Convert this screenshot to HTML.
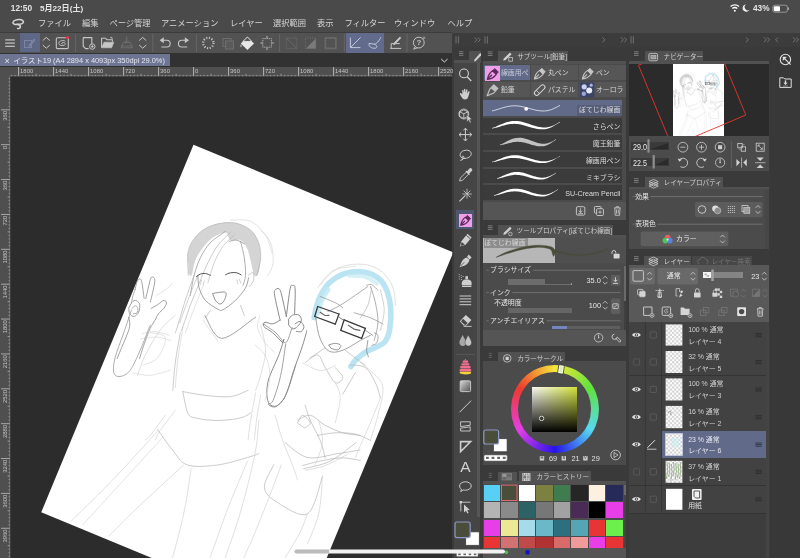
<!DOCTYPE html>
<html lang="ja"><head><meta charset="utf-8"><title>CLIP STUDIO PAINT</title>
<style>
html,body{margin:0;padding:0;background:#3d3d3d;}
#app{position:relative;width:800px;height:558px;overflow:hidden;background:#3d3d3d;font-family:"Liberation Sans","Noto Sans CJK JP",sans-serif;}
#app div,#app span{position:absolute;white-space:nowrap;}
#app svg.ov{position:absolute;left:0;top:0;will-change:transform;}
</style></head><body><div id="app">
<div style="left:0.00px;top:0.00px;width:800.00px;height:32.50px;background:#4a4a4a;"></div>
<div style="left:0.00px;top:32.50px;width:452.30px;height:20.70px;background:#525252;"></div>
<div style="left:0.00px;top:32.00px;width:452.30px;height:0.80px;background:#3c3c3c;"></div>
<div style="left:0.00px;top:53.00px;width:452.30px;height:1.20px;background:#333;"></div>
<div style="left:20.00px;top:33.00px;width:19.60px;height:19.00px;background:#5e6785;"></div>
<div style="left:345.80px;top:33.00px;width:38.60px;height:19.80px;background:#626b8c;"></div>
<div style="left:0.00px;top:54.20px;width:452.30px;height:12.50px;background:#323232;"></div>
<div style="left:0.00px;top:54.20px;width:170.00px;height:11.80px;background:#6e7592;"></div>
<div style="left:0.00px;top:66.60px;width:452.30px;height:491.40px;background:#2c2c2c;"></div>
<div style="left:0.00px;top:66.60px;width:452.30px;height:9.60px;background:#4f4f4f;"></div>
<div style="left:0.00px;top:66.60px;width:10.00px;height:491.40px;background:#4f4f4f;"></div>
<div style="left:0.00px;top:66.60px;width:10.00px;height:9.60px;background:#4f4f4f;"></div>
<div style="left:452.30px;top:32.50px;width:347.70px;height:525.50px;background:#3a3a3a;"></div>
<div style="left:452.30px;top:33.00px;width:347.70px;height:13.50px;background:#3c3c3c;"></div>
<div style="left:453.60px;top:49.60px;width:26.40px;height:508.40px;background:#454545;"></div>
<div style="left:453.60px;top:49.60px;width:27.40px;height:10.70px;background:#3a3a3a;"></div>
<div style="left:469.00px;top:50.60px;width:12.00px;height:9.70px;background:#515151;"></div>
<div style="left:453.60px;top:60.25px;width:27.40px;height:2.50px;background:#515151;"></div>
<div style="left:476.80px;top:62.75px;width:3.00px;height:454.70px;background:#565656;"></div>
<div style="left:456.00px;top:209.80px;width:18.20px;height:19.20px;background:#4f5871;"></div>
<div style="left:458.80px;top:213.60px;width:13.40px;height:13.20px;background:#f09ee8;"></div>
<div style="left:482.60px;top:49.60px;width:143.60px;height:170.00px;background:#4b4b4b;"></div>
<div style="left:482.60px;top:49.00px;width:143.60px;height:12.00px;background:#3a3a3a;"></div>
<div style="left:498.20px;top:51.00px;width:70.00px;height:10.00px;background:#515151;"></div>
<div style="left:482.60px;top:61.00px;width:143.60px;height:3.40px;background:#515151;"></div>
<div style="left:484.20px;top:65.20px;width:45.60px;height:15.00px;background:#616a89;"></div>
<div style="left:485.20px;top:66.40px;width:14.60px;height:14.30px;background:#f09ee8;"></div>
<div style="left:531.20px;top:65.20px;width:46.40px;height:15.00px;background:#565656;"></div>
<div style="left:579.20px;top:65.20px;width:46.60px;height:15.00px;background:#565656;"></div>
<div style="left:484.20px;top:81.80px;width:45.60px;height:15.40px;background:#565656;"></div>
<div style="left:531.20px;top:81.80px;width:46.40px;height:15.40px;background:#565656;"></div>
<div style="left:579.20px;top:81.80px;width:46.60px;height:15.40px;background:#565656;"></div>
<div style="left:483.20px;top:100.30px;width:139.00px;height:15.70px;background:#616a89;"></div>
<div style="left:576.60px;top:104.70px;width:45.60px;height:11.30px;background:#565d78;"></div>
<div style="left:483.20px;top:117.70px;width:139.00px;height:15.30px;background:#3b3b3b;"></div>
<div style="left:483.20px;top:134.90px;width:139.00px;height:15.10px;background:#3b3b3b;"></div>
<div style="left:483.20px;top:152.10px;width:139.00px;height:14.50px;background:#3b3b3b;"></div>
<div style="left:483.20px;top:168.50px;width:139.00px;height:14.70px;background:#3b3b3b;"></div>
<div style="left:483.20px;top:185.30px;width:139.00px;height:14.90px;background:#3b3b3b;"></div>
<div style="left:482.60px;top:201.80px;width:143.60px;height:17.80px;background:#555;"></div>
<div style="left:482.60px;top:221.60px;width:143.60px;height:124.60px;background:#4b4b4b;"></div>
<div style="left:482.60px;top:221.60px;width:143.60px;height:13.20px;background:#3a3a3a;"></div>
<div style="left:498.40px;top:225.00px;width:115.10px;height:9.80px;background:#515151;"></div>
<div style="left:482.60px;top:234.80px;width:143.60px;height:3.00px;background:#515151;"></div>
<div style="left:483.20px;top:237.80px;width:71.80px;height:25.20px;background:#b7b7b7;"></div>
<div style="left:555.00px;top:237.80px;width:71.20px;height:25.20px;background:#4f4f4f;"></div>
<div style="left:483.60px;top:238.20px;width:44.20px;height:10.00px;background:#8d8d8d;"></div>
<div style="left:508.40px;top:284.00px;width:63.40px;height:0.70px;background:#6e6e6e;"></div>
<div style="left:508.40px;top:279.40px;width:37.00px;height:5.20px;background:#6c6c6c;"></div>
<div style="left:571.20px;top:283.00px;width:0.80px;height:1.80px;background:#999;"></div>
<div style="left:508.40px;top:307.60px;width:63.40px;height:5.20px;background:#666;"></div>
<div style="left:552.00px;top:325.80px;width:68.00px;height:3.60px;background:#5e5e5e;"></div>
<div style="left:552.00px;top:325.80px;width:14.80px;height:3.60px;background:#7585bd;"></div>
<div style="left:623.80px;top:266.00px;width:2.40px;height:64.00px;background:#3f3f3f;"></div>
<div style="left:623.80px;top:266.00px;width:2.40px;height:35.40px;background:#6a6a6a;"></div>
<div style="left:482.60px;top:330.40px;width:143.60px;height:15.20px;background:#555;"></div>
<div style="left:482.60px;top:347.60px;width:143.60px;height:117.20px;background:#4b4b4b;"></div>
<div style="left:482.60px;top:347.60px;width:143.60px;height:13.40px;background:#3a3a3a;"></div>
<div style="left:498.40px;top:352.30px;width:66.40px;height:8.70px;background:#515151;"></div>
<div style="left:510.90px;top:365.10px;width:87.8px;height:87.8px;border-radius:50%;background:conic-gradient(from 300deg,#ee3a2e,#f4e83a,#5fe23f,#56daf0,#2614ea,#e63ee6,#ee3a2e);"></div>
<div style="left:518.20px;top:372.40px;width:73.2px;height:73.2px;border-radius:50%;background:#4b4b4b;"></div>
<div style="left:532.3px;top:386.9px;width:45.2px;height:45.2px;background:linear-gradient(to bottom,rgba(0,0,0,0),#000),linear-gradient(to right,#fafaf4,#d3e23a);"></div>
<div style="left:482.60px;top:466.60px;width:143.60px;height:91.40px;background:#4b4b4b;"></div>
<div style="left:482.60px;top:466.60px;width:143.60px;height:14.40px;background:#3a3a3a;"></div>
<div style="left:498.40px;top:471.60px;width:18.20px;height:9.40px;background:#515151;"></div>
<div style="left:519.00px;top:471.00px;width:72.00px;height:10.00px;background:#515151;"></div>
<div style="left:482.60px;top:481.00px;width:143.60px;height:3.00px;background:#515151;"></div>
<div style="left:483.50px;top:484.60px;width:16.50px;height:16.40px;background:#58d0f6;"></div>
<div style="left:501.00px;top:484.60px;width:16.50px;height:16.40px;background:#4a4d3a;"></div>
<div style="left:518.50px;top:484.60px;width:16.50px;height:16.40px;background:#ffffff;"></div>
<div style="left:536.00px;top:484.60px;width:16.50px;height:16.40px;background:#7c8040;"></div>
<div style="left:553.50px;top:484.60px;width:16.50px;height:16.40px;background:#3f7c50;"></div>
<div style="left:571.00px;top:484.60px;width:16.50px;height:16.40px;background:#262626;"></div>
<div style="left:588.50px;top:484.60px;width:16.50px;height:16.40px;background:#fdf0e0;"></div>
<div style="left:606.00px;top:484.60px;width:16.50px;height:16.40px;background:#262a58;"></div>
<div style="left:483.50px;top:502.10px;width:16.50px;height:16.40px;background:#b4b4b4;"></div>
<div style="left:501.00px;top:502.10px;width:16.50px;height:16.40px;background:#8a8a8a;"></div>
<div style="left:518.50px;top:502.10px;width:16.50px;height:16.40px;background:#2c6264;"></div>
<div style="left:536.00px;top:502.10px;width:16.50px;height:16.40px;background:#777777;"></div>
<div style="left:553.50px;top:502.10px;width:16.50px;height:16.40px;background:#a2a2a2;"></div>
<div style="left:571.00px;top:502.10px;width:16.50px;height:16.40px;background:#4a2a56;"></div>
<div style="left:588.50px;top:502.10px;width:16.50px;height:16.40px;background:#000000;"></div>
<div style="left:606.00px;top:502.10px;width:16.50px;height:16.40px;background:#e83ee8;"></div>
<div style="left:483.50px;top:519.60px;width:16.50px;height:16.40px;background:#e83ee8;"></div>
<div style="left:501.00px;top:519.60px;width:16.50px;height:16.40px;background:#ece896;"></div>
<div style="left:518.50px;top:519.60px;width:16.50px;height:16.40px;background:#a6dcea;"></div>
<div style="left:536.00px;top:519.60px;width:16.50px;height:16.40px;background:#6ab8c8;"></div>
<div style="left:553.50px;top:519.60px;width:16.50px;height:16.40px;background:#2c7080;"></div>
<div style="left:571.00px;top:519.60px;width:16.50px;height:16.40px;background:#54a6b6;"></div>
<div style="left:588.50px;top:519.60px;width:16.50px;height:16.40px;background:#e83434;"></div>
<div style="left:606.00px;top:519.60px;width:16.50px;height:16.40px;background:#6cf04c;"></div>
<div style="left:483.50px;top:537.10px;width:16.50px;height:11.00px;background:#e83434;"></div>
<div style="left:501.00px;top:537.10px;width:16.50px;height:11.00px;background:#d27272;"></div>
<div style="left:518.50px;top:537.10px;width:16.50px;height:11.00px;background:#c04a4a;"></div>
<div style="left:536.00px;top:537.10px;width:16.50px;height:11.00px;background:#b03232;"></div>
<div style="left:553.50px;top:537.10px;width:16.50px;height:11.00px;background:#d86a6a;"></div>
<div style="left:571.00px;top:537.10px;width:16.50px;height:11.00px;background:#f09a9a;"></div>
<div style="left:588.50px;top:537.10px;width:16.50px;height:11.00px;background:#e83ee8;"></div>
<div style="left:606.00px;top:537.10px;width:16.50px;height:11.00px;background:#e83434;"></div>
<div style="left:482.60px;top:548.20px;width:143.60px;height:9.80px;background:#555;"></div>
<div style="left:623.60px;top:485.00px;width:2.40px;height:63.00px;background:#444;"></div>
<div style="left:623.60px;top:485.00px;width:2.40px;height:10.00px;background:#6a6a6a;"></div>
<div style="left:628.80px;top:48.80px;width:140.40px;height:122.60px;background:#4b4b4b;"></div>
<div style="left:628.80px;top:48.80px;width:140.40px;height:12.40px;background:#3a3a3a;"></div>
<div style="left:644.70px;top:51.10px;width:58.80px;height:10.10px;background:#515151;"></div>
<div style="left:628.80px;top:61.20px;width:140.40px;height:2.50px;background:#515151;"></div>
<div style="left:628.80px;top:63.60px;width:140.40px;height:72.60px;background:#2b2b2b;"></div>
<div style="left:673.20px;top:63.60px;width:51.00px;height:72.60px;background:#ffffff;"></div>
<div style="left:631.40px;top:141.80px;width:37.80px;height:8.40px;background:#3a3a3a;"></div>
<div style="left:631.40px;top:157.60px;width:37.80px;height:8.40px;background:#3a3a3a;"></div>
<div style="left:628.80px;top:172.70px;width:140.40px;height:76.50px;background:#4b4b4b;"></div>
<div style="left:628.80px;top:172.70px;width:140.40px;height:14.10px;background:#3a3a3a;"></div>
<div style="left:644.70px;top:177.40px;width:78.70px;height:9.40px;background:#515151;"></div>
<div style="left:628.80px;top:186.80px;width:140.40px;height:2.30px;background:#515151;"></div>
<div style="left:765.40px;top:190.00px;width:3.80px;height:58.60px;background:#474747;"></div>
<div style="left:628.80px;top:250.60px;width:140.40px;height:307.40px;background:#3d3d3d;"></div>
<div style="left:628.80px;top:250.60px;width:140.40px;height:14.60px;background:#3a3a3a;"></div>
<div style="left:643.80px;top:255.60px;width:46.80px;height:9.60px;background:#515151;"></div>
<div style="left:692.20px;top:256.20px;width:59.80px;height:9.00px;background:#474747;"></div>
<div style="left:628.80px;top:265.20px;width:140.40px;height:56.40px;background:#595959;"></div>
<div style="left:702.80px;top:272.00px;width:40.00px;height:6.40px;background:#858585;"></div>
<div style="left:702.80px;top:272.00px;width:8.40px;height:6.40px;background:#f4f4f4;"></div>
<div style="left:628.80px;top:321.80px;width:136.80px;height:26.60px;background:#424242;"></div>
<div style="left:628.80px;top:347.90px;width:136.80px;height:0.90px;background:#343434;"></div>
<div style="left:628.80px;top:348.40px;width:136.80px;height:27.40px;background:#424242;"></div>
<div style="left:628.80px;top:375.30px;width:136.80px;height:0.90px;background:#343434;"></div>
<div style="left:628.80px;top:375.80px;width:136.80px;height:27.50px;background:#424242;"></div>
<div style="left:628.80px;top:402.80px;width:136.80px;height:0.90px;background:#343434;"></div>
<div style="left:628.80px;top:403.30px;width:136.80px;height:27.70px;background:#424242;"></div>
<div style="left:628.80px;top:430.50px;width:136.80px;height:0.90px;background:#343434;"></div>
<div style="left:628.80px;top:431.00px;width:136.80px;height:27.20px;background:#424242;"></div>
<div style="left:661.60px;top:431.00px;width:104.00px;height:27.20px;background:#626a89;"></div>
<div style="left:628.80px;top:457.70px;width:136.80px;height:0.90px;background:#343434;"></div>
<div style="left:628.80px;top:458.20px;width:136.80px;height:27.40px;background:#424242;"></div>
<div style="left:628.80px;top:485.10px;width:136.80px;height:0.90px;background:#343434;"></div>
<div style="left:628.80px;top:485.60px;width:136.80px;height:27.40px;background:#424242;"></div>
<div style="left:628.80px;top:512.50px;width:136.80px;height:0.90px;background:#343434;"></div>
<div style="left:765.60px;top:321.80px;width:3.60px;height:236.20px;background:#444444;"></div>
<div style="left:769.80px;top:46.50px;width:30.20px;height:511.50px;background:#383838;"></div>
<svg class="ov" width="800" height="558" viewBox="0 0 800 558" font-family='Liberation Sans,Noto Sans CJK JP,sans-serif'>
<rect x="772.80" y="5.20" width="14.60" height="7.00" fill="none" stroke="#aaa" stroke-width="0.8" rx="2" />
<rect x="773.80" y="6.20" width="6.20" height="5.00" fill="#fff" stroke="none" stroke-width="0" rx="1" />
<path d="M788.4,7.4 v2.6" fill="none" stroke="#aaa" stroke-width="1" />
<path d="M730.6,6.6 a6.2,6.2 0 0 1 8.4,0" fill="none" stroke="#fff" stroke-width="1.3" />
<path d="M732.3,8.6 a3.8,3.8 0 0 1 5,0" fill="none" stroke="#fff" stroke-width="1.3" />
<circle cx="734.80" cy="10.80" r="1.00" fill="#fff" stroke="none" stroke-width="1" />
<path d="M749.4,9.8 a3.6,3.6 0 1 1 -3.2,-5.3 a3,3 0 0 0 3.2,5.3 z" fill="#f0f0f0" stroke="none" stroke-width="1" />
<path d="M17.2,24.6 C14,24.6 12.6,23.4 13,22.2 C13.6,20.4 17,19.4 19.6,19.6 C22.4,19.8 23.8,21 23.4,22.2 C22.8,23.8 19.4,24.4 16.6,24 C18.6,24.6 20.6,25.6 20.4,26.8 C20.2,28 18.8,28.6 17.6,28.6" fill="none" stroke="#d6d6d6" stroke-width="1.5" stroke-linecap="round"/>
<line x1="5.20" y1="39.90" x2="14.90" y2="39.90" stroke="#c6c6c6" stroke-width="1.2" />
<line x1="5.20" y1="43.10" x2="14.90" y2="43.10" stroke="#c6c6c6" stroke-width="1.2" />
<line x1="5.20" y1="46.30" x2="14.90" y2="46.30" stroke="#c6c6c6" stroke-width="1.2" />
<rect x="24.50" y="40.50" width="7.00" height="7.00" fill="none" stroke="#7a84a3" stroke-width="1" rx="0" />
<path d="M28,46 L34,38.5 L35.5,39.8 L30,47 Z" fill="#7a84a3" stroke="none" stroke-width="1" />
<path d="M42.699999999999996,40.599999999999994 L46.3,37.4 L49.9,40.599999999999994" fill="none" stroke="#c6c6c6" stroke-width="1" />
<path d="M42.699999999999996,45.0 L46.3,48.199999999999996 L49.9,45.0" fill="none" stroke="#c6c6c6" stroke-width="1" />
<rect x="56.30" y="37.80" width="12.00" height="10.80" fill="none" stroke="#c6c6c6" stroke-width="1.1" rx="1.2" />
<path d="M65.5,41.2 C62,39.8 58.8,41 58.8,43.3 C58.8,45.6 62.5,46.3 64.6,45 C66.5,43.8 64.5,42 62.5,42.6 C61.2,43 61.5,44.2 62.8,44.2" fill="none" stroke="#c6c6c6" stroke-width="0.9" />
<circle cx="67.40" cy="37.60" r="1.70" fill="#e0354a" stroke="none" stroke-width="1" />
<line x1="75.60" y1="34.00" x2="75.60" y2="52.00" stroke="#6a6a6a" stroke-width="0.8" />
<path d="M83.2,37.6 h8.6 v7 M83.2,37.6 v8.6 l2.4,2.4 h3" fill="none" stroke="#c6c6c6" stroke-width="1.1" />
<circle cx="92.30" cy="46.60" r="2.70" fill="#525252" stroke="#c6c6c6" stroke-width="1" />
<path d="M90.8,46.6 h3 M92.3,45.1 v3" fill="none" stroke="#c6c6c6" stroke-width="0.9" />
<path d="M101.6,47.6 v-9.4 h4 l1.2,1.6 h5.6 v2" fill="none" stroke="#c6c6c6" stroke-width="1.1" />
<path d="M101.6,47.8 l2.4,-5.6 h9.8 l-2.2,5.6 z" fill="#c6c6c6" stroke="#c6c6c6" stroke-width="0.6" />
<path d="M110.2,37.4 h1.8 v1.6" fill="none" stroke="#c6c6c6" stroke-width="0.8" />
<path d="M121,47.8 l2.4,-5.2 h6.8 l2.4,5.2 z" fill="none" stroke="#6e6e6e" stroke-width="1" />
<path d="M126.8,36.6 v6 M124.6,40.6 l2.2,2.2 l2.2,-2.2" fill="none" stroke="#6e6e6e" stroke-width="1" />
<line x1="121.00" y1="46.00" x2="132.60" y2="46.00" stroke="#6e6e6e" stroke-width="0.8" />
<path d="M139.1,40.599999999999994 L142.7,37.4 L146.29999999999998,40.599999999999994" fill="none" stroke="#c6c6c6" stroke-width="1" />
<path d="M139.1,45.0 L142.7,48.199999999999996 L146.29999999999998,45.0" fill="none" stroke="#c6c6c6" stroke-width="1" />
<line x1="152.80" y1="34.00" x2="152.80" y2="52.00" stroke="#6a6a6a" stroke-width="0.8" />
<path d="M163.2,40.2 h3.6 a3.4,3.4 0 0 1 0,6.8 h-5.4" fill="none" stroke="#c6c6c6" stroke-width="1.1" />
<path d="M163.8,37.2 l-4.2,3 l4.2,3 z" fill="#c6c6c6" stroke="none" stroke-width="1" />
<path d="M185.4,40.2 h-3.6 a3.4,3.4 0 0 0 0,6.8 h5.4" fill="none" stroke="#c6c6c6" stroke-width="1.1" />
<path d="M184.8,37.2 l4.2,3 l-4.2,3 z" fill="#c6c6c6" stroke="none" stroke-width="1" />
<line x1="196.40" y1="34.00" x2="196.40" y2="52.00" stroke="#6a6a6a" stroke-width="0.8" />
<circle cx="208.30" cy="43.00" r="5.20" fill="none" stroke="#c6c6c6" stroke-width="2.2" stroke-dasharray="1.1 1.62"/>
<rect x="223.00" y="38.50" width="8.00" height="8.00" fill="none" stroke="#6e6e6e" stroke-width="1" rx="0" />
<rect x="225.50" y="41.00" width="8.00" height="8.00" fill="#5a5a5a" stroke="#6e6e6e" stroke-width="1" rx="0" />
<path d="M247.4,37 L254,43.6 L247.4,50 L240.8,43.6 Z" fill="#e8e8e8" stroke="none" stroke-width="1" />
<path d="M243,41.4 L247.4,37 L251.8,41.4 Z" fill="#525252" stroke="#e8e8e8" stroke-width="0.9" />
<path d="M241,44 q-1.2,2.4 0,3.6 q1.2,-1.2 0,-3.6" fill="#e8e8e8" stroke="none" stroke-width="1" />
<rect x="262.80" y="38.60" width="8.60" height="8.60" fill="none" stroke="#c6c6c6" stroke-width="0.9" rx="0" stroke-dasharray="1.15 1" stroke-dashoffset="0.5"/>
<path d="M267,36 v2.4 M267,47.6 v2.4 M260.4,43 h2.2 M271.6,43 h2.2" fill="none" stroke="#c6c6c6" stroke-width="0.9" />
<line x1="279.60" y1="34.00" x2="279.60" y2="52.00" stroke="#6a6a6a" stroke-width="0.8" />
<rect x="286.40" y="38.00" width="10.40" height="10.40" fill="none" stroke="#6e6e6e" stroke-width="0.9" rx="0" stroke-dasharray="1.2 1"/>
<line x1="286.40" y1="38.00" x2="296.80" y2="48.40" stroke="#6e6e6e" stroke-width="0.9" />
<rect x="305.40" y="38.00" width="10.40" height="10.40" fill="none" stroke="#6e6e6e" stroke-width="0.9" rx="0" stroke-dasharray="1.2 1"/>
<path d="M315.8,38.6 v9.8 h-9.8 z" fill="#7a7a7a" stroke="none" stroke-width="1" />
<rect x="325.40" y="38.00" width="10.40" height="10.40" fill="none" stroke="#6e6e6e" stroke-width="1.6" rx="0" />
<rect x="325.40" y="38.00" width="10.40" height="10.40" fill="none" stroke="#5a5a5a" stroke-width="0.6" rx="0" stroke-dasharray="1.2 1"/>
<line x1="344.30" y1="34.00" x2="344.30" y2="52.00" stroke="#6a6a6a" stroke-width="0.8" />
<path d="M350.4,37.6 v10 h10 M350.8,47.2 L360.6,37.4" fill="none" stroke="#c3c8da" stroke-width="1" />
<path d="M381,37.2 C379,41 376.5,44 374.4,44.2 L369,43.4 C368.6,46.4 371,48.6 375.4,48.2 C377.6,47.6 377.4,45.4 374.4,44.2" fill="none" stroke="#c3c8da" stroke-width="1" />
<path d="M390.2,48.4 h11 M391.2,48.4 v-4.8 h8.6 M394,43.4 L400,37.2" fill="none" stroke="#c6c6c6" stroke-width="1" />
<path d="M393.6,44.6 L400.6,37.4" fill="none" stroke="#c6c6c6" stroke-width="1.8" />
<line x1="407.00" y1="34.00" x2="407.00" y2="52.00" stroke="#6a6a6a" stroke-width="0.8" />
<circle cx="418.80" cy="42.60" r="5.40" fill="none" stroke="#c6c6c6" stroke-width="1" />
<path d="M415.2,46.6 l-1.6,2.6 l3.6,-1.2" fill="none" stroke="#c6c6c6" stroke-width="0.9" />
<circle cx="424.00" cy="37.80" r="0.90" fill="none" stroke="#c6c6c6" stroke-width="0.6" />
<path d="M441.2,59 l3.2,3 l3.2,-3" fill="none" stroke="#ddd" stroke-width="1" />
<line x1="18.60" y1="67.00" x2="18.60" y2="76.20" stroke="#cfcfcf" stroke-width="0.8" />
<text x="20.10" y="73" font-size="5.9" fill="#c4c4c4">1800</text>
<line x1="22.10" y1="74.90" x2="22.10" y2="76.20" stroke="#cfcfcf" stroke-width="0.6" />
<line x1="25.60" y1="74.90" x2="25.60" y2="76.20" stroke="#cfcfcf" stroke-width="0.6" />
<line x1="29.10" y1="74.90" x2="29.10" y2="76.20" stroke="#cfcfcf" stroke-width="0.6" />
<line x1="32.60" y1="74.90" x2="32.60" y2="76.20" stroke="#cfcfcf" stroke-width="0.6" />
<line x1="36.10" y1="73.80" x2="36.10" y2="76.20" stroke="#cfcfcf" stroke-width="0.6" />
<line x1="39.60" y1="74.90" x2="39.60" y2="76.20" stroke="#cfcfcf" stroke-width="0.6" />
<line x1="43.10" y1="74.90" x2="43.10" y2="76.20" stroke="#cfcfcf" stroke-width="0.6" />
<line x1="46.60" y1="74.90" x2="46.60" y2="76.20" stroke="#cfcfcf" stroke-width="0.6" />
<line x1="50.10" y1="74.90" x2="50.10" y2="76.20" stroke="#cfcfcf" stroke-width="0.6" />
<line x1="53.60" y1="67.00" x2="53.60" y2="76.20" stroke="#cfcfcf" stroke-width="0.8" />
<text x="55.10" y="73" font-size="5.9" fill="#c4c4c4">1440</text>
<line x1="57.10" y1="74.90" x2="57.10" y2="76.20" stroke="#cfcfcf" stroke-width="0.6" />
<line x1="60.60" y1="74.90" x2="60.60" y2="76.20" stroke="#cfcfcf" stroke-width="0.6" />
<line x1="64.10" y1="74.90" x2="64.10" y2="76.20" stroke="#cfcfcf" stroke-width="0.6" />
<line x1="67.60" y1="74.90" x2="67.60" y2="76.20" stroke="#cfcfcf" stroke-width="0.6" />
<line x1="71.10" y1="73.80" x2="71.10" y2="76.20" stroke="#cfcfcf" stroke-width="0.6" />
<line x1="74.60" y1="74.90" x2="74.60" y2="76.20" stroke="#cfcfcf" stroke-width="0.6" />
<line x1="78.10" y1="74.90" x2="78.10" y2="76.20" stroke="#cfcfcf" stroke-width="0.6" />
<line x1="81.60" y1="74.90" x2="81.60" y2="76.20" stroke="#cfcfcf" stroke-width="0.6" />
<line x1="85.10" y1="74.90" x2="85.10" y2="76.20" stroke="#cfcfcf" stroke-width="0.6" />
<line x1="88.60" y1="67.00" x2="88.60" y2="76.20" stroke="#cfcfcf" stroke-width="0.8" />
<text x="90.10" y="73" font-size="5.9" fill="#c4c4c4">1080</text>
<line x1="92.10" y1="74.90" x2="92.10" y2="76.20" stroke="#cfcfcf" stroke-width="0.6" />
<line x1="95.60" y1="74.90" x2="95.60" y2="76.20" stroke="#cfcfcf" stroke-width="0.6" />
<line x1="99.10" y1="74.90" x2="99.10" y2="76.20" stroke="#cfcfcf" stroke-width="0.6" />
<line x1="102.60" y1="74.90" x2="102.60" y2="76.20" stroke="#cfcfcf" stroke-width="0.6" />
<line x1="106.10" y1="73.80" x2="106.10" y2="76.20" stroke="#cfcfcf" stroke-width="0.6" />
<line x1="109.60" y1="74.90" x2="109.60" y2="76.20" stroke="#cfcfcf" stroke-width="0.6" />
<line x1="113.10" y1="74.90" x2="113.10" y2="76.20" stroke="#cfcfcf" stroke-width="0.6" />
<line x1="116.60" y1="74.90" x2="116.60" y2="76.20" stroke="#cfcfcf" stroke-width="0.6" />
<line x1="120.10" y1="74.90" x2="120.10" y2="76.20" stroke="#cfcfcf" stroke-width="0.6" />
<line x1="123.60" y1="67.00" x2="123.60" y2="76.20" stroke="#cfcfcf" stroke-width="0.8" />
<text x="125.10" y="73" font-size="5.9" fill="#c4c4c4">720</text>
<line x1="127.10" y1="74.90" x2="127.10" y2="76.20" stroke="#cfcfcf" stroke-width="0.6" />
<line x1="130.60" y1="74.90" x2="130.60" y2="76.20" stroke="#cfcfcf" stroke-width="0.6" />
<line x1="134.10" y1="74.90" x2="134.10" y2="76.20" stroke="#cfcfcf" stroke-width="0.6" />
<line x1="137.60" y1="74.90" x2="137.60" y2="76.20" stroke="#cfcfcf" stroke-width="0.6" />
<line x1="141.10" y1="73.80" x2="141.10" y2="76.20" stroke="#cfcfcf" stroke-width="0.6" />
<line x1="144.60" y1="74.90" x2="144.60" y2="76.20" stroke="#cfcfcf" stroke-width="0.6" />
<line x1="148.10" y1="74.90" x2="148.10" y2="76.20" stroke="#cfcfcf" stroke-width="0.6" />
<line x1="151.60" y1="74.90" x2="151.60" y2="76.20" stroke="#cfcfcf" stroke-width="0.6" />
<line x1="155.10" y1="74.90" x2="155.10" y2="76.20" stroke="#cfcfcf" stroke-width="0.6" />
<line x1="158.60" y1="67.00" x2="158.60" y2="76.20" stroke="#cfcfcf" stroke-width="0.8" />
<text x="160.10" y="73" font-size="5.9" fill="#c4c4c4">360</text>
<line x1="162.10" y1="74.90" x2="162.10" y2="76.20" stroke="#cfcfcf" stroke-width="0.6" />
<line x1="165.60" y1="74.90" x2="165.60" y2="76.20" stroke="#cfcfcf" stroke-width="0.6" />
<line x1="169.10" y1="74.90" x2="169.10" y2="76.20" stroke="#cfcfcf" stroke-width="0.6" />
<line x1="172.60" y1="74.90" x2="172.60" y2="76.20" stroke="#cfcfcf" stroke-width="0.6" />
<line x1="176.10" y1="73.80" x2="176.10" y2="76.20" stroke="#cfcfcf" stroke-width="0.6" />
<line x1="179.60" y1="74.90" x2="179.60" y2="76.20" stroke="#cfcfcf" stroke-width="0.6" />
<line x1="183.10" y1="74.90" x2="183.10" y2="76.20" stroke="#cfcfcf" stroke-width="0.6" />
<line x1="186.60" y1="74.90" x2="186.60" y2="76.20" stroke="#cfcfcf" stroke-width="0.6" />
<line x1="190.10" y1="74.90" x2="190.10" y2="76.20" stroke="#cfcfcf" stroke-width="0.6" />
<line x1="193.60" y1="67.00" x2="193.60" y2="76.20" stroke="#cfcfcf" stroke-width="0.8" />
<text x="195.10" y="73" font-size="5.9" fill="#c4c4c4">0</text>
<line x1="197.10" y1="74.90" x2="197.10" y2="76.20" stroke="#cfcfcf" stroke-width="0.6" />
<line x1="200.60" y1="74.90" x2="200.60" y2="76.20" stroke="#cfcfcf" stroke-width="0.6" />
<line x1="204.10" y1="74.90" x2="204.10" y2="76.20" stroke="#cfcfcf" stroke-width="0.6" />
<line x1="207.60" y1="74.90" x2="207.60" y2="76.20" stroke="#cfcfcf" stroke-width="0.6" />
<line x1="211.10" y1="73.80" x2="211.10" y2="76.20" stroke="#cfcfcf" stroke-width="0.6" />
<line x1="214.60" y1="74.90" x2="214.60" y2="76.20" stroke="#cfcfcf" stroke-width="0.6" />
<line x1="218.10" y1="74.90" x2="218.10" y2="76.20" stroke="#cfcfcf" stroke-width="0.6" />
<line x1="221.60" y1="74.90" x2="221.60" y2="76.20" stroke="#cfcfcf" stroke-width="0.6" />
<line x1="225.10" y1="74.90" x2="225.10" y2="76.20" stroke="#cfcfcf" stroke-width="0.6" />
<line x1="228.60" y1="67.00" x2="228.60" y2="76.20" stroke="#cfcfcf" stroke-width="0.8" />
<text x="230.10" y="73" font-size="5.9" fill="#c4c4c4">360</text>
<line x1="232.10" y1="74.90" x2="232.10" y2="76.20" stroke="#cfcfcf" stroke-width="0.6" />
<line x1="235.60" y1="74.90" x2="235.60" y2="76.20" stroke="#cfcfcf" stroke-width="0.6" />
<line x1="239.10" y1="74.90" x2="239.10" y2="76.20" stroke="#cfcfcf" stroke-width="0.6" />
<line x1="242.60" y1="74.90" x2="242.60" y2="76.20" stroke="#cfcfcf" stroke-width="0.6" />
<line x1="246.10" y1="73.80" x2="246.10" y2="76.20" stroke="#cfcfcf" stroke-width="0.6" />
<line x1="249.60" y1="74.90" x2="249.60" y2="76.20" stroke="#cfcfcf" stroke-width="0.6" />
<line x1="253.10" y1="74.90" x2="253.10" y2="76.20" stroke="#cfcfcf" stroke-width="0.6" />
<line x1="256.60" y1="74.90" x2="256.60" y2="76.20" stroke="#cfcfcf" stroke-width="0.6" />
<line x1="260.10" y1="74.90" x2="260.10" y2="76.20" stroke="#cfcfcf" stroke-width="0.6" />
<line x1="263.60" y1="67.00" x2="263.60" y2="76.20" stroke="#cfcfcf" stroke-width="0.8" />
<text x="265.10" y="73" font-size="5.9" fill="#c4c4c4">720</text>
<line x1="267.10" y1="74.90" x2="267.10" y2="76.20" stroke="#cfcfcf" stroke-width="0.6" />
<line x1="270.60" y1="74.90" x2="270.60" y2="76.20" stroke="#cfcfcf" stroke-width="0.6" />
<line x1="274.10" y1="74.90" x2="274.10" y2="76.20" stroke="#cfcfcf" stroke-width="0.6" />
<line x1="277.60" y1="74.90" x2="277.60" y2="76.20" stroke="#cfcfcf" stroke-width="0.6" />
<line x1="281.10" y1="73.80" x2="281.10" y2="76.20" stroke="#cfcfcf" stroke-width="0.6" />
<line x1="284.60" y1="74.90" x2="284.60" y2="76.20" stroke="#cfcfcf" stroke-width="0.6" />
<line x1="288.10" y1="74.90" x2="288.10" y2="76.20" stroke="#cfcfcf" stroke-width="0.6" />
<line x1="291.60" y1="74.90" x2="291.60" y2="76.20" stroke="#cfcfcf" stroke-width="0.6" />
<line x1="295.10" y1="74.90" x2="295.10" y2="76.20" stroke="#cfcfcf" stroke-width="0.6" />
<line x1="298.60" y1="67.00" x2="298.60" y2="76.20" stroke="#cfcfcf" stroke-width="0.8" />
<text x="300.10" y="73" font-size="5.9" fill="#c4c4c4">1080</text>
<line x1="302.10" y1="74.90" x2="302.10" y2="76.20" stroke="#cfcfcf" stroke-width="0.6" />
<line x1="305.60" y1="74.90" x2="305.60" y2="76.20" stroke="#cfcfcf" stroke-width="0.6" />
<line x1="309.10" y1="74.90" x2="309.10" y2="76.20" stroke="#cfcfcf" stroke-width="0.6" />
<line x1="312.60" y1="74.90" x2="312.60" y2="76.20" stroke="#cfcfcf" stroke-width="0.6" />
<line x1="316.10" y1="73.80" x2="316.10" y2="76.20" stroke="#cfcfcf" stroke-width="0.6" />
<line x1="319.60" y1="74.90" x2="319.60" y2="76.20" stroke="#cfcfcf" stroke-width="0.6" />
<line x1="323.10" y1="74.90" x2="323.10" y2="76.20" stroke="#cfcfcf" stroke-width="0.6" />
<line x1="326.60" y1="74.90" x2="326.60" y2="76.20" stroke="#cfcfcf" stroke-width="0.6" />
<line x1="330.10" y1="74.90" x2="330.10" y2="76.20" stroke="#cfcfcf" stroke-width="0.6" />
<line x1="333.60" y1="67.00" x2="333.60" y2="76.20" stroke="#cfcfcf" stroke-width="0.8" />
<text x="335.10" y="73" font-size="5.9" fill="#c4c4c4">1440</text>
<line x1="337.10" y1="74.90" x2="337.10" y2="76.20" stroke="#cfcfcf" stroke-width="0.6" />
<line x1="340.60" y1="74.90" x2="340.60" y2="76.20" stroke="#cfcfcf" stroke-width="0.6" />
<line x1="344.10" y1="74.90" x2="344.10" y2="76.20" stroke="#cfcfcf" stroke-width="0.6" />
<line x1="347.60" y1="74.90" x2="347.60" y2="76.20" stroke="#cfcfcf" stroke-width="0.6" />
<line x1="351.10" y1="73.80" x2="351.10" y2="76.20" stroke="#cfcfcf" stroke-width="0.6" />
<line x1="354.60" y1="74.90" x2="354.60" y2="76.20" stroke="#cfcfcf" stroke-width="0.6" />
<line x1="358.10" y1="74.90" x2="358.10" y2="76.20" stroke="#cfcfcf" stroke-width="0.6" />
<line x1="361.60" y1="74.90" x2="361.60" y2="76.20" stroke="#cfcfcf" stroke-width="0.6" />
<line x1="365.10" y1="74.90" x2="365.10" y2="76.20" stroke="#cfcfcf" stroke-width="0.6" />
<line x1="368.60" y1="67.00" x2="368.60" y2="76.20" stroke="#cfcfcf" stroke-width="0.8" />
<text x="370.10" y="73" font-size="5.9" fill="#c4c4c4">1800</text>
<line x1="372.10" y1="74.90" x2="372.10" y2="76.20" stroke="#cfcfcf" stroke-width="0.6" />
<line x1="375.60" y1="74.90" x2="375.60" y2="76.20" stroke="#cfcfcf" stroke-width="0.6" />
<line x1="379.10" y1="74.90" x2="379.10" y2="76.20" stroke="#cfcfcf" stroke-width="0.6" />
<line x1="382.60" y1="74.90" x2="382.60" y2="76.20" stroke="#cfcfcf" stroke-width="0.6" />
<line x1="386.10" y1="73.80" x2="386.10" y2="76.20" stroke="#cfcfcf" stroke-width="0.6" />
<line x1="389.60" y1="74.90" x2="389.60" y2="76.20" stroke="#cfcfcf" stroke-width="0.6" />
<line x1="393.10" y1="74.90" x2="393.10" y2="76.20" stroke="#cfcfcf" stroke-width="0.6" />
<line x1="396.60" y1="74.90" x2="396.60" y2="76.20" stroke="#cfcfcf" stroke-width="0.6" />
<line x1="400.10" y1="74.90" x2="400.10" y2="76.20" stroke="#cfcfcf" stroke-width="0.6" />
<line x1="403.60" y1="67.00" x2="403.60" y2="76.20" stroke="#cfcfcf" stroke-width="0.8" />
<text x="405.10" y="73" font-size="5.9" fill="#c4c4c4">2160</text>
<line x1="407.10" y1="74.90" x2="407.10" y2="76.20" stroke="#cfcfcf" stroke-width="0.6" />
<line x1="410.60" y1="74.90" x2="410.60" y2="76.20" stroke="#cfcfcf" stroke-width="0.6" />
<line x1="414.10" y1="74.90" x2="414.10" y2="76.20" stroke="#cfcfcf" stroke-width="0.6" />
<line x1="417.60" y1="74.90" x2="417.60" y2="76.20" stroke="#cfcfcf" stroke-width="0.6" />
<line x1="421.10" y1="73.80" x2="421.10" y2="76.20" stroke="#cfcfcf" stroke-width="0.6" />
<line x1="424.60" y1="74.90" x2="424.60" y2="76.20" stroke="#cfcfcf" stroke-width="0.6" />
<line x1="428.10" y1="74.90" x2="428.10" y2="76.20" stroke="#cfcfcf" stroke-width="0.6" />
<line x1="431.60" y1="74.90" x2="431.60" y2="76.20" stroke="#cfcfcf" stroke-width="0.6" />
<line x1="435.10" y1="74.90" x2="435.10" y2="76.20" stroke="#cfcfcf" stroke-width="0.6" />
<line x1="438.60" y1="67.00" x2="438.60" y2="76.20" stroke="#cfcfcf" stroke-width="0.8" />
<text x="440.10" y="73" font-size="5.9" fill="#c4c4c4">2520</text>
<line x1="442.10" y1="74.90" x2="442.10" y2="76.20" stroke="#cfcfcf" stroke-width="0.6" />
<line x1="445.60" y1="74.90" x2="445.60" y2="76.20" stroke="#cfcfcf" stroke-width="0.6" />
<line x1="449.10" y1="74.90" x2="449.10" y2="76.20" stroke="#cfcfcf" stroke-width="0.6" />
<line x1="15.10" y1="74.90" x2="15.10" y2="76.20" stroke="#cfcfcf" stroke-width="0.6" />
<line x1="11.60" y1="74.90" x2="11.60" y2="76.20" stroke="#cfcfcf" stroke-width="0.6" />
<line x1="10.00" y1="75.90" x2="452.30" y2="75.90" stroke="#8a8a8a" stroke-width="0.6" />
<line x1="1.00" y1="109.83" x2="10.00" y2="109.83" stroke="#cfcfcf" stroke-width="0.7" />
<text transform="translate(6.6,111.03) rotate(-90)" text-anchor="end" font-size="5.9" fill="#c4c4c4">360</text>
<line x1="8.70" y1="113.32" x2="10.00" y2="113.32" stroke="#cfcfcf" stroke-width="0.6" />
<line x1="8.70" y1="116.80" x2="10.00" y2="116.80" stroke="#cfcfcf" stroke-width="0.6" />
<line x1="8.70" y1="120.29" x2="10.00" y2="120.29" stroke="#cfcfcf" stroke-width="0.6" />
<line x1="8.70" y1="123.78" x2="10.00" y2="123.78" stroke="#cfcfcf" stroke-width="0.6" />
<line x1="7.60" y1="127.26" x2="10.00" y2="127.26" stroke="#cfcfcf" stroke-width="0.6" />
<line x1="8.70" y1="130.75" x2="10.00" y2="130.75" stroke="#cfcfcf" stroke-width="0.6" />
<line x1="8.70" y1="134.24" x2="10.00" y2="134.24" stroke="#cfcfcf" stroke-width="0.6" />
<line x1="8.70" y1="137.73" x2="10.00" y2="137.73" stroke="#cfcfcf" stroke-width="0.6" />
<line x1="8.70" y1="141.21" x2="10.00" y2="141.21" stroke="#cfcfcf" stroke-width="0.6" />
<line x1="1.00" y1="144.70" x2="10.00" y2="144.70" stroke="#cfcfcf" stroke-width="0.7" />
<text transform="translate(6.6,145.90) rotate(-90)" text-anchor="end" font-size="5.9" fill="#c4c4c4">0</text>
<line x1="8.70" y1="148.19" x2="10.00" y2="148.19" stroke="#cfcfcf" stroke-width="0.6" />
<line x1="8.70" y1="151.67" x2="10.00" y2="151.67" stroke="#cfcfcf" stroke-width="0.6" />
<line x1="8.70" y1="155.16" x2="10.00" y2="155.16" stroke="#cfcfcf" stroke-width="0.6" />
<line x1="8.70" y1="158.65" x2="10.00" y2="158.65" stroke="#cfcfcf" stroke-width="0.6" />
<line x1="7.60" y1="162.13" x2="10.00" y2="162.13" stroke="#cfcfcf" stroke-width="0.6" />
<line x1="8.70" y1="165.62" x2="10.00" y2="165.62" stroke="#cfcfcf" stroke-width="0.6" />
<line x1="8.70" y1="169.11" x2="10.00" y2="169.11" stroke="#cfcfcf" stroke-width="0.6" />
<line x1="8.70" y1="172.60" x2="10.00" y2="172.60" stroke="#cfcfcf" stroke-width="0.6" />
<line x1="8.70" y1="176.08" x2="10.00" y2="176.08" stroke="#cfcfcf" stroke-width="0.6" />
<line x1="1.00" y1="179.57" x2="10.00" y2="179.57" stroke="#cfcfcf" stroke-width="0.7" />
<text transform="translate(6.6,180.77) rotate(-90)" text-anchor="end" font-size="5.9" fill="#c4c4c4">360</text>
<line x1="8.70" y1="183.06" x2="10.00" y2="183.06" stroke="#cfcfcf" stroke-width="0.6" />
<line x1="8.70" y1="186.54" x2="10.00" y2="186.54" stroke="#cfcfcf" stroke-width="0.6" />
<line x1="8.70" y1="190.03" x2="10.00" y2="190.03" stroke="#cfcfcf" stroke-width="0.6" />
<line x1="8.70" y1="193.52" x2="10.00" y2="193.52" stroke="#cfcfcf" stroke-width="0.6" />
<line x1="7.60" y1="197.00" x2="10.00" y2="197.00" stroke="#cfcfcf" stroke-width="0.6" />
<line x1="8.70" y1="200.49" x2="10.00" y2="200.49" stroke="#cfcfcf" stroke-width="0.6" />
<line x1="8.70" y1="203.98" x2="10.00" y2="203.98" stroke="#cfcfcf" stroke-width="0.6" />
<line x1="8.70" y1="207.47" x2="10.00" y2="207.47" stroke="#cfcfcf" stroke-width="0.6" />
<line x1="8.70" y1="210.95" x2="10.00" y2="210.95" stroke="#cfcfcf" stroke-width="0.6" />
<line x1="1.00" y1="214.44" x2="10.00" y2="214.44" stroke="#cfcfcf" stroke-width="0.7" />
<text transform="translate(6.6,215.64) rotate(-90)" text-anchor="end" font-size="5.9" fill="#c4c4c4">720</text>
<line x1="8.70" y1="217.93" x2="10.00" y2="217.93" stroke="#cfcfcf" stroke-width="0.6" />
<line x1="8.70" y1="221.41" x2="10.00" y2="221.41" stroke="#cfcfcf" stroke-width="0.6" />
<line x1="8.70" y1="224.90" x2="10.00" y2="224.90" stroke="#cfcfcf" stroke-width="0.6" />
<line x1="8.70" y1="228.39" x2="10.00" y2="228.39" stroke="#cfcfcf" stroke-width="0.6" />
<line x1="7.60" y1="231.88" x2="10.00" y2="231.88" stroke="#cfcfcf" stroke-width="0.6" />
<line x1="8.70" y1="235.36" x2="10.00" y2="235.36" stroke="#cfcfcf" stroke-width="0.6" />
<line x1="8.70" y1="238.85" x2="10.00" y2="238.85" stroke="#cfcfcf" stroke-width="0.6" />
<line x1="8.70" y1="242.34" x2="10.00" y2="242.34" stroke="#cfcfcf" stroke-width="0.6" />
<line x1="8.70" y1="245.82" x2="10.00" y2="245.82" stroke="#cfcfcf" stroke-width="0.6" />
<line x1="1.00" y1="249.31" x2="10.00" y2="249.31" stroke="#cfcfcf" stroke-width="0.7" />
<text transform="translate(6.6,250.51) rotate(-90)" text-anchor="end" font-size="5.9" fill="#c4c4c4">1080</text>
<line x1="8.70" y1="252.80" x2="10.00" y2="252.80" stroke="#cfcfcf" stroke-width="0.6" />
<line x1="8.70" y1="256.28" x2="10.00" y2="256.28" stroke="#cfcfcf" stroke-width="0.6" />
<line x1="8.70" y1="259.77" x2="10.00" y2="259.77" stroke="#cfcfcf" stroke-width="0.6" />
<line x1="8.70" y1="263.26" x2="10.00" y2="263.26" stroke="#cfcfcf" stroke-width="0.6" />
<line x1="7.60" y1="266.74" x2="10.00" y2="266.74" stroke="#cfcfcf" stroke-width="0.6" />
<line x1="8.70" y1="270.23" x2="10.00" y2="270.23" stroke="#cfcfcf" stroke-width="0.6" />
<line x1="8.70" y1="273.72" x2="10.00" y2="273.72" stroke="#cfcfcf" stroke-width="0.6" />
<line x1="8.70" y1="277.21" x2="10.00" y2="277.21" stroke="#cfcfcf" stroke-width="0.6" />
<line x1="8.70" y1="280.69" x2="10.00" y2="280.69" stroke="#cfcfcf" stroke-width="0.6" />
<line x1="1.00" y1="284.18" x2="10.00" y2="284.18" stroke="#cfcfcf" stroke-width="0.7" />
<text transform="translate(6.6,285.38) rotate(-90)" text-anchor="end" font-size="5.9" fill="#c4c4c4">1440</text>
<line x1="8.70" y1="287.67" x2="10.00" y2="287.67" stroke="#cfcfcf" stroke-width="0.6" />
<line x1="8.70" y1="291.15" x2="10.00" y2="291.15" stroke="#cfcfcf" stroke-width="0.6" />
<line x1="8.70" y1="294.64" x2="10.00" y2="294.64" stroke="#cfcfcf" stroke-width="0.6" />
<line x1="8.70" y1="298.13" x2="10.00" y2="298.13" stroke="#cfcfcf" stroke-width="0.6" />
<line x1="7.60" y1="301.61" x2="10.00" y2="301.61" stroke="#cfcfcf" stroke-width="0.6" />
<line x1="8.70" y1="305.10" x2="10.00" y2="305.10" stroke="#cfcfcf" stroke-width="0.6" />
<line x1="8.70" y1="308.59" x2="10.00" y2="308.59" stroke="#cfcfcf" stroke-width="0.6" />
<line x1="8.70" y1="312.08" x2="10.00" y2="312.08" stroke="#cfcfcf" stroke-width="0.6" />
<line x1="8.70" y1="315.56" x2="10.00" y2="315.56" stroke="#cfcfcf" stroke-width="0.6" />
<line x1="1.00" y1="319.05" x2="10.00" y2="319.05" stroke="#cfcfcf" stroke-width="0.7" />
<text transform="translate(6.6,320.25) rotate(-90)" text-anchor="end" font-size="5.9" fill="#c4c4c4">1800</text>
<line x1="8.70" y1="322.54" x2="10.00" y2="322.54" stroke="#cfcfcf" stroke-width="0.6" />
<line x1="8.70" y1="326.02" x2="10.00" y2="326.02" stroke="#cfcfcf" stroke-width="0.6" />
<line x1="8.70" y1="329.51" x2="10.00" y2="329.51" stroke="#cfcfcf" stroke-width="0.6" />
<line x1="8.70" y1="333.00" x2="10.00" y2="333.00" stroke="#cfcfcf" stroke-width="0.6" />
<line x1="7.60" y1="336.48" x2="10.00" y2="336.48" stroke="#cfcfcf" stroke-width="0.6" />
<line x1="8.70" y1="339.97" x2="10.00" y2="339.97" stroke="#cfcfcf" stroke-width="0.6" />
<line x1="8.70" y1="343.46" x2="10.00" y2="343.46" stroke="#cfcfcf" stroke-width="0.6" />
<line x1="8.70" y1="346.95" x2="10.00" y2="346.95" stroke="#cfcfcf" stroke-width="0.6" />
<line x1="8.70" y1="350.43" x2="10.00" y2="350.43" stroke="#cfcfcf" stroke-width="0.6" />
<line x1="1.00" y1="353.92" x2="10.00" y2="353.92" stroke="#cfcfcf" stroke-width="0.7" />
<text transform="translate(6.6,355.12) rotate(-90)" text-anchor="end" font-size="5.9" fill="#c4c4c4">2160</text>
<line x1="8.70" y1="357.41" x2="10.00" y2="357.41" stroke="#cfcfcf" stroke-width="0.6" />
<line x1="8.70" y1="360.89" x2="10.00" y2="360.89" stroke="#cfcfcf" stroke-width="0.6" />
<line x1="8.70" y1="364.38" x2="10.00" y2="364.38" stroke="#cfcfcf" stroke-width="0.6" />
<line x1="8.70" y1="367.87" x2="10.00" y2="367.87" stroke="#cfcfcf" stroke-width="0.6" />
<line x1="7.60" y1="371.35" x2="10.00" y2="371.35" stroke="#cfcfcf" stroke-width="0.6" />
<line x1="8.70" y1="374.84" x2="10.00" y2="374.84" stroke="#cfcfcf" stroke-width="0.6" />
<line x1="8.70" y1="378.33" x2="10.00" y2="378.33" stroke="#cfcfcf" stroke-width="0.6" />
<line x1="8.70" y1="381.82" x2="10.00" y2="381.82" stroke="#cfcfcf" stroke-width="0.6" />
<line x1="8.70" y1="385.30" x2="10.00" y2="385.30" stroke="#cfcfcf" stroke-width="0.6" />
<line x1="1.00" y1="388.79" x2="10.00" y2="388.79" stroke="#cfcfcf" stroke-width="0.7" />
<text transform="translate(6.6,389.99) rotate(-90)" text-anchor="end" font-size="5.9" fill="#c4c4c4">2520</text>
<line x1="8.70" y1="392.28" x2="10.00" y2="392.28" stroke="#cfcfcf" stroke-width="0.6" />
<line x1="8.70" y1="395.76" x2="10.00" y2="395.76" stroke="#cfcfcf" stroke-width="0.6" />
<line x1="8.70" y1="399.25" x2="10.00" y2="399.25" stroke="#cfcfcf" stroke-width="0.6" />
<line x1="8.70" y1="402.74" x2="10.00" y2="402.74" stroke="#cfcfcf" stroke-width="0.6" />
<line x1="7.60" y1="406.22" x2="10.00" y2="406.22" stroke="#cfcfcf" stroke-width="0.6" />
<line x1="8.70" y1="409.71" x2="10.00" y2="409.71" stroke="#cfcfcf" stroke-width="0.6" />
<line x1="8.70" y1="413.20" x2="10.00" y2="413.20" stroke="#cfcfcf" stroke-width="0.6" />
<line x1="8.70" y1="416.69" x2="10.00" y2="416.69" stroke="#cfcfcf" stroke-width="0.6" />
<line x1="8.70" y1="420.17" x2="10.00" y2="420.17" stroke="#cfcfcf" stroke-width="0.6" />
<line x1="1.00" y1="423.66" x2="10.00" y2="423.66" stroke="#cfcfcf" stroke-width="0.7" />
<text transform="translate(6.6,424.86) rotate(-90)" text-anchor="end" font-size="5.9" fill="#c4c4c4">2880</text>
<line x1="8.70" y1="427.15" x2="10.00" y2="427.15" stroke="#cfcfcf" stroke-width="0.6" />
<line x1="8.70" y1="430.63" x2="10.00" y2="430.63" stroke="#cfcfcf" stroke-width="0.6" />
<line x1="8.70" y1="434.12" x2="10.00" y2="434.12" stroke="#cfcfcf" stroke-width="0.6" />
<line x1="8.70" y1="437.61" x2="10.00" y2="437.61" stroke="#cfcfcf" stroke-width="0.6" />
<line x1="7.60" y1="441.09" x2="10.00" y2="441.09" stroke="#cfcfcf" stroke-width="0.6" />
<line x1="8.70" y1="444.58" x2="10.00" y2="444.58" stroke="#cfcfcf" stroke-width="0.6" />
<line x1="8.70" y1="448.07" x2="10.00" y2="448.07" stroke="#cfcfcf" stroke-width="0.6" />
<line x1="8.70" y1="451.56" x2="10.00" y2="451.56" stroke="#cfcfcf" stroke-width="0.6" />
<line x1="8.70" y1="455.04" x2="10.00" y2="455.04" stroke="#cfcfcf" stroke-width="0.6" />
<line x1="1.00" y1="458.53" x2="10.00" y2="458.53" stroke="#cfcfcf" stroke-width="0.7" />
<text transform="translate(6.6,459.73) rotate(-90)" text-anchor="end" font-size="5.9" fill="#c4c4c4">3240</text>
<line x1="8.70" y1="462.02" x2="10.00" y2="462.02" stroke="#cfcfcf" stroke-width="0.6" />
<line x1="8.70" y1="465.50" x2="10.00" y2="465.50" stroke="#cfcfcf" stroke-width="0.6" />
<line x1="8.70" y1="468.99" x2="10.00" y2="468.99" stroke="#cfcfcf" stroke-width="0.6" />
<line x1="8.70" y1="472.48" x2="10.00" y2="472.48" stroke="#cfcfcf" stroke-width="0.6" />
<line x1="7.60" y1="475.96" x2="10.00" y2="475.96" stroke="#cfcfcf" stroke-width="0.6" />
<line x1="8.70" y1="479.45" x2="10.00" y2="479.45" stroke="#cfcfcf" stroke-width="0.6" />
<line x1="8.70" y1="482.94" x2="10.00" y2="482.94" stroke="#cfcfcf" stroke-width="0.6" />
<line x1="8.70" y1="486.43" x2="10.00" y2="486.43" stroke="#cfcfcf" stroke-width="0.6" />
<line x1="8.70" y1="489.91" x2="10.00" y2="489.91" stroke="#cfcfcf" stroke-width="0.6" />
<line x1="1.00" y1="493.40" x2="10.00" y2="493.40" stroke="#cfcfcf" stroke-width="0.7" />
<text transform="translate(6.6,494.60) rotate(-90)" text-anchor="end" font-size="5.9" fill="#c4c4c4">3600</text>
<line x1="8.70" y1="496.89" x2="10.00" y2="496.89" stroke="#cfcfcf" stroke-width="0.6" />
<line x1="8.70" y1="500.37" x2="10.00" y2="500.37" stroke="#cfcfcf" stroke-width="0.6" />
<line x1="8.70" y1="503.86" x2="10.00" y2="503.86" stroke="#cfcfcf" stroke-width="0.6" />
<line x1="8.70" y1="507.35" x2="10.00" y2="507.35" stroke="#cfcfcf" stroke-width="0.6" />
<line x1="7.60" y1="510.83" x2="10.00" y2="510.83" stroke="#cfcfcf" stroke-width="0.6" />
<line x1="8.70" y1="514.32" x2="10.00" y2="514.32" stroke="#cfcfcf" stroke-width="0.6" />
<line x1="8.70" y1="517.81" x2="10.00" y2="517.81" stroke="#cfcfcf" stroke-width="0.6" />
<line x1="8.70" y1="521.30" x2="10.00" y2="521.30" stroke="#cfcfcf" stroke-width="0.6" />
<line x1="8.70" y1="524.78" x2="10.00" y2="524.78" stroke="#cfcfcf" stroke-width="0.6" />
<line x1="1.00" y1="528.27" x2="10.00" y2="528.27" stroke="#cfcfcf" stroke-width="0.7" />
<text transform="translate(6.6,529.47) rotate(-90)" text-anchor="end" font-size="5.9" fill="#c4c4c4">3960</text>
<line x1="8.70" y1="531.76" x2="10.00" y2="531.76" stroke="#cfcfcf" stroke-width="0.6" />
<line x1="8.70" y1="535.24" x2="10.00" y2="535.24" stroke="#cfcfcf" stroke-width="0.6" />
<line x1="8.70" y1="538.73" x2="10.00" y2="538.73" stroke="#cfcfcf" stroke-width="0.6" />
<line x1="8.70" y1="542.22" x2="10.00" y2="542.22" stroke="#cfcfcf" stroke-width="0.6" />
<line x1="7.60" y1="545.70" x2="10.00" y2="545.70" stroke="#cfcfcf" stroke-width="0.6" />
<line x1="8.70" y1="549.19" x2="10.00" y2="549.19" stroke="#cfcfcf" stroke-width="0.6" />
<line x1="8.70" y1="552.68" x2="10.00" y2="552.68" stroke="#cfcfcf" stroke-width="0.6" />
<line x1="8.70" y1="556.17" x2="10.00" y2="556.17" stroke="#cfcfcf" stroke-width="0.6" />
<line x1="8.70" y1="106.34" x2="10.00" y2="106.34" stroke="#cfcfcf" stroke-width="0.6" />
<line x1="8.70" y1="102.86" x2="10.00" y2="102.86" stroke="#cfcfcf" stroke-width="0.6" />
<line x1="8.70" y1="99.37" x2="10.00" y2="99.37" stroke="#cfcfcf" stroke-width="0.6" />
<line x1="8.70" y1="95.88" x2="10.00" y2="95.88" stroke="#cfcfcf" stroke-width="0.6" />
<line x1="8.70" y1="92.39" x2="10.00" y2="92.39" stroke="#cfcfcf" stroke-width="0.6" />
<line x1="8.70" y1="88.91" x2="10.00" y2="88.91" stroke="#cfcfcf" stroke-width="0.6" />
<line x1="8.70" y1="85.42" x2="10.00" y2="85.42" stroke="#cfcfcf" stroke-width="0.6" />
<line x1="8.70" y1="81.93" x2="10.00" y2="81.93" stroke="#cfcfcf" stroke-width="0.6" />
<line x1="8.70" y1="78.45" x2="10.00" y2="78.45" stroke="#cfcfcf" stroke-width="0.6" />
<line x1="9.80" y1="76.60" x2="9.80" y2="558.00" stroke="#8a8a8a" stroke-width="0.6" />
<clipPath id="cv"><rect x="10" y="76.2" width="442.3" height="481.8"/></clipPath>
<g clip-path="url(#cv)"><g transform="translate(193.5,144.7) rotate(22.5)">
<rect x="0" y="0" width="281.2" height="397.8" fill="#ffffff"/>
</g></g>
<clipPath id="pp"><polygon points="193.50,144.70 453.29,252.31 301.06,619.83 41.27,512.22"/></clipPath>
<g clip-path="url(#cv)"><g clip-path="url(#pp)" fill="none" stroke-linecap="round" stroke-linejoin="round">
<path d="M188.3,264.0 C188.2,262.3 187.2,257.7 187.8,254.0 C188.5,250.2 189.8,245.4 192.3,241.4 C194.9,237.4 198.6,233.0 202.9,230.1 C207.2,227.2 212.5,225.0 217.9,223.8 C223.4,222.7 230.1,222.0 235.5,223.1 C240.9,224.1 246.7,226.9 250.6,230.1 C254.4,233.4 256.9,238.1 258.6,242.7 C260.3,247.3 260.6,252.7 260.6,257.7 C260.6,262.7 259.6,269.8 258.6,272.8 C257.5,275.7 255.7,277.4 254.3,275.3 C253.0,273.2 251.8,264.8 250.6,260.2 C249.3,255.6 248.5,251.0 246.8,247.7 C245.1,244.3 243.2,241.4 240.5,240.2 C237.8,238.9 233.0,241.4 230.5,240.2 C228.0,238.9 228.4,233.0 225.5,232.6 C222.5,232.2 216.7,235.1 212.9,237.6 C209.2,240.2 205.8,243.9 202.9,247.7 C200.0,251.4 197.2,255.6 195.4,260.2 C193.5,264.8 192.8,273.2 191.6,275.3 C190.4,277.4 188.9,273.2 188.3,272.8 Z" stroke="none" stroke-width="0" fill="#d4d4d4"/>
<path d="M188.3,275.3 C188.2,271.7 187.2,259.6 187.8,254.0 C188.5,248.3 189.8,245.4 192.3,241.4 C194.9,237.4 198.6,233.0 202.9,230.1 C207.2,227.2 212.5,225.0 217.9,223.8 C223.4,222.7 230.1,222.0 235.5,223.1 C240.9,224.1 246.7,226.9 250.6,230.1 C254.4,233.4 256.9,238.1 258.6,242.7 C260.3,247.3 260.9,252.3 260.6,257.7 C260.3,263.2 257.5,272.4 256.8,275.3" stroke="#b4b4b4" stroke-width="0.7" fill="none"/>
<path d="M225.5,231.4 C223.0,233.2 214.6,238.3 210.4,242.7 C206.2,247.1 203.1,252.3 200.4,257.7 C197.7,263.2 195.8,269.0 194.1,275.3 C192.4,281.6 191.0,292.0 190.3,295.4" stroke="#8c8c8c" stroke-width="0.7" fill="none"/>
<path d="M230.5,232.6 C228.4,234.7 221.7,240.2 217.9,245.2 C214.2,250.2 210.8,256.9 207.9,262.7 C205.0,268.6 201.6,277.4 200.4,280.3" stroke="#b4b4b4" stroke-width="0.7" fill="none"/>
<path d="M234.3,235.1 C232.4,237.0 226.3,241.8 223.0,246.4 C219.6,251.0 216.7,256.7 214.2,262.7 C211.7,268.8 209.0,279.5 207.9,282.8" stroke="#b4b4b4" stroke-width="0.6" fill="none"/>
<path d="M240.5,241.4 C241.2,244.1 243.5,252.1 244.3,257.7 C245.1,263.4 245.8,270.7 245.5,275.3 C245.3,279.9 243.5,283.6 243.0,285.3" stroke="#8c8c8c" stroke-width="0.7" fill="none"/>
<path d="M229.2,241.4 C230.5,241.2 234.3,239.7 236.8,240.2 C239.3,240.6 243.0,243.3 244.3,243.9" stroke="#8c8c8c" stroke-width="0.7" fill="none"/>
<path d="M194.1,275.3 C192.6,279.5 188.0,292.0 185.3,300.4 C182.6,308.7 179.5,320.0 177.8,325.5 C176.1,330.9 175.7,331.7 175.3,333.0" stroke="#b4b4b4" stroke-width="0.7" fill="none"/>
<path d="M200.4,280.3 C198.7,284.5 193.5,297.0 190.3,305.4 C187.2,313.8 183.0,326.3 181.6,330.5" stroke="#b4b4b4" stroke-width="0.7" fill="none"/>
<path d="M197.9,275.3 C196.2,279.5 190.8,292.4 187.8,300.4 C184.8,308.3 181.1,319.2 179.8,323.0" stroke="#b4b4b4" stroke-width="0.6" fill="none"/>
<path d="M203.4,285.3 C201.7,289.5 196.4,302.5 193.4,310.4 C190.3,318.4 186.7,329.2 185.3,333.0" stroke="#d2d2d2" stroke-width="0.6" fill="none"/>
<path d="M260.6,230.1 C262.3,232.2 268.5,237.2 270.6,242.7 C272.7,248.1 273.6,257.3 273.1,262.7 C272.7,268.2 269.0,273.2 268.1,275.3" stroke="#d2d2d2" stroke-width="0.6" fill="none"/>
<path d="M230.5,220.1 C233.8,220.3 244.7,218.8 250.6,221.3 C256.4,223.8 262.1,229.9 265.6,235.1 C269.2,240.4 270.8,249.8 271.9,252.7" stroke="#d2d2d2" stroke-width="0.6" fill="none"/>
<path d="M197.9,275.3 C198.1,277.4 197.9,283.6 199.1,287.8 C200.4,292.0 202.3,296.8 205.4,300.4 C208.5,303.9 215.0,307.6 217.9,309.2 C220.9,310.7 220.0,311.1 223.0,309.7 C225.9,308.2 231.7,304.0 235.5,300.4 C239.3,296.7 243.4,291.6 245.5,287.8 C247.7,284.1 248.1,279.5 248.6,277.8" stroke="#8c8c8c" stroke-width="0.8" fill="none"/>
<path d="M248.6,275.3 C249.3,274.9 252.2,271.9 253.1,272.8 C253.9,273.6 254.2,278.0 253.6,280.3 C252.9,282.6 250.0,285.5 249.3,286.6" stroke="#b4b4b4" stroke-width="0.7" fill="none"/>
<path d="M196.6,276.5 C197.2,276.1 198.9,274.5 200.4,274.0 C201.8,273.5 203.7,273.3 205.4,273.5 C207.1,273.7 209.6,275.0 210.4,275.3" stroke="#555" stroke-width="1" fill="none"/>
<path d="M225.5,274.8 C226.3,274.4 228.6,273.1 230.5,272.8 C232.4,272.4 235.0,272.4 236.8,272.8 C238.5,273.1 240.3,274.4 241.0,274.8" stroke="#555" stroke-width="1" fill="none"/>
<path d="M201.6,280.3 L200.4,284.3" stroke="#b4b4b4" stroke-width="0.6" fill="none"/>
<path d="M204.4,280.8 L203.1,284.8" stroke="#b4b4b4" stroke-width="0.6" fill="none"/>
<path d="M236.8,279.8 L238.0,283.8" stroke="#b4b4b4" stroke-width="0.6" fill="none"/>
<path d="M239.5,279.3 L240.8,283.1" stroke="#b4b4b4" stroke-width="0.6" fill="none"/>
<path d="M212.9,293.4 C215.0,293.2 223.6,291.2 225.5,292.3 C227.4,293.5 225.1,298.4 224.2,300.4 C223.3,302.3 221.4,304.1 219.9,304.1 C218.5,304.1 216.2,301.0 215.4,300.4 Z" stroke="#777" stroke-width="0.8" fill="none"/>
<path d="M210.4,310.4 L205.4,317.9" stroke="#b4b4b4" stroke-width="0.7" fill="none"/>
<path d="M240.5,305.4 L244.3,315.4" stroke="#b4b4b4" stroke-width="0.7" fill="none"/>
<path d="M135.1,289.6 C135.4,288.4 136.1,284.2 136.9,282.4 C137.6,280.6 138.7,278.8 139.6,278.8 C140.4,278.8 141.2,279.1 141.9,282.4 C142.6,285.7 143.7,295.8 144.1,298.5" stroke="#8c8c8c" stroke-width="0.8" fill="none"/>
<path d="M145.8,298.5 C146.3,296.6 147.7,290.3 148.5,286.9 C149.4,283.4 150.0,279.5 150.9,277.9 C151.8,276.4 153.2,277.0 153.9,277.6 C154.6,278.2 155.0,279.1 154.8,281.5 C154.6,284.0 153.4,288.8 152.7,292.3 C151.9,295.7 150.7,300.5 150.3,302.1" stroke="#8c8c8c" stroke-width="0.8" fill="none"/>
<path d="M151.2,308.4 C152.3,307.8 155.4,306.1 157.5,304.8 C159.6,303.5 162.3,300.6 163.8,300.3 C165.3,300.0 166.5,301.7 166.5,303.0 C166.5,304.4 165.1,306.6 163.8,308.4 C162.4,310.2 159.7,312.0 158.4,313.8 C157.0,315.6 156.1,318.2 155.7,319.1" stroke="#8c8c8c" stroke-width="0.8" fill="none"/>
<path d="M131.5,303.0 C132.1,302.6 133.7,300.2 135.1,300.3 C136.4,300.5 139.0,302.0 139.6,303.9 C140.2,305.8 139.6,309.9 138.7,312.0 C137.8,314.1 135.7,316.2 134.2,316.5 C132.7,316.8 130.6,315.1 129.7,313.8 C128.8,312.4 129.0,309.3 128.8,308.4 Z" stroke="#8c8c8c" stroke-width="0.8" fill="none"/>
<path d="M132.4,308.4 C132.8,307.9 134.2,305.7 135.1,305.7 C136.0,305.7 137.5,307.2 137.8,308.4 C138.1,309.6 137.6,312.0 136.9,312.9 C136.1,313.8 133.9,313.6 133.3,313.8" stroke="#8c8c8c" stroke-width="0.7" fill="none"/>
<path d="M135.1,289.6 C134.7,290.6 133.5,293.6 132.9,295.8 C132.3,298.1 131.7,301.8 131.5,303.0" stroke="#8c8c8c" stroke-width="0.7" fill="none"/>
<path d="M128.8,317.3 C129.0,318.8 130.2,323.0 129.7,326.3 C129.3,329.6 127.6,333.2 126.1,337.1 C124.6,340.9 122.2,346.0 120.8,349.6 C119.3,353.2 117.8,357.1 117.2,358.6" stroke="#8c8c8c" stroke-width="0.8" fill="none"/>
<path d="M155.7,319.1 C154.8,320.6 151.8,325.1 150.3,328.1 C148.8,331.1 148.1,333.5 146.7,337.1 C145.4,340.6 143.5,346.0 142.3,349.6 C141.1,353.2 140.0,357.1 139.6,358.6" stroke="#8c8c8c" stroke-width="0.8" fill="none"/>
<path d="M156.6,295.8 C158.7,294.3 166.6,289.0 169.1,286.9 C171.7,284.8 171.4,283.9 171.8,283.3" stroke="#d2d2d2" stroke-width="0.6" fill="none"/>
<path d="M142.3,333.5 C144.3,333.2 150.3,331.4 154.8,331.7 C159.3,332.0 166.8,334.7 169.1,335.3" stroke="#d2d2d2" stroke-width="0.6" fill="none"/>
<path d="M140.5,338.9 C143.2,338.6 151.5,336.8 156.6,337.1 C161.7,337.4 168.5,340.0 170.9,340.6" stroke="#d2d2d2" stroke-width="0.6" fill="none"/>
<path d="M314.2,317.6 C314.6,315.6 315.7,309.0 316.8,305.4 C317.9,301.7 318.6,299.3 320.7,295.5 C322.8,291.7 325.5,286.4 329.6,282.7 C333.7,279.0 339.4,275.2 345.4,273.4 C351.3,271.7 359.5,271.3 365.1,272.2 C370.7,273.1 375.3,275.7 378.9,278.7 C382.5,281.8 384.8,285.5 386.8,290.6 C388.8,295.7 390.2,302.9 390.7,309.3 C391.2,315.7 390.7,323.6 389.7,329.0 C388.8,334.5 387.3,338.7 384.8,341.9 C382.3,345.0 378.2,346.0 375.0,347.8 C371.7,349.5 368.2,350.3 365.1,352.3 C362.0,354.3 358.6,357.2 356.2,359.6 C353.8,362.0 351.8,365.4 350.9,366.5" stroke="#b6e3f0" stroke-width="5.6" fill="none" opacity="0.95"/>
<path d="M317.8,312.9 C318.3,310.8 319.7,304.3 321.3,300.4 C322.9,296.6 326.6,291.4 327.6,289.6" stroke="#c0e8f3" stroke-width="5.5" fill="none" opacity="0.8"/>
<path d="M349.3,275.8 C351.9,275.9 360.5,275.5 365.1,276.8 C369.7,278.1 375.0,282.5 376.9,283.7" stroke="#c4eaf4" stroke-width="4" fill="none" opacity="0.7"/>
<path d="M317.7,287.7 C319.8,285.2 325.2,276.4 330.3,272.6 C335.3,268.9 341.6,266.3 347.8,265.1 C354.1,263.8 362.0,263.8 367.9,265.1 C373.8,266.3 378.8,268.9 383.0,272.6 C387.1,276.4 390.9,282.2 393.0,287.7 C395.1,293.1 395.1,302.3 395.5,305.2" stroke="#d2d2d2" stroke-width="0.7" fill="none"/>
<path d="M320.2,285.2 C322.7,282.7 329.4,273.2 335.3,270.1 C341.1,267.0 352.0,267.0 355.4,266.3" stroke="#d2d2d2" stroke-width="0.6" fill="none"/>
<path d="M367.9,286.4 C365.8,287.9 360.0,292.1 355.4,295.2 C350.8,298.3 344.9,302.5 340.3,305.2 C335.7,308.0 329.8,310.5 327.8,311.5" stroke="#8c8c8c" stroke-width="0.7" fill="none"/>
<path d="M370.4,286.4 C371.3,289.1 374.2,296.7 375.4,302.7 C376.7,308.8 378.2,316.5 377.9,322.8 C377.7,329.1 374.8,337.4 374.2,340.4" stroke="#8c8c8c" stroke-width="0.7" fill="none"/>
<path d="M366.6,285.2 C367.5,285.1 369.8,283.8 371.7,284.7 C373.6,285.5 376.9,289.3 377.9,290.2" stroke="#8c8c8c" stroke-width="0.7" fill="none"/>
<path d="M320.2,296.5 C322.7,297.5 331.5,300.9 335.3,302.7 C339.0,304.6 341.6,306.9 342.8,307.8" stroke="#8c8c8c" stroke-width="0.7" fill="none"/>
<path d="M371.7,287.7 C371.0,290.6 369.8,300.2 367.9,305.2 C366.0,310.3 361.6,315.7 360.4,317.8" stroke="#b4b4b4" stroke-width="0.7" fill="none"/>
<path d="M354.1,312.8 C356.8,313.6 365.6,315.9 370.4,317.8 C375.2,319.7 380.9,323.0 383.0,324.1" stroke="#8c8c8c" stroke-width="0.7" fill="none"/>
<path d="M380.5,290.2 C381.1,293.5 384.2,303.6 384.2,310.3 C384.2,317.0 381.1,327.0 380.5,330.3" stroke="#b4b4b4" stroke-width="0.6" fill="none"/>
<path d="M317.7,306.5 L339.0,314.0" stroke="#3a3a3a" stroke-width="1.3" fill="none"/>
<path d="M339.0,314.0 L335.3,324.1" stroke="#3a3a3a" stroke-width="1.3" fill="none"/>
<path d="M335.3,324.1 L314.7,316.5" stroke="#3a3a3a" stroke-width="1.3" fill="none"/>
<path d="M314.7,316.5 L317.7,306.5" stroke="#3a3a3a" stroke-width="1.3" fill="none"/>
<path d="M344.1,319.8 L365.4,328.3" stroke="#3a3a3a" stroke-width="1.3" fill="none"/>
<path d="M365.4,328.3 L361.6,338.4" stroke="#3a3a3a" stroke-width="1.3" fill="none"/>
<path d="M361.6,338.4 L340.8,330.3" stroke="#3a3a3a" stroke-width="1.3" fill="none"/>
<path d="M340.8,330.3 L344.1,319.8" stroke="#3a3a3a" stroke-width="1.3" fill="none"/>
<path d="M338.3,316.5 L344.1,320.8" stroke="#666" stroke-width="0.8" fill="none"/>
<path d="M320.2,312.3 C321.0,312.8 323.3,314.8 324.7,315.3 C326.2,315.8 328.3,315.3 329.0,315.3" stroke="#666" stroke-width="1.2" fill="none"/>
<path d="M348.3,325.3 C349.3,325.9 352.2,328.2 354.1,329.1 C356.0,329.9 358.9,330.1 359.9,330.3" stroke="#666" stroke-width="1.2" fill="none"/>
<path d="M365.4,330.3 L372.9,335.4" stroke="#777" stroke-width="0.7" fill="none"/>
<path d="M315.7,317.8 C316.3,320.7 317.4,330.3 319.0,335.4 C320.6,340.4 322.9,345.1 325.2,347.9 C327.6,350.7 329.9,352.0 333.3,352.2 C336.6,352.4 340.8,351.1 345.3,349.2 C349.8,347.2 356.2,342.7 360.4,340.4 C364.6,338.1 368.7,336.2 370.4,335.4" stroke="#8c8c8c" stroke-width="0.8" fill="none"/>
<path d="M329.0,344.9 C330.1,344.6 333.3,343.3 335.3,343.4 C337.2,343.5 340.4,344.3 340.8,345.4 C341.2,346.5 339.3,349.4 337.8,349.9 C336.2,350.4 332.6,348.7 331.5,348.4 Z" stroke="#777" stroke-width="0.8" fill="none"/>
<path d="M374.2,332.8 C374.8,333.3 377.5,333.7 377.9,335.4 C378.4,337.0 377.7,341.2 376.7,342.9 C375.6,344.6 372.5,345.0 371.7,345.4" stroke="#8c8c8c" stroke-width="0.7" fill="none"/>
<path d="M367.9,340.4 C367.7,342.0 366.6,347.7 366.6,350.4 C366.7,353.1 368.1,355.6 368.4,356.7" stroke="#777" stroke-width="0.7" fill="none"/>
<path d="M280.1,320.2 C279.2,316.0 275.3,300.2 274.6,295.1 C273.8,290.0 274.9,290.6 275.6,289.6 C276.3,288.5 277.9,288.1 278.8,288.8 C279.8,289.5 280.1,289.2 281.3,293.8 C282.6,298.4 285.5,312.6 286.3,316.4" stroke="#7e7e7e" stroke-width="0.9" fill="none"/>
<path d="M286.3,316.4 C287.0,311.8 289.1,293.9 290.1,288.8 C291.2,283.7 291.8,285.5 292.6,285.5 C293.5,285.5 294.8,284.1 295.1,288.8 C295.5,293.5 294.7,309.7 294.6,313.9" stroke="#7e7e7e" stroke-width="0.9" fill="none"/>
<path d="M288.9,318.9 C289.5,318.3 290.9,315.8 292.6,315.1 C294.3,314.5 297.4,314.3 298.9,315.1 C300.4,316.0 301.6,318.3 301.4,320.2 C301.2,322.0 299.1,325.0 297.6,326.4 C296.2,327.9 294.1,329.1 292.6,328.9 C291.2,328.7 289.5,325.8 288.9,325.2 Z" stroke="#7e7e7e" stroke-width="0.9" fill="none"/>
<path d="M295.1,323.9 C296.0,323.5 298.7,321.0 300.1,321.4 C301.6,321.8 303.7,324.8 303.9,326.4 C304.1,328.1 302.6,330.6 301.4,331.4 C300.1,332.3 297.2,331.4 296.4,331.4" stroke="#7e7e7e" stroke-width="0.9" fill="none"/>
<path d="M280.1,320.2 C278.8,320.8 275.1,323.6 272.6,323.9 C270.0,324.3 266.5,321.7 265.0,322.2 C263.6,322.6 262.5,324.7 263.8,326.4 C265.0,328.2 269.4,330.0 272.6,332.7 C275.7,335.4 280.9,341.1 282.6,342.7" stroke="#7e7e7e" stroke-width="0.9" fill="none"/>
<path d="M282.7,342.4 C282.9,342.0 284.6,337.5 283.9,339.7 C283.2,342.0 280.6,350.5 278.5,355.8 C276.4,361.2 273.2,367.5 271.4,372.0 C269.6,376.5 268.5,378.8 267.8,382.7 C267.0,386.6 266.6,391.7 266.9,395.3 C267.2,398.9 267.9,402.4 269.6,404.2 C271.2,406.0 274.3,406.9 276.7,406.0 C279.1,405.1 282.7,400.0 283.9,398.9" stroke="#7e7e7e" stroke-width="0.9" fill="none"/>
<path d="M306.7,330.8 C306.5,331.6 306.4,332.8 305.4,336.1 C304.5,339.4 302.9,344.8 300.9,350.5 C299.0,356.1 295.9,363.9 293.8,370.2 C291.7,376.5 290.0,383.3 288.4,388.1 C286.7,392.9 284.7,397.1 283.9,398.9" stroke="#7e7e7e" stroke-width="0.9" fill="none"/>
<path d="M260.0,315.1 C259.6,317.2 256.7,323.1 257.5,327.7 C258.3,332.3 262.1,338.5 265.0,342.7 C268.0,346.9 273.4,351.1 275.1,352.8" stroke="#d2d2d2" stroke-width="0.6" fill="none"/>
<path d="M255.0,345.2 C256.7,346.9 262.5,350.3 265.0,355.3 C267.5,360.3 270.0,367.8 270.0,375.3 C270.0,382.9 265.9,396.2 265.0,400.4" stroke="#d2d2d2" stroke-width="0.6" fill="none"/>
<path d="M310.2,357.9 L325.2,347.9" stroke="#b4b4b4" stroke-width="0.7" fill="none"/>
<path d="M345.3,350.4 C347.0,351.7 352.0,355.4 355.4,357.9 C358.7,360.5 363.7,364.2 365.4,365.5" stroke="#b4b4b4" stroke-width="0.7" fill="none"/>
<path d="M302.7,363.0 C305.6,364.2 314.8,370.1 320.2,370.5 C325.7,370.9 332.8,366.3 335.3,365.5" stroke="#d2d2d2" stroke-width="0.7" fill="none"/>
<path d="M204.9,315.6 C207.7,319.4 213.3,338.1 221.7,338.4 C230.2,338.6 249.9,320.6 255.6,317.1" stroke="#8c8c8c" stroke-width="0.8" fill="none"/>
<path d="M202.9,320.1 L217.9,341.4" stroke="#d2d2d2" stroke-width="0.6" fill="none"/>
<path d="M175.3,315.1 C172.8,317.6 165.2,323.4 160.2,330.1 C155.2,336.8 148.9,347.7 145.2,355.2 C141.4,362.7 138.9,371.9 137.6,375.3" stroke="#d2d2d2" stroke-width="0.7" fill="none"/>
<path d="M180.3,332.6 C179.5,337.6 176.5,353.1 175.3,362.7 C174.0,372.4 173.2,385.7 172.8,390.3" stroke="#b4b4b4" stroke-width="0.7" fill="none"/>
<path d="M182.8,327.6 C182.0,333.0 179.0,350.2 177.8,360.2 C176.5,370.3 175.7,383.2 175.3,387.8" stroke="#d2d2d2" stroke-width="0.7" fill="none"/>
<path d="M131.4,310.0 C130.1,313.8 126.6,324.7 123.8,332.6 C121.1,340.6 116.7,351.0 115.1,357.7 C113.4,364.4 113.0,369.6 113.8,372.8 C114.6,375.9 117.4,377.0 120.1,376.5 C122.8,376.1 126.8,374.7 130.1,370.3 C133.5,365.9 136.8,357.7 140.2,350.2 C143.5,342.7 148.5,329.3 150.2,325.1" stroke="#8c8c8c" stroke-width="0.7" fill="none"/>
<path d="M260.6,325.1 C261.4,329.3 265.6,341.8 265.6,350.2 C265.6,358.6 262.3,368.6 260.6,375.3 C258.9,382.0 256.4,387.8 255.6,390.3" stroke="#d2d2d2" stroke-width="0.7" fill="none"/>
<path d="M182.8,391.6 C186.6,392.2 197.4,394.5 205.4,395.4 C213.3,396.2 223.4,397.4 230.5,396.6 C237.6,395.8 245.1,391.4 248.1,390.3" stroke="#b4b4b4" stroke-width="0.7" fill="none"/>
<path d="M182.8,391.6 C183.6,395.1 185.7,408.5 187.8,412.9 C189.9,417.3 190.3,416.7 195.4,417.9 C200.4,419.2 210.4,420.5 217.9,420.5 C225.5,420.5 235.1,419.2 240.5,417.9 C246.0,416.7 248.9,413.8 250.6,412.9" stroke="#b4b4b4" stroke-width="0.7" fill="none"/>
<path d="M263.1,323.8 C265.2,325.3 271.9,329.5 275.7,332.6 C279.4,335.8 283.0,343.5 285.7,342.7 C288.4,341.8 290.9,330.1 292.0,327.6" stroke="#8c8c8c" stroke-width="0.8" fill="none"/>
<path d="M285.7,343.9 C284.9,349.1 282.8,365.9 280.7,375.3 C278.6,384.7 275.2,395.6 273.1,400.4 C271.1,405.2 267.7,403.1 268.1,404.1 C268.5,405.2 272.7,408.1 275.7,406.6 C278.6,405.2 282.4,402.3 285.7,395.4 C289.0,388.5 294.1,370.3 295.7,365.2" stroke="#8c8c8c" stroke-width="0.8" fill="none"/>
<path d="M165.2,415.4 C162.7,418.8 153.5,431.4 150.2,435.5 C146.8,439.6 146.0,439.3 145.2,440.0" stroke="#d2d2d2" stroke-width="0.7" fill="none"/>
<path d="M175.3,410.4 C172.8,413.8 163.6,425.6 160.2,430.5 C156.9,435.4 156.0,438.4 155.2,440.0" stroke="#d2d2d2" stroke-width="0.7" fill="none"/>
<path d="M255.6,392.8 C254.7,397.4 251.8,412.6 250.6,420.5 C249.3,428.3 248.5,436.8 248.1,440.0" stroke="#d2d2d2" stroke-width="0.7" fill="none"/>
<path d="M260.6,395.4 C260.0,399.1 257.9,410.5 256.8,417.9 C255.8,425.4 254.7,436.3 254.3,440.0" stroke="#d2d2d2" stroke-width="0.7" fill="none"/>
<path d="M150.2,332.6 C152.7,333.5 164.0,333.5 165.2,337.6 C166.5,341.8 161.5,353.1 157.7,357.7 C154.0,362.3 145.2,364.0 142.7,365.2" stroke="#d2d2d2" stroke-width="0.6" fill="none"/>
<path d="M132.6,372.8 C135.5,373.2 143.9,375.7 150.2,375.3 C156.5,374.9 166.9,371.1 170.3,370.3" stroke="#d2d2d2" stroke-width="0.6" fill="none"/>
<path d="M305.2,362.6 C307.3,361.3 314.4,354.2 317.7,355.1 C321.1,355.9 322.3,363.0 325.2,367.6 C328.2,372.2 332.4,381.0 335.3,382.7 C338.2,384.3 342.8,380.2 342.8,377.6 C342.8,375.1 336.5,369.3 335.3,367.6" stroke="#b4b4b4" stroke-width="0.7" fill="none"/>
<path d="M335.3,382.7 C336.1,385.2 340.3,391.0 340.3,397.7 C340.3,404.4 336.1,418.6 335.3,422.8" stroke="#d2d2d2" stroke-width="0.7" fill="none"/>
<path d="M350.3,365.1 C352.8,365.5 361.2,364.7 365.4,367.6 C369.6,370.5 372.9,377.6 375.4,382.7 C377.9,387.7 379.6,395.2 380.5,397.7" stroke="#b4b4b4" stroke-width="0.7" fill="none"/>
<path d="M355.4,372.6 L342.8,394.0" stroke="#b4b4b4" stroke-width="0.7" fill="none"/>
<path d="M360.4,362.6 C363.3,365.1 374.2,373.0 377.9,377.6 C381.7,382.2 383.0,383.9 383.0,390.2 C383.0,396.5 380.0,406.9 377.9,415.3 C375.9,423.6 371.7,436.2 370.4,440.4" stroke="#d2d2d2" stroke-width="0.7" fill="none"/>
<path d="M297.6,420.3 C299.7,419.5 305.6,414.4 310.2,415.3 C314.8,416.1 319.8,422.4 325.2,425.3 C330.7,428.2 337.0,431.2 342.8,432.8 C348.7,434.5 357.4,434.9 360.4,435.4" stroke="#b4b4b4" stroke-width="0.7" fill="none"/>
<path d="M305.2,405.2 C306.0,407.8 307.7,414.4 310.2,420.3 C312.7,426.2 317.7,434.1 320.2,440.4 C322.7,446.6 324.4,455.0 325.2,457.9" stroke="#b4b4b4" stroke-width="0.7" fill="none"/>
<path d="M317.7,435.4 C320.6,434.9 329.0,433.1 335.3,432.8 C341.6,432.6 349.5,432.8 355.4,434.1 C361.2,435.4 367.9,439.3 370.4,440.4" stroke="#b4b4b4" stroke-width="0.7" fill="none"/>
<path d="M302.7,465.5 C306.0,464.6 316.0,461.7 322.7,460.5 C329.4,459.2 336.5,457.9 342.8,457.9 C349.1,457.9 357.4,460.0 360.4,460.5" stroke="#b4b4b4" stroke-width="0.7" fill="none"/>
<path d="M305.2,470.5 C308.5,469.7 318.1,468.2 325.2,465.5 C332.4,462.8 344.1,456.1 347.8,454.2" stroke="#d2d2d2" stroke-width="0.7" fill="none"/>
<path d="M275.1,415.3 C276.3,419.5 279.7,432.0 282.6,440.4 C285.5,448.7 290.1,458.9 292.6,465.5 C295.1,472.1 296.8,477.6 297.6,480.0" stroke="#d2d2d2" stroke-width="0.7" fill="none"/>
<path d="M380.5,397.7 C378.8,401.9 373.8,414.9 370.4,422.8 C367.1,430.8 362.9,439.5 360.4,445.4 C357.9,451.3 356.2,455.9 355.4,457.9" stroke="#d2d2d2" stroke-width="0.7" fill="none"/>
<path d="M297.6,422.8 C298.5,421.6 300.6,415.3 302.7,415.3 C304.8,415.3 309.8,420.7 310.2,422.8 C310.6,424.9 306.0,427.0 305.2,427.8 Z" stroke="#b4b4b4" stroke-width="0.7" fill="none"/>
<path d="M157.5,429.4 C160.0,432.8 167.5,444.1 172.5,450.0 C177.5,455.9 180.0,462.5 187.5,465.0 C195.0,467.5 207.5,466.2 217.5,465.0 C227.5,463.7 240.6,459.4 247.5,457.5 C254.4,455.6 256.9,454.4 258.7,453.7" stroke="#b4b4b4" stroke-width="0.7" fill="none"/>
<path d="M157.5,431.2 C150.6,438.7 130.6,461.2 116.2,476.2 C101.9,491.2 78.7,513.7 71.2,521.2" stroke="#d2d2d2" stroke-width="0.7" fill="none"/>
<path d="M163.1,436.9 C156.6,444.1 137.2,465.3 123.7,480.0 C110.3,494.7 89.4,517.5 82.5,525.0" stroke="#d2d2d2" stroke-width="0.6" fill="none"/>
<path d="M183.7,465.0 C175.6,472.5 147.5,498.1 135.0,510.0 C122.5,521.9 113.1,531.9 108.7,536.2" stroke="#d2d2d2" stroke-width="0.7" fill="none"/>
<path d="M191.2,468.7 C190.0,476.2 186.9,498.9 183.7,513.7 C180.6,528.6 174.4,550.6 172.5,558.0" stroke="#d2d2d2" stroke-width="0.7" fill="none"/>
<path d="M247.5,461.2 C244.4,468.7 235.0,490.1 228.7,506.2 C222.5,522.4 213.1,549.4 210.0,558.0" stroke="#d2d2d2" stroke-width="0.7" fill="none"/>
<path d="M258.7,420.0 C258.1,425.6 258.1,438.1 255.0,453.7 C251.9,469.4 245.0,496.4 240.0,513.7 C235.0,531.1 227.5,550.6 225.0,558.0" stroke="#d2d2d2" stroke-width="0.7" fill="none"/>
<path d="M273.7,465.0 C272.2,468.7 263.7,481.2 264.4,487.5 C265.0,493.7 270.3,498.1 277.5,502.5 C284.7,506.9 300.0,518.1 307.5,513.7 C315.0,509.4 320.0,482.5 322.5,476.2" stroke="#b4b4b4" stroke-width="0.7" fill="none"/>
<path d="M281.2,465.0 C279.4,470.0 274.4,483.7 270.0,495.0 C265.6,506.2 259.4,522.0 255.0,532.5 C250.6,543.0 245.6,553.7 243.7,558.0" stroke="#d2d2d2" stroke-width="0.7" fill="none"/>
<path d="M307.5,513.7 C306.2,516.9 303.7,525.1 300.0,532.5 C296.2,539.9 287.5,553.7 285.0,558.0" stroke="#d2d2d2" stroke-width="0.7" fill="none"/>
<path d="M322.5,476.2 C321.9,482.5 321.2,502.5 318.7,513.7 C316.2,525.0 309.4,538.7 307.5,543.7" stroke="#d2d2d2" stroke-width="0.7" fill="none"/>
<path d="M285.0,442.5 C288.7,445.0 298.7,455.6 307.5,457.5 C316.2,459.4 328.7,455.0 337.5,453.7 C346.2,452.5 356.2,450.6 360.0,450.0" stroke="#b4b4b4" stroke-width="0.7" fill="none"/>
<path d="M303.7,468.7 C308.1,467.5 321.2,465.6 330.0,461.2 C338.7,456.9 351.9,445.6 356.2,442.5" stroke="#b4b4b4" stroke-width="0.7" fill="none"/>
<path d="M318.7,420.0 C319.4,423.7 323.1,435.0 322.5,442.5 C321.9,450.0 316.2,461.2 315.0,465.0" stroke="#d2d2d2" stroke-width="0.7" fill="none"/>
</g></g>
<line x1="456.00" y1="36.20" x2="456.00" y2="43.40" stroke="#6c6c6c" stroke-width="1.1" />
<line x1="458.40" y1="36.20" x2="458.40" y2="43.40" stroke="#6c6c6c" stroke-width="1.1" />
<path d="M474.6,37.4 l2.4,2.4 l-2.4,2.4 M477.8,37.4 l2.4,2.4 l-2.4,2.4" fill="none" stroke="#7a7a7a" stroke-width="0.9" />
<line x1="485.00" y1="36.20" x2="485.00" y2="43.40" stroke="#6c6c6c" stroke-width="1.1" />
<line x1="487.40" y1="36.20" x2="487.40" y2="43.40" stroke="#6c6c6c" stroke-width="1.1" />
<path d="M602.5,37.4 l2.4,2.4 l-2.4,2.4" fill="none" stroke="#7a7a7a" stroke-width="0.9" />
<path d="M621,37.4 l2.4,2.4 l-2.4,2.4 M624.2,37.4 l2.4,2.4 l-2.4,2.4" fill="none" stroke="#7a7a7a" stroke-width="0.9" />
<line x1="631.00" y1="36.20" x2="631.00" y2="43.40" stroke="#6c6c6c" stroke-width="1.1" />
<line x1="633.40" y1="36.20" x2="633.40" y2="43.40" stroke="#6c6c6c" stroke-width="1.1" />
<path d="M746,37.4 l2.4,2.4 l-2.4,2.4" fill="none" stroke="#7a7a7a" stroke-width="0.9" />
<path d="M764,37.4 l2.4,2.4 l-2.4,2.4 M767.2,37.4 l2.4,2.4 l-2.4,2.4" fill="none" stroke="#7a7a7a" stroke-width="0.9" />
<path d="M778,37.4 l-2.4,2.4 l2.4,2.4" fill="none" stroke="#7a7a7a" stroke-width="0.9" />
<path d="M793,37.4 l2.4,2.4 l-2.4,2.4 M796.2,37.4 l2.4,2.4 l-2.4,2.4" fill="none" stroke="#7a7a7a" stroke-width="0.9" />
<line x1="459.00" y1="51.70" x2="463.40" y2="51.70" stroke="#8a8a8a" stroke-width="0.8" />
<line x1="459.00" y1="53.50" x2="463.40" y2="53.50" stroke="#8a8a8a" stroke-width="0.8" />
<line x1="459.00" y1="55.30" x2="463.40" y2="55.30" stroke="#8a8a8a" stroke-width="0.8" />
<path d="M474,61.4 L474.6,59.6 L480.2,53 L481,53.8 L481,55.6 L475.8,61 Z" fill="#d0d0d0" stroke="none" stroke-width="1" />
<circle cx="464.00" cy="73.40" r="4.40" fill="none" stroke="#cfcfcf" stroke-width="1.1" />
<line x1="467.20" y1="76.80" x2="471.20" y2="81.00" stroke="#cfcfcf" stroke-width="1.3" />
<path d="M461.2,96.4 C460.2,94.6 459.4,93.6 460.2,93 C461,92.6 461.8,93.6 462.4,94.4 L462.2,90.6 C462.2,89.6 463.4,89.6 463.5,90.6 L463.8,93 L464,89.6 C464.1,88.6 465.3,88.6 465.4,89.6 L465.5,93 L466.2,90 C466.4,89 467.6,89.2 467.5,90.2 L467.2,93.6 L468.4,91.6 C468.9,90.8 470,91.3 469.6,92.2 C468.8,94.4 468.8,96.4 467.4,98.6 C466.4,99.8 463.6,99.8 462.6,98.6 Z" fill="#cfcfcf" stroke="none" stroke-width="1" />
<path d="M459.6,111.8 L463.8,109.8 L468,111.8 L468,116.4 L463.8,118.4 L459.6,116.4 Z M459.6,111.8 L463.8,113.8 L468,111.8 M463.8,113.8 V118.4" fill="none" stroke="#cfcfcf" stroke-width="0.9" />
<circle cx="463.80" cy="114.00" r="5.00" fill="none" stroke="#cfcfcf" stroke-width="0.8" />
<path d="M466.8,114.6 L466.8,121.8 L468.6,120.2 L470,123 L471.2,122.4 L469.8,119.6 L472,119.4 Z" fill="#cfcfcf" stroke="#464646" stroke-width="0.5" />
<path d="M465.4,128.6 V140.6 M459.4,134.6 H471.4" fill="none" stroke="#cfcfcf" stroke-width="1" />
<path d="M463.4,130.4 L465.4,128.2 L467.4,130.4 M463.4,138.8 L465.4,141 L467.4,138.8 M461.2,132.6 L459,134.6 L461.2,136.6 M469.6,132.6 L471.8,134.6 L469.6,136.6" fill="none" stroke="#cfcfcf" stroke-width="1" />
<path d="M463.2,158.4 C459.4,157.6 459.2,153.4 462.2,151.4 C465.6,149.2 470.8,150 471.2,153.4 C471.5,156.6 467.4,158.8 463.6,158.4 C461.4,158 461.6,155.8 463.2,156.2 C465,156.8 463.8,160 460.2,160.4" fill="none" stroke="#cfcfcf" stroke-width="1" />
<path d="M459.6,181 L460.4,178 L466.4,172 L468.6,174.2 L462.6,180.2 Z" fill="none" stroke="#cfcfcf" stroke-width="0.9" />
<path d="M466,171 L469.6,174.6 M467.4,172.2 L469.8,169 C470.8,168 472.4,169.6 471.4,170.6 L468.6,173.4" fill="#cfcfcf" stroke="#cfcfcf" stroke-width="1.2" />
<line x1="459.40" y1="201.40" x2="465.40" y2="195.40" stroke="#cfcfcf" stroke-width="1.2" />
<path d="M467,194 L467,188.8 M467,194 L471.8,194 M467,194 L470.4,190.6 M467,194 L463.6,190.6 M467,194 L470.4,197.4 M467,194 L462.4,194 M467,194 L467,198.6" fill="none" stroke="#cfcfcf" stroke-width="0.8" />
<path d="M460.76,225.08 C461.30,221.84 462.74,219.14 465.44,217.34 L468.68,220.58 C466.88,223.28 464.18,224.72 460.76,225.08 Z M461.12,224.72 L464.90,220.94" fill="none" stroke="#5a2a5c" stroke-width="1.2" stroke-linejoin="round"/>
<path d="M465.44,217.34 L467.42,215.36 L470.66,218.60 L468.68,220.58 Z" fill="#5a2a5c" stroke="#5a2a5c" stroke-width="0.72" stroke-linejoin="round"/>
<path d="M459.8,246.6 L461.4,241.2 L467.4,233.8 L471.6,237.4 L465.6,244.8 Z" fill="#cfcfcf" stroke="none" stroke-width="1" />
<path d="M461.6,242 L464.8,244.6 L460.6,246" fill="#464646" stroke="none" stroke-width="1" />
<path d="M466.2,235.2 L470.4,238.8" fill="none" stroke="#464646" stroke-width="0.9" />
<path d="M459.6,267.2 L461.6,262 C462.6,259.6 464.6,257.6 467,257.4 L469.4,259.8 C469.2,262.2 467.2,264.4 464.8,265.4 Z" fill="#cfcfcf" stroke="none" stroke-width="1" />
<path d="M467,256.8 L468.8,254.6 L471.6,257.4 L469.6,259.4 Z" fill="#cfcfcf" stroke="none" stroke-width="1" />
<path d="M460.4,266.2 L464.4,262.2" fill="none" stroke="#464646" stroke-width="0.8" />
<path d="M461.8,283.2 C461.8,280.8 463.6,279.6 465.4,279.6 H468 C469.8,279.6 471.6,280.8 471.6,283.2 V285.2 H461.8 Z" fill="#cfcfcf" stroke="none" stroke-width="1" />
<rect x="465.40" y="276.20" width="2.60" height="3.00" fill="#cfcfcf" stroke="none" stroke-width="1" rx="0" />
<rect x="462.00" y="285.80" width="9.40" height="1.20" fill="#cfcfcf" stroke="none" stroke-width="1" rx="0" />
<circle cx="459.20" cy="274.60" r="0.50" fill="#cfcfcf" stroke="none" stroke-width="1" />
<circle cx="461.20" cy="275.60" r="0.50" fill="#cfcfcf" stroke="none" stroke-width="1" />
<circle cx="463.20" cy="276.60" r="0.50" fill="#cfcfcf" stroke="none" stroke-width="1" />
<circle cx="459.20" cy="276.80" r="0.50" fill="#cfcfcf" stroke="none" stroke-width="1" />
<circle cx="461.40" cy="277.60" r="0.50" fill="#cfcfcf" stroke="none" stroke-width="1" />
<circle cx="459.40" cy="279.00" r="0.50" fill="#cfcfcf" stroke="none" stroke-width="1" />
<circle cx="461.60" cy="279.40" r="0.50" fill="#cfcfcf" stroke="none" stroke-width="1" />
<line x1="459.60" y1="296.00" x2="471.20" y2="296.00" stroke="#cfcfcf" stroke-width="1" />
<line x1="459.60" y1="298.90" x2="471.20" y2="298.90" stroke="#cfcfcf" stroke-width="1" />
<line x1="459.60" y1="301.80" x2="471.20" y2="301.80" stroke="#cfcfcf" stroke-width="1" />
<line x1="459.60" y1="304.70" x2="471.20" y2="304.70" stroke="#cfcfcf" stroke-width="1" />
<path d="M459.8,321.2 L465.8,315 L471.4,320 L466.4,325.6 L463.6,325.6 Z" fill="#cfcfcf" stroke="none" stroke-width="1" />
<path d="M461,321.4 L464.6,324.8 L466,324.8 L467.6,323 L463,318.8 Z" fill="#464646" stroke="none" stroke-width="1" />
<line x1="463.60" y1="326.40" x2="471.60" y2="326.40" stroke="#cfcfcf" stroke-width="0.9" />
<path d="M462.6,335 C461,338.2 459.4,340.4 459.4,342.6 C459.4,344.8 461,346 462.8,346 C464.6,346 466,344.8 466,342.6 C466,340.4 464.2,338.2 462.6,335 Z" fill="#a8a8a8" stroke="none" stroke-width="1" />
<path d="M468.2,335 C466.6,338.2 465,340.4 465,342.6 C465,344.8 466.6,346 468.4,346 C470.2,346 471.6,344.8 471.6,342.6 C471.6,340.4 469.8,338.2 468.2,335 Z" fill="#c4c4c4" stroke="#464646" stroke-width="0.5" />
<line x1="456.40" y1="354.40" x2="475.00" y2="354.40" stroke="#5c5c5c" stroke-width="0.8" />
<path d="M464.2,360.4 L465.4,358.8 L466.6,360.4 Z" fill="#ef6f8f" stroke="none" stroke-width="1" />
<rect x="462.60" y="360.60" width="5.60" height="2.20" fill="#ef6f8f" stroke="none" stroke-width="1" rx="0.8" />
<rect x="461.40" y="363.20" width="8.00" height="2.40" fill="#ef6f8f" stroke="none" stroke-width="1" rx="0.8" />
<rect x="460.20" y="366.00" width="10.40" height="2.60" fill="#ef6f8f" stroke="none" stroke-width="1" rx="0.8" />
<rect x="459.60" y="369.00" width="11.60" height="2.40" fill="#ef6f8f" stroke="none" stroke-width="1" rx="0.8" />
<path d="M459.6,371.8 H471.2 L470.6,373.8 C467,374.6 463,374.6 460,373.6 Z" fill="#f3d23a" stroke="none" stroke-width="1" />
<linearGradient id="gr1" x1="0" y1="0" x2="1" y2="1"><stop offset="0" stop-color="#d8d8d8"/><stop offset="1" stop-color="#505050"/></linearGradient>
<rect x="460.20" y="380.80" width="10.40" height="10.80" fill="url(#gr1)" stroke="#cfcfcf" stroke-width="0.9" rx="1" />
<line x1="459.60" y1="412.20" x2="471.20" y2="400.60" stroke="#cfcfcf" stroke-width="1" />
<path d="M460.6,421.8 H470.2 V425.2 L460.6,426.6 Z M460.6,428.2 L470.2,426.8 V431 H460.6 Z" fill="none" stroke="#cfcfcf" stroke-width="0.9" />
<path d="M460.6,441.6 H470.6 L460.6,451.6 Z" fill="none" stroke="#cfcfcf" stroke-width="1.6" stroke-linejoin="miter"/>
<path d="M465.4,481.8 C468.8,481.8 471.2,483.6 471.2,486 C471.2,488.4 468.8,490.2 465.4,490.2 C464.6,490.2 463.8,490.1 463.2,489.9 L460.8,491.6 L461.4,489.2 C460.2,488.4 459.6,487.2 459.6,486 C459.6,483.6 462,481.8 465.4,481.8 Z" fill="none" stroke="#cfcfcf" stroke-width="1" />
<rect x="459.60" y="501.00" width="2.40" height="2.40" fill="#cfcfcf" stroke="none" stroke-width="1" rx="0" />
<path d="M460.8,502.2 H470.4 M460.8,502.2 V511.4" fill="none" stroke="#cfcfcf" stroke-width="0.9" />
<path d="M464,504.6 L464,512.6 L466,510.8 L467.4,513.6 L468.6,513 L467.2,510.2 L469.8,510 Z" fill="#cfcfcf" stroke="none" stroke-width="1" />
<rect x="465.60" y="531.80" width="13.80" height="13.60" fill="#fff" stroke="#333" stroke-width="0.8" rx="1" />
<rect x="455.00" y="522.00" width="15.20" height="15.60" fill="#4a4d3a" stroke="#8d99c6" stroke-width="1.2" rx="2" />
<rect x="456.60" y="551.60" width="21.40" height="5.00" fill="#fff" stroke="#777" stroke-width="0.6" rx="1.2" />
<rect x="458.20" y="553.20" width="2.60" height="2.00" fill="#666" stroke="none" stroke-width="1" rx="0" />
<rect x="463.40" y="553.20" width="2.60" height="2.00" fill="#666" stroke="none" stroke-width="1" rx="0" />
<rect x="468.60" y="553.20" width="2.60" height="2.00" fill="#666" stroke="none" stroke-width="1" rx="0" />
<rect x="473.80" y="553.20" width="2.60" height="2.00" fill="#666" stroke="none" stroke-width="1" rx="0" />
<line x1="487.80" y1="51.90" x2="492.50" y2="51.90" stroke="#8a8a8a" stroke-width="0.8" />
<line x1="487.80" y1="53.70" x2="492.50" y2="53.70" stroke="#8a8a8a" stroke-width="0.8" />
<line x1="487.80" y1="55.50" x2="492.50" y2="55.50" stroke="#8a8a8a" stroke-width="0.8" />
<path d="M503.2,60.6 L503.8,58.6 L510,52.6 L511.6,54.2 L505.4,60.2 Z" fill="#d0d0d0" stroke="none" stroke-width="1" />
<rect x="508.80" y="57.40" width="3.80" height="3.80" fill="#555" stroke="#d0d0d0" stroke-width="0.7" rx="0" />
<path d="M487.40,79.30 C488.00,75.70 489.60,72.70 492.60,70.70 L496.20,74.30 C494.20,77.30 491.20,78.90 487.40,79.30 Z M487.80,78.90 L492.00,74.70" fill="none" stroke="#5a2a5c" stroke-width="1.3" stroke-linejoin="round"/>
<path d="M492.60,70.70 L494.80,68.50 L498.40,72.10 L496.20,74.30 Z" fill="#5a2a5c" stroke="#5a2a5c" stroke-width="0.78" stroke-linejoin="round"/>
<path d="M534.40,79.00 C535.00,75.40 536.60,72.40 539.60,70.40 L543.20,74.00 C541.20,77.00 538.20,78.60 534.40,79.00 Z M534.80,78.60 L539.00,74.40" fill="none" stroke="#c8c8c8" stroke-width="1.1" stroke-linejoin="round"/>
<path d="M539.60,70.40 L541.80,68.20 L545.40,71.80 L543.20,74.00 Z" fill="#c8c8c8" stroke="#c8c8c8" stroke-width="0.66" stroke-linejoin="round"/>
<path d="M582.40,79.00 C583.00,75.40 584.60,72.40 587.60,70.40 L591.20,74.00 C589.20,77.00 586.20,78.60 582.40,79.00 Z M582.80,78.60 L587.00,74.40" fill="none" stroke="#c8c8c8" stroke-width="1.1" stroke-linejoin="round"/>
<path d="M587.60,70.40 L589.80,68.20 L593.40,71.80 L591.20,74.00 Z" fill="#c8c8c8" stroke="#c8c8c8" stroke-width="0.66" stroke-linejoin="round"/>
<path d="M487.2,95.8 L489.59999999999997,89.39999999999999 L493.8,84.8 L497.8,88.39999999999999 L493.8,93.0 Z" fill="none" stroke="#c8c8c8" stroke-width="1.1" stroke-linejoin="round"/>
<path d="M490.8,88.39999999999999 L493.8,85.0 L497.4,88.39999999999999 L494.8,91.39999999999999 Z" fill="#c0c0c0" stroke="none" stroke-width="1" />
<rect x="533.2" y="87.8" width="13" height="4.6" rx="2.3" fill="none" stroke="#d8d8d8" stroke-width="1" transform="rotate(-45 539.7 90.1)"/>
<line x1="539.7" y1="87.8" x2="539.7" y2="92.39999999999999" stroke="#d8d8d8" stroke-width="0.8" transform="rotate(-45 539.7 90.1) translate(-2.6,0)"/>
<rect x="579.80" y="82.40" width="14.40" height="14.80" fill="#3b4468" stroke="none" stroke-width="1" rx="0" />
<circle cx="584.20" cy="86.80" r="2.60" fill="#c9d2ee" stroke="none" stroke-width="1" />
<circle cx="589.20" cy="90.40" r="3.00" fill="#e8ecf8" stroke="none" stroke-width="1" />
<circle cx="583.80" cy="93.80" r="2.20" fill="#9aa6d0" stroke="none" stroke-width="1" />
<circle cx="591.20" cy="85.20" r="1.60" fill="#aab4dc" stroke="none" stroke-width="1" />
<path d="M492.00,110.87 L493.70,110.55 L495.40,110.10 L497.10,109.58 L498.80,109.03 L500.50,108.48 L502.20,107.95 L503.90,107.44 L505.60,106.99 L507.30,106.59 L509.00,106.27 L510.70,106.02 L512.40,105.87 L514.10,105.80 L515.80,105.83 L517.50,105.94 L519.20,106.13 L520.90,106.40 L522.60,106.74 L524.30,107.13 L526.00,107.56 L527.70,108.02 L529.40,108.49 L531.10,108.97 L532.80,109.42 L534.50,109.83 L536.20,110.20 L537.90,110.51 L539.60,110.75 L541.30,110.92 L543.00,110.99 L544.70,110.97 L546.40,110.81 L548.10,110.50 L549.80,110.06 L551.50,109.49 L553.20,108.81 L554.90,108.05 L556.60,107.21 L558.30,106.32 L560.00,105.41" fill="none" stroke="#f0f0f8" stroke-width="0.8" />
<circle cx="526.20" cy="108.80" r="1.90" fill="#fff" stroke="none" stroke-width="1" />
<path d="M492.00,128.03 L493.70,127.59 L495.40,126.88 L497.10,126.12 L498.80,125.36 L500.50,124.60 L502.20,123.88 L503.90,123.20 L505.60,122.59 L507.30,122.07 L509.00,121.63 L510.70,121.29 L512.40,121.07 L514.10,120.96 L515.80,120.96 L517.50,121.07 L519.20,121.29 L520.90,121.59 L522.60,121.99 L524.30,122.45 L526.00,122.97 L527.70,123.53 L529.40,124.10 L531.10,124.69 L532.80,125.25 L534.50,125.78 L536.20,126.26 L537.90,126.68 L539.60,127.02 L541.30,127.28 L543.00,127.44 L544.70,127.50 L546.40,127.39 L548.10,127.12 L549.80,126.69 L551.50,126.13 L553.20,125.44 L554.90,124.66 L556.60,123.79 L558.30,122.78 L560.00,121.73 L560.00,122.17 L558.30,123.22 L556.60,124.26 L554.90,125.33 L553.20,126.31 L551.50,127.18 L549.80,127.93 L548.10,128.53 L546.40,128.97 L544.70,129.24 L543.00,129.34 L541.30,129.33 L539.60,129.21 L537.90,129.00 L536.20,128.70 L534.50,128.33 L532.80,127.90 L531.10,127.42 L529.40,126.91 L527.70,126.40 L526.00,125.89 L524.30,125.41 L522.60,124.98 L520.90,124.59 L519.20,124.28 L517.50,124.05 L515.80,123.90 L514.10,123.84 L512.40,123.88 L510.70,124.02 L509.00,124.25 L507.30,124.56 L505.60,124.94 L503.90,125.39 L502.20,125.87 L500.50,126.38 L498.80,126.90 L497.10,127.39 L495.40,127.84 L493.70,128.18 L492.00,128.47 Z" fill="#fff" stroke="none" stroke-width="0" opacity="1"/>
<path d="M500.00,144.56 L501.40,144.14 L502.80,143.42 L504.20,142.69 L505.60,141.95 L507.00,141.23 L508.40,140.55 L509.80,139.91 L511.20,139.34 L512.60,138.84 L514.00,138.43 L515.40,138.11 L516.80,137.90 L518.20,137.78 L519.60,137.77 L521.00,137.86 L522.40,138.04 L523.80,138.30 L525.20,138.64 L526.60,139.05 L528.00,139.51 L529.40,140.01 L530.80,140.53 L532.20,141.05 L533.60,141.57 L535.00,142.05 L536.40,142.50 L537.80,142.89 L539.20,143.22 L540.60,143.48 L542.00,143.66 L543.40,143.75 L544.80,143.70 L546.20,143.51 L547.60,143.19 L549.00,142.75 L550.40,142.21 L551.80,141.58 L553.20,140.88 L554.60,140.01 L556.00,139.10 L556.00,139.72 L554.60,140.63 L553.20,141.53 L551.80,142.51 L550.40,143.42 L549.00,144.23 L547.60,144.92 L546.20,145.49 L544.80,145.92 L543.40,146.19 L542.00,146.32 L540.60,146.35 L539.20,146.28 L537.80,146.13 L536.40,145.91 L535.00,145.62 L533.60,145.27 L532.20,144.88 L530.80,144.46 L529.40,144.03 L528.00,143.61 L526.60,143.20 L525.20,142.83 L523.80,142.50 L522.40,142.23 L521.00,142.02 L519.60,141.88 L518.20,141.82 L516.80,141.84 L515.40,141.93 L514.00,142.10 L512.60,142.34 L511.20,142.63 L509.80,142.97 L508.40,143.34 L507.00,143.73 L505.60,144.11 L504.20,144.47 L502.80,144.77 L501.40,144.96 L500.00,145.18 Z" fill="#d0d0d0" stroke="none" stroke-width="0" opacity="0.9"/>
<path d="M492.00,161.85 L493.70,161.44 L495.40,160.78 L497.10,160.07 L498.80,159.36 L500.50,158.66 L502.20,157.98 L503.90,157.35 L505.60,156.78 L507.30,156.29 L509.00,155.88 L510.70,155.57 L512.40,155.36 L514.10,155.26 L515.80,155.26 L517.50,155.36 L519.20,155.56 L520.90,155.85 L522.60,156.21 L524.30,156.65 L526.00,157.13 L527.70,157.65 L529.40,158.19 L531.10,158.73 L532.80,159.26 L534.50,159.76 L536.20,160.21 L537.90,160.60 L539.60,160.92 L541.30,161.15 L543.00,161.31 L544.70,161.36 L546.40,161.26 L548.10,161.00 L549.80,160.61 L551.50,160.08 L553.20,159.44 L554.90,158.71 L556.60,157.90 L558.30,156.95 L560.00,155.97 L560.00,156.39 L558.30,157.37 L556.60,158.33 L554.90,159.33 L553.20,160.25 L551.50,161.07 L549.80,161.76 L548.10,162.32 L546.40,162.73 L544.70,162.99 L543.00,163.08 L541.30,163.06 L539.60,162.96 L537.90,162.76 L536.20,162.48 L534.50,162.13 L532.80,161.73 L531.10,161.28 L529.40,160.81 L527.70,160.33 L526.00,159.86 L524.30,159.41 L522.60,159.00 L520.90,158.65 L519.20,158.36 L517.50,158.14 L515.80,158.00 L514.10,157.95 L512.40,157.99 L510.70,158.11 L509.00,158.33 L507.30,158.62 L505.60,158.97 L503.90,159.39 L502.20,159.84 L500.50,160.32 L498.80,160.80 L497.10,161.26 L495.40,161.67 L493.70,161.99 L492.00,162.27 Z" fill="#fff" stroke="none" stroke-width="0" opacity="1"/>
<path d="M497.00,178.25 L498.48,177.86 L499.95,177.21 L501.43,176.54 L502.90,175.86 L504.38,175.19 L505.85,174.55 L507.32,173.95 L508.80,173.41 L510.27,172.94 L511.75,172.56 L513.23,172.26 L514.70,172.06 L516.17,171.96 L517.65,171.96 L519.12,172.05 L520.60,172.24 L522.08,172.50 L523.55,172.84 L525.02,173.24 L526.50,173.70 L527.98,174.18 L529.45,174.69 L530.92,175.20 L532.40,175.69 L533.88,176.16 L535.35,176.59 L536.83,176.96 L538.30,177.26 L539.77,177.49 L541.25,177.64 L542.73,177.70 L544.20,177.62 L545.67,177.40 L547.15,177.04 L548.62,176.56 L550.10,175.98 L551.58,175.31 L553.05,174.57 L554.52,173.70 L556.00,172.79 L556.00,173.23 L554.52,174.14 L553.05,175.04 L551.58,175.98 L550.10,176.85 L548.62,177.62 L547.15,178.28 L545.67,178.81 L544.20,179.20 L542.73,179.45 L541.25,179.54 L539.77,179.54 L538.30,179.45 L536.83,179.27 L535.35,179.02 L533.88,178.71 L532.40,178.34 L530.92,177.93 L529.45,177.50 L527.98,177.06 L526.50,176.62 L525.02,176.21 L523.55,175.83 L522.08,175.50 L520.60,175.23 L519.12,175.03 L517.65,174.90 L516.17,174.84 L514.70,174.87 L513.23,174.99 L511.75,175.18 L510.27,175.44 L508.80,175.76 L507.32,176.13 L505.85,176.54 L504.38,176.97 L502.90,177.40 L501.43,177.81 L499.95,178.18 L498.48,178.45 L497.00,178.69 Z" fill="#fff" stroke="none" stroke-width="0" opacity="1"/>
<path d="M494.00,195.25 L495.60,194.84 L497.20,194.18 L498.80,193.47 L500.40,192.76 L502.00,192.06 L503.60,191.38 L505.20,190.75 L506.80,190.18 L508.40,189.69 L510.00,189.28 L511.60,188.97 L513.20,188.76 L514.80,188.66 L516.40,188.66 L518.00,188.76 L519.60,188.96 L521.20,189.25 L522.80,189.61 L524.40,190.05 L526.00,190.53 L527.60,191.05 L529.20,191.59 L530.80,192.13 L532.40,192.66 L534.00,193.16 L535.60,193.61 L537.20,194.00 L538.80,194.32 L540.40,194.55 L542.00,194.71 L543.60,194.76 L545.20,194.66 L546.80,194.40 L548.40,194.01 L550.00,193.48 L551.60,192.84 L553.20,192.11 L554.80,191.30 L556.40,190.35 L558.00,189.37 L558.00,189.79 L556.40,190.77 L554.80,191.73 L553.20,192.73 L551.60,193.65 L550.00,194.47 L548.40,195.16 L546.80,195.72 L545.20,196.13 L543.60,196.39 L542.00,196.48 L540.40,196.46 L538.80,196.36 L537.20,196.16 L535.60,195.88 L534.00,195.53 L532.40,195.13 L530.80,194.68 L529.20,194.21 L527.60,193.73 L526.00,193.26 L524.40,192.81 L522.80,192.40 L521.20,192.05 L519.60,191.76 L518.00,191.54 L516.40,191.40 L514.80,191.35 L513.20,191.39 L511.60,191.51 L510.00,191.73 L508.40,192.02 L506.80,192.37 L505.20,192.79 L503.60,193.24 L502.00,193.72 L500.40,194.20 L498.80,194.66 L497.20,195.07 L495.60,195.39 L494.00,195.67 Z" fill="#fff" stroke="none" stroke-width="0" opacity="1"/>
<rect x="576.40" y="206.70" width="8.40" height="8.40" fill="none" stroke="#cfcfcf" stroke-width="0.9" rx="1.2" />
<path d="M580.6,208.3 V212.5 M578.8000000000001,210.70000000000002 L580.6,212.70000000000002 L582.4,210.70000000000002 M578.2,213.70000000000002 H583.0" fill="none" stroke="#cfcfcf" stroke-width="0.8" />
<rect x="594.40" y="206.50" width="6.60" height="6.60" fill="none" stroke="#cfcfcf" stroke-width="0.9" rx="1" />
<rect x="596.60" y="208.70" width="6.80" height="6.80" fill="#555" stroke="#cfcfcf" stroke-width="0.9" rx="1" />
<path d="M600.0,210.5 V213.70000000000002 M598.4,212.1 H601.5999999999999" fill="none" stroke="#cfcfcf" stroke-width="0.8" />
<path d="M614.1999999999999,207.9 H620.6 M616.1999999999999,207.9 V206.70000000000002 H618.6 V207.9 M614.8,207.9 L615.1999999999999,215.3 H619.6 L620.0,207.9 M616.5,209.5 V213.70000000000002 M618.3,209.5 V213.70000000000002" fill="none" stroke="#cfcfcf" stroke-width="0.8" />
<line x1="487.80" y1="225.80" x2="492.50" y2="225.80" stroke="#8a8a8a" stroke-width="0.8" />
<line x1="487.80" y1="227.60" x2="492.50" y2="227.60" stroke="#8a8a8a" stroke-width="0.8" />
<line x1="487.80" y1="229.40" x2="492.50" y2="229.40" stroke="#8a8a8a" stroke-width="0.8" />
<path d="M503.2,234.8 L503.8,232.8 L510,226.8 L511.6,228.4 L505.4,234.4 Z" fill="#d0d0d0" stroke="none" stroke-width="1" />
<circle cx="510.40" cy="234.00" r="1.80" fill="#555" stroke="#d0d0d0" stroke-width="0.7" />
<path d="M496,257.4 C503,253 510,250.4 517.5,248.4 C524,246.6 531,245.4 537,245.2 C543,245 548,245.8 551.6,247 C553.6,247.8 554.8,249.4 555,251.4 C555.2,253.4 554.6,255.2 553.6,256.4 C552.6,255.4 552.4,253.6 552,252 C551.6,250.2 550.4,249 548,248.4 C544,247.4 540,247.2 536,247.4 C530,247.8 524,248.8 518,250.4 C510,252.6 503,255 496,257.4 Z" fill="#4b4d3b" stroke="#4b4d3b" stroke-width="0.4" />
<path d="M554.6,249.6 C560,251.4 566,253.6 574,254.4 C582,255 592,253.6 600,251.4 C604,250.2 606,249.4 607.6,248.8 C604,251.4 598,253.6 590,254.8 C582,256 572,255.8 565,254 C560,252.8 556.6,252 554.8,252.4 Z" fill="#4a4c3d" stroke="#4a4c3d" stroke-width="0.4" />
<rect x="613.60" y="253.80" width="6.00" height="4.60" fill="#d8d8d8" stroke="none" stroke-width="1" rx="0.6" />
<path d="M612,254 V252.4 A1.9,1.9 0 0 1 615.8,252.4 V253.6" fill="none" stroke="#d8d8d8" stroke-width="0.9" />
<line x1="486.40" y1="270.20" x2="488.80" y2="270.20" stroke="#8a8a8a" stroke-width="0.6" />
<line x1="533.00" y1="270.20" x2="620.60" y2="270.20" stroke="#8a8a8a" stroke-width="0.6" />
<path d="M602.90,278.60 L605.20,276.20 L607.50,278.60" fill="none" stroke="#cfcfcf" stroke-width="0.8" />
<path d="M602.90,281.80 L605.20,284.20 L607.50,281.80" fill="none" stroke="#cfcfcf" stroke-width="0.8" />
<rect x="610.80" y="275.00" width="9.40" height="10.60" fill="#5e5e5e" stroke="none" stroke-width="1" rx="1.4" />
<path d="M615.5,277.2 V281.4 M613.6,279.8 L615.5,281.8 L617.4,279.8 M613,283.4 H618" fill="none" stroke="#d8d8d8" stroke-width="0.9" />
<line x1="486.40" y1="292.60" x2="488.80" y2="292.60" stroke="#8a8a8a" stroke-width="0.6" />
<line x1="512.30" y1="292.60" x2="620.60" y2="292.60" stroke="#8a8a8a" stroke-width="0.6" />
<path d="M602.90,303.60 L605.20,301.20 L607.50,303.60" fill="none" stroke="#cfcfcf" stroke-width="0.8" />
<path d="M602.90,306.80 L605.20,309.20 L607.50,306.80" fill="none" stroke="#cfcfcf" stroke-width="0.8" />
<rect x="610.80" y="298.40" width="9.40" height="15.60" fill="#5e5e5e" stroke="none" stroke-width="1" rx="1.4" />
<rect x="612.80" y="303.80" width="5.40" height="4.80" fill="none" stroke="#d8d8d8" stroke-width="0.8" rx="0.6" />
<path d="M613.8,307.6 L617.2,304.8" fill="none" stroke="#d8d8d8" stroke-width="0.8" />
<line x1="486.40" y1="320.80" x2="488.80" y2="320.80" stroke="#8a8a8a" stroke-width="0.6" />
<line x1="546.80" y1="320.80" x2="620.60" y2="320.80" stroke="#8a8a8a" stroke-width="0.6" />
<circle cx="598.60" cy="337.80" r="4.20" fill="none" stroke="#cfcfcf" stroke-width="0.8" />
<path d="M598.6,337.8 V334.6 M598.6,333 V334" fill="none" stroke="#cfcfcf" stroke-width="0.8" />
<circle cx="598.60" cy="337.80" r="0.70" fill="#cfcfcf" stroke="none" stroke-width="1" />
<path d="M614.4,334.2 A2.6,2.6 0 1 0 617.2,337 L621,340.8 L619.6,342.2 L615.8,338.4" fill="none" stroke="#cfcfcf" stroke-width="0.9" />
<line x1="488.80" y1="353.40" x2="491.80" y2="353.40" stroke="#6a6a6a" stroke-width="0.9" />
<line x1="488.80" y1="355.40" x2="491.80" y2="355.40" stroke="#6a6a6a" stroke-width="0.9" />
<line x1="488.80" y1="357.40" x2="491.80" y2="357.40" stroke="#6a6a6a" stroke-width="0.9" />
<circle cx="507.20" cy="358.40" r="3.80" fill="none" stroke="#d0d0d0" stroke-width="0.8" />
<rect x="505.60" y="356.80" width="3.20" height="3.20" fill="#d0d0d0" stroke="none" stroke-width="1" rx="0.6" />
<circle cx="541.60" cy="418.40" r="2.20" fill="none" stroke="#e8e8e8" stroke-width="0.9" />
<circle cx="541.60" cy="418.40" r="1.30" fill="none" stroke="#222" stroke-width="0.5" />
<g transform="rotate(8 561 369.4)"><rect x="558.2" y="365" width="5.6" height="8.8" fill="#dcecb0" stroke="#333" stroke-width="0.8" rx="0.8"/><rect x="559.2" y="366" width="3.6" height="6.8" fill="none" stroke="#fff" stroke-width="0.7"/></g>
<rect x="493.40" y="438.60" width="13.80" height="13.20" fill="#fff" stroke="#333" stroke-width="0.8" rx="1" />
<rect x="483.80" y="430.00" width="14.80" height="14.00" fill="#4a4d3a" stroke="#8d99c6" stroke-width="1.2" rx="2" />
<rect x="484.00" y="455.00" width="23.20" height="6.00" fill="#fff" stroke="#777" stroke-width="0.6" rx="1.4" />
<rect x="486.00" y="456.80" width="2.80" height="2.20" fill="#666" stroke="none" stroke-width="1" rx="0" />
<rect x="491.60" y="456.80" width="2.80" height="2.20" fill="#666" stroke="none" stroke-width="1" rx="0" />
<rect x="497.20" y="456.80" width="2.80" height="2.20" fill="#666" stroke="none" stroke-width="1" rx="0" />
<rect x="502.80" y="456.80" width="2.80" height="2.20" fill="#666" stroke="none" stroke-width="1" rx="0" />
<rect x="539.80" y="455.90" width="4.40" height="4.60" fill="#d0d0d0" stroke="none" stroke-width="1" rx="0.6" />
<rect x="561.60" y="455.90" width="4.40" height="4.60" fill="#d0d0d0" stroke="none" stroke-width="1" rx="0.6" />
<rect x="583.20" y="455.90" width="4.40" height="4.60" fill="#d0d0d0" stroke="none" stroke-width="1" rx="0.6" />
<circle cx="615.60" cy="455.00" r="4.80" fill="none" stroke="#d0d0d0" stroke-width="0.9" />
<path d="M614,452.4 L618,455 L614,457.6 Z" fill="none" stroke="#d0d0d0" stroke-width="0.8" />
<line x1="488.80" y1="473.40" x2="491.80" y2="473.40" stroke="#6a6a6a" stroke-width="0.9" />
<line x1="488.80" y1="475.40" x2="491.80" y2="475.40" stroke="#6a6a6a" stroke-width="0.9" />
<line x1="488.80" y1="477.40" x2="491.80" y2="477.40" stroke="#6a6a6a" stroke-width="0.9" />
<rect x="502.00" y="473.60" width="9.40" height="6.40" fill="#777" stroke="#8a8a8a" stroke-width="0.6" rx="0" />
<rect x="502.60" y="474.20" width="3.60" height="2.60" fill="#999" stroke="none" stroke-width="1" rx="0" />
<rect x="506.80" y="474.20" width="4.00" height="2.60" fill="#666" stroke="none" stroke-width="1" rx="0" />
<rect x="502.60" y="477.20" width="3.60" height="2.40" fill="#666" stroke="none" stroke-width="1" rx="0" />
<rect x="522.40" y="473.00" width="8.00" height="8.00" fill="#d8d8d8" stroke="none" stroke-width="1" rx="0" />
<rect x="523.00" y="473.60" width="1.00" height="1.00" fill="#555" stroke="none" stroke-width="1" rx="0" />
<rect x="523.00" y="479.40" width="1.00" height="1.00" fill="#555" stroke="none" stroke-width="1" rx="0" />
<rect x="524.90" y="473.60" width="1.00" height="1.00" fill="#555" stroke="none" stroke-width="1" rx="0" />
<rect x="524.90" y="479.40" width="1.00" height="1.00" fill="#555" stroke="none" stroke-width="1" rx="0" />
<rect x="526.80" y="473.60" width="1.00" height="1.00" fill="#555" stroke="none" stroke-width="1" rx="0" />
<rect x="526.80" y="479.40" width="1.00" height="1.00" fill="#555" stroke="none" stroke-width="1" rx="0" />
<rect x="528.70" y="473.60" width="1.00" height="1.00" fill="#555" stroke="none" stroke-width="1" rx="0" />
<rect x="528.70" y="479.40" width="1.00" height="1.00" fill="#555" stroke="none" stroke-width="1" rx="0" />
<rect x="523.20" y="475.40" width="3.00" height="3.20" fill="#777" stroke="none" stroke-width="1" rx="0" />
<rect x="526.80" y="475.40" width="3.00" height="3.20" fill="#999" stroke="none" stroke-width="1" rx="0" />
<rect x="501.50" y="485.10" width="15.50" height="15.40" fill="none" stroke="#f06a7a" stroke-width="0.9" rx="0" />
<rect x="484.00" y="550.60" width="3.00" height="3.00" fill="#d22" stroke="none" stroke-width="1" rx="0" />
<circle cx="506.40" cy="552.40" r="1.80" fill="#4ac83a" stroke="none" stroke-width="1" />
<rect x="525.60" y="550.20" width="4.00" height="4.20" fill="#1212c8" stroke="none" stroke-width="1" rx="0" />
<line x1="634.00" y1="51.80" x2="638.60" y2="51.80" stroke="#8a8a8a" stroke-width="0.8" />
<line x1="634.00" y1="53.60" x2="638.60" y2="53.60" stroke="#8a8a8a" stroke-width="0.8" />
<line x1="634.00" y1="55.40" x2="638.60" y2="55.40" stroke="#8a8a8a" stroke-width="0.8" />
<rect x="648.80" y="53.40" width="8.80" height="7.40" fill="none" stroke="#d0d0d0" stroke-width="0.8" rx="1.6" />
<rect x="651.60" y="55.20" width="4.40" height="3.80" fill="#9a9a9a" stroke="#d0d0d0" stroke-width="0.5" rx="0" />
<line x1="650.20" y1="54.80" x2="650.20" y2="59.40" stroke="#d0d0d0" stroke-width="0.6" />
<clipPath id="nv"><rect x="628.8" y="63.6" width="140.4" height="72.6"/></clipPath>
<g clip-path="url(#nv)">
<g transform="translate(673.2,64) scale(0.1821) rotate(-22.5) translate(-193.5,-144.7)" fill="none" stroke-linecap="round">
<path d="M188.3,264.0 C188.2,262.3 187.2,257.7 187.8,254.0 C188.5,250.2 189.8,245.4 192.3,241.4 C194.9,237.4 198.6,233.0 202.9,230.1 C207.2,227.2 212.5,225.0 217.9,223.8 C223.4,222.7 230.1,222.0 235.5,223.1 C240.9,224.1 246.7,226.9 250.6,230.1 C254.4,233.4 256.9,238.1 258.6,242.7 C260.3,247.3 260.6,252.7 260.6,257.7 C260.6,262.7 259.6,269.8 258.6,272.8 C257.5,275.7 255.7,277.4 254.3,275.3 C253.0,273.2 251.8,264.8 250.6,260.2 C249.3,255.6 248.5,251.0 246.8,247.7 C245.1,244.3 243.2,241.4 240.5,240.2 C237.8,238.9 233.0,241.4 230.5,240.2 C228.0,238.9 228.4,233.0 225.5,232.6 C222.5,232.2 216.7,235.1 212.9,237.6 C209.2,240.2 205.8,243.9 202.9,247.7 C200.0,251.4 197.2,255.6 195.4,260.2 C193.5,264.8 192.8,273.2 191.6,275.3 C190.4,277.4 188.9,273.2 188.3,272.8 Z" stroke="none" stroke-width="0.00" fill="#d4d4d4"/>
<path d="M188.3,275.3 C188.2,271.7 187.2,259.6 187.8,254.0 C188.5,248.3 189.8,245.4 192.3,241.4 C194.9,237.4 198.6,233.0 202.9,230.1 C207.2,227.2 212.5,225.0 217.9,223.8 C223.4,222.7 230.1,222.0 235.5,223.1 C240.9,224.1 246.7,226.9 250.6,230.1 C254.4,233.4 256.9,238.1 258.6,242.7 C260.3,247.3 260.9,252.3 260.6,257.7 C260.3,263.2 257.5,272.4 256.8,275.3" stroke="#b4b4b4" stroke-width="1.05" fill="none"/>
<path d="M225.5,231.4 C223.0,233.2 214.6,238.3 210.4,242.7 C206.2,247.1 203.1,252.3 200.4,257.7 C197.7,263.2 195.8,269.0 194.1,275.3 C192.4,281.6 191.0,292.0 190.3,295.4" stroke="#8c8c8c" stroke-width="1.05" fill="none"/>
<path d="M230.5,232.6 C228.4,234.7 221.7,240.2 217.9,245.2 C214.2,250.2 210.8,256.9 207.9,262.7 C205.0,268.6 201.6,277.4 200.4,280.3" stroke="#b4b4b4" stroke-width="1.05" fill="none"/>
<path d="M234.3,235.1 C232.4,237.0 226.3,241.8 223.0,246.4 C219.6,251.0 216.7,256.7 214.2,262.7 C211.7,268.8 209.0,279.5 207.9,282.8" stroke="#b4b4b4" stroke-width="0.90" fill="none"/>
<path d="M240.5,241.4 C241.2,244.1 243.5,252.1 244.3,257.7 C245.1,263.4 245.8,270.7 245.5,275.3 C245.3,279.9 243.5,283.6 243.0,285.3" stroke="#8c8c8c" stroke-width="1.05" fill="none"/>
<path d="M229.2,241.4 C230.5,241.2 234.3,239.7 236.8,240.2 C239.3,240.6 243.0,243.3 244.3,243.9" stroke="#8c8c8c" stroke-width="1.05" fill="none"/>
<path d="M194.1,275.3 C192.6,279.5 188.0,292.0 185.3,300.4 C182.6,308.7 179.5,320.0 177.8,325.5 C176.1,330.9 175.7,331.7 175.3,333.0" stroke="#b4b4b4" stroke-width="1.05" fill="none"/>
<path d="M200.4,280.3 C198.7,284.5 193.5,297.0 190.3,305.4 C187.2,313.8 183.0,326.3 181.6,330.5" stroke="#b4b4b4" stroke-width="1.05" fill="none"/>
<path d="M197.9,275.3 C196.2,279.5 190.8,292.4 187.8,300.4 C184.8,308.3 181.1,319.2 179.8,323.0" stroke="#b4b4b4" stroke-width="0.90" fill="none"/>
<path d="M203.4,285.3 C201.7,289.5 196.4,302.5 193.4,310.4 C190.3,318.4 186.7,329.2 185.3,333.0" stroke="#d2d2d2" stroke-width="0.90" fill="none"/>
<path d="M260.6,230.1 C262.3,232.2 268.5,237.2 270.6,242.7 C272.7,248.1 273.6,257.3 273.1,262.7 C272.7,268.2 269.0,273.2 268.1,275.3" stroke="#d2d2d2" stroke-width="0.90" fill="none"/>
<path d="M230.5,220.1 C233.8,220.3 244.7,218.8 250.6,221.3 C256.4,223.8 262.1,229.9 265.6,235.1 C269.2,240.4 270.8,249.8 271.9,252.7" stroke="#d2d2d2" stroke-width="0.90" fill="none"/>
<path d="M197.9,275.3 C198.1,277.4 197.9,283.6 199.1,287.8 C200.4,292.0 202.3,296.8 205.4,300.4 C208.5,303.9 215.0,307.6 217.9,309.2 C220.9,310.7 220.0,311.1 223.0,309.7 C225.9,308.2 231.7,304.0 235.5,300.4 C239.3,296.7 243.4,291.6 245.5,287.8 C247.7,284.1 248.1,279.5 248.6,277.8" stroke="#8c8c8c" stroke-width="1.20" fill="none"/>
<path d="M248.6,275.3 C249.3,274.9 252.2,271.9 253.1,272.8 C253.9,273.6 254.2,278.0 253.6,280.3 C252.9,282.6 250.0,285.5 249.3,286.6" stroke="#b4b4b4" stroke-width="1.05" fill="none"/>
<path d="M196.6,276.5 C197.2,276.1 198.9,274.5 200.4,274.0 C201.8,273.5 203.7,273.3 205.4,273.5 C207.1,273.7 209.6,275.0 210.4,275.3" stroke="#555" stroke-width="1.50" fill="none"/>
<path d="M225.5,274.8 C226.3,274.4 228.6,273.1 230.5,272.8 C232.4,272.4 235.0,272.4 236.8,272.8 C238.5,273.1 240.3,274.4 241.0,274.8" stroke="#555" stroke-width="1.50" fill="none"/>
<path d="M201.6,280.3 L200.4,284.3" stroke="#b4b4b4" stroke-width="0.90" fill="none"/>
<path d="M204.4,280.8 L203.1,284.8" stroke="#b4b4b4" stroke-width="0.90" fill="none"/>
<path d="M236.8,279.8 L238.0,283.8" stroke="#b4b4b4" stroke-width="0.90" fill="none"/>
<path d="M239.5,279.3 L240.8,283.1" stroke="#b4b4b4" stroke-width="0.90" fill="none"/>
<path d="M212.9,293.4 C215.0,293.2 223.6,291.2 225.5,292.3 C227.4,293.5 225.1,298.4 224.2,300.4 C223.3,302.3 221.4,304.1 219.9,304.1 C218.5,304.1 216.2,301.0 215.4,300.4 Z" stroke="#777" stroke-width="1.20" fill="none"/>
<path d="M210.4,310.4 L205.4,317.9" stroke="#b4b4b4" stroke-width="1.05" fill="none"/>
<path d="M240.5,305.4 L244.3,315.4" stroke="#b4b4b4" stroke-width="1.05" fill="none"/>
<path d="M135.1,289.6 C135.4,288.4 136.1,284.2 136.9,282.4 C137.6,280.6 138.7,278.8 139.6,278.8 C140.4,278.8 141.2,279.1 141.9,282.4 C142.6,285.7 143.7,295.8 144.1,298.5" stroke="#8c8c8c" stroke-width="1.20" fill="none"/>
<path d="M145.8,298.5 C146.3,296.6 147.7,290.3 148.5,286.9 C149.4,283.4 150.0,279.5 150.9,277.9 C151.8,276.4 153.2,277.0 153.9,277.6 C154.6,278.2 155.0,279.1 154.8,281.5 C154.6,284.0 153.4,288.8 152.7,292.3 C151.9,295.7 150.7,300.5 150.3,302.1" stroke="#8c8c8c" stroke-width="1.20" fill="none"/>
<path d="M151.2,308.4 C152.3,307.8 155.4,306.1 157.5,304.8 C159.6,303.5 162.3,300.6 163.8,300.3 C165.3,300.0 166.5,301.7 166.5,303.0 C166.5,304.4 165.1,306.6 163.8,308.4 C162.4,310.2 159.7,312.0 158.4,313.8 C157.0,315.6 156.1,318.2 155.7,319.1" stroke="#8c8c8c" stroke-width="1.20" fill="none"/>
<path d="M131.5,303.0 C132.1,302.6 133.7,300.2 135.1,300.3 C136.4,300.5 139.0,302.0 139.6,303.9 C140.2,305.8 139.6,309.9 138.7,312.0 C137.8,314.1 135.7,316.2 134.2,316.5 C132.7,316.8 130.6,315.1 129.7,313.8 C128.8,312.4 129.0,309.3 128.8,308.4 Z" stroke="#8c8c8c" stroke-width="1.20" fill="none"/>
<path d="M132.4,308.4 C132.8,307.9 134.2,305.7 135.1,305.7 C136.0,305.7 137.5,307.2 137.8,308.4 C138.1,309.6 137.6,312.0 136.9,312.9 C136.1,313.8 133.9,313.6 133.3,313.8" stroke="#8c8c8c" stroke-width="1.05" fill="none"/>
<path d="M135.1,289.6 C134.7,290.6 133.5,293.6 132.9,295.8 C132.3,298.1 131.7,301.8 131.5,303.0" stroke="#8c8c8c" stroke-width="1.05" fill="none"/>
<path d="M128.8,317.3 C129.0,318.8 130.2,323.0 129.7,326.3 C129.3,329.6 127.6,333.2 126.1,337.1 C124.6,340.9 122.2,346.0 120.8,349.6 C119.3,353.2 117.8,357.1 117.2,358.6" stroke="#8c8c8c" stroke-width="1.20" fill="none"/>
<path d="M155.7,319.1 C154.8,320.6 151.8,325.1 150.3,328.1 C148.8,331.1 148.1,333.5 146.7,337.1 C145.4,340.6 143.5,346.0 142.3,349.6 C141.1,353.2 140.0,357.1 139.6,358.6" stroke="#8c8c8c" stroke-width="1.20" fill="none"/>
<path d="M156.6,295.8 C158.7,294.3 166.6,289.0 169.1,286.9 C171.7,284.8 171.4,283.9 171.8,283.3" stroke="#d2d2d2" stroke-width="0.90" fill="none"/>
<path d="M142.3,333.5 C144.3,333.2 150.3,331.4 154.8,331.7 C159.3,332.0 166.8,334.7 169.1,335.3" stroke="#d2d2d2" stroke-width="0.90" fill="none"/>
<path d="M140.5,338.9 C143.2,338.6 151.5,336.8 156.6,337.1 C161.7,337.4 168.5,340.0 170.9,340.6" stroke="#d2d2d2" stroke-width="0.90" fill="none"/>
<path d="M314.2,317.6 C314.6,315.6 315.7,309.0 316.8,305.4 C317.9,301.7 318.6,299.3 320.7,295.5 C322.8,291.7 325.5,286.4 329.6,282.7 C333.7,279.0 339.4,275.2 345.4,273.4 C351.3,271.7 359.5,271.3 365.1,272.2 C370.7,273.1 375.3,275.7 378.9,278.7 C382.5,281.8 384.8,285.5 386.8,290.6 C388.8,295.7 390.2,302.9 390.7,309.3 C391.2,315.7 390.7,323.6 389.7,329.0 C388.8,334.5 387.3,338.7 384.8,341.9 C382.3,345.0 378.2,346.0 375.0,347.8 C371.7,349.5 368.2,350.3 365.1,352.3 C362.0,354.3 358.6,357.2 356.2,359.6 C353.8,362.0 351.8,365.4 350.9,366.5" stroke="#b6e3f0" stroke-width="5.60" fill="none" opacity="0.95"/>
<path d="M317.8,312.9 C318.3,310.8 319.7,304.3 321.3,300.4 C322.9,296.6 326.6,291.4 327.6,289.6" stroke="#c0e8f3" stroke-width="5.50" fill="none" opacity="0.8"/>
<path d="M349.3,275.8 C351.9,275.9 360.5,275.5 365.1,276.8 C369.7,278.1 375.0,282.5 376.9,283.7" stroke="#c4eaf4" stroke-width="4.00" fill="none" opacity="0.7"/>
<path d="M317.7,287.7 C319.8,285.2 325.2,276.4 330.3,272.6 C335.3,268.9 341.6,266.3 347.8,265.1 C354.1,263.8 362.0,263.8 367.9,265.1 C373.8,266.3 378.8,268.9 383.0,272.6 C387.1,276.4 390.9,282.2 393.0,287.7 C395.1,293.1 395.1,302.3 395.5,305.2" stroke="#d2d2d2" stroke-width="1.05" fill="none"/>
<path d="M320.2,285.2 C322.7,282.7 329.4,273.2 335.3,270.1 C341.1,267.0 352.0,267.0 355.4,266.3" stroke="#d2d2d2" stroke-width="0.90" fill="none"/>
<path d="M367.9,286.4 C365.8,287.9 360.0,292.1 355.4,295.2 C350.8,298.3 344.9,302.5 340.3,305.2 C335.7,308.0 329.8,310.5 327.8,311.5" stroke="#8c8c8c" stroke-width="1.05" fill="none"/>
<path d="M370.4,286.4 C371.3,289.1 374.2,296.7 375.4,302.7 C376.7,308.8 378.2,316.5 377.9,322.8 C377.7,329.1 374.8,337.4 374.2,340.4" stroke="#8c8c8c" stroke-width="1.05" fill="none"/>
<path d="M366.6,285.2 C367.5,285.1 369.8,283.8 371.7,284.7 C373.6,285.5 376.9,289.3 377.9,290.2" stroke="#8c8c8c" stroke-width="1.05" fill="none"/>
<path d="M320.2,296.5 C322.7,297.5 331.5,300.9 335.3,302.7 C339.0,304.6 341.6,306.9 342.8,307.8" stroke="#8c8c8c" stroke-width="1.05" fill="none"/>
<path d="M371.7,287.7 C371.0,290.6 369.8,300.2 367.9,305.2 C366.0,310.3 361.6,315.7 360.4,317.8" stroke="#b4b4b4" stroke-width="1.05" fill="none"/>
<path d="M354.1,312.8 C356.8,313.6 365.6,315.9 370.4,317.8 C375.2,319.7 380.9,323.0 383.0,324.1" stroke="#8c8c8c" stroke-width="1.05" fill="none"/>
<path d="M380.5,290.2 C381.1,293.5 384.2,303.6 384.2,310.3 C384.2,317.0 381.1,327.0 380.5,330.3" stroke="#b4b4b4" stroke-width="0.90" fill="none"/>
<path d="M317.7,306.5 L339.0,314.0" stroke="#3a3a3a" stroke-width="1.95" fill="none"/>
<path d="M339.0,314.0 L335.3,324.1" stroke="#3a3a3a" stroke-width="1.95" fill="none"/>
<path d="M335.3,324.1 L314.7,316.5" stroke="#3a3a3a" stroke-width="1.95" fill="none"/>
<path d="M314.7,316.5 L317.7,306.5" stroke="#3a3a3a" stroke-width="1.95" fill="none"/>
<path d="M344.1,319.8 L365.4,328.3" stroke="#3a3a3a" stroke-width="1.95" fill="none"/>
<path d="M365.4,328.3 L361.6,338.4" stroke="#3a3a3a" stroke-width="1.95" fill="none"/>
<path d="M361.6,338.4 L340.8,330.3" stroke="#3a3a3a" stroke-width="1.95" fill="none"/>
<path d="M340.8,330.3 L344.1,319.8" stroke="#3a3a3a" stroke-width="1.95" fill="none"/>
<path d="M338.3,316.5 L344.1,320.8" stroke="#666" stroke-width="1.20" fill="none"/>
<path d="M320.2,312.3 C321.0,312.8 323.3,314.8 324.7,315.3 C326.2,315.8 328.3,315.3 329.0,315.3" stroke="#666" stroke-width="1.80" fill="none"/>
<path d="M348.3,325.3 C349.3,325.9 352.2,328.2 354.1,329.1 C356.0,329.9 358.9,330.1 359.9,330.3" stroke="#666" stroke-width="1.80" fill="none"/>
<path d="M365.4,330.3 L372.9,335.4" stroke="#777" stroke-width="1.05" fill="none"/>
<path d="M315.7,317.8 C316.3,320.7 317.4,330.3 319.0,335.4 C320.6,340.4 322.9,345.1 325.2,347.9 C327.6,350.7 329.9,352.0 333.3,352.2 C336.6,352.4 340.8,351.1 345.3,349.2 C349.8,347.2 356.2,342.7 360.4,340.4 C364.6,338.1 368.7,336.2 370.4,335.4" stroke="#8c8c8c" stroke-width="1.20" fill="none"/>
<path d="M329.0,344.9 C330.1,344.6 333.3,343.3 335.3,343.4 C337.2,343.5 340.4,344.3 340.8,345.4 C341.2,346.5 339.3,349.4 337.8,349.9 C336.2,350.4 332.6,348.7 331.5,348.4 Z" stroke="#777" stroke-width="1.20" fill="none"/>
<path d="M374.2,332.8 C374.8,333.3 377.5,333.7 377.9,335.4 C378.4,337.0 377.7,341.2 376.7,342.9 C375.6,344.6 372.5,345.0 371.7,345.4" stroke="#8c8c8c" stroke-width="1.05" fill="none"/>
<path d="M367.9,340.4 C367.7,342.0 366.6,347.7 366.6,350.4 C366.7,353.1 368.1,355.6 368.4,356.7" stroke="#777" stroke-width="1.05" fill="none"/>
<path d="M280.1,320.2 C279.2,316.0 275.3,300.2 274.6,295.1 C273.8,290.0 274.9,290.6 275.6,289.6 C276.3,288.5 277.9,288.1 278.8,288.8 C279.8,289.5 280.1,289.2 281.3,293.8 C282.6,298.4 285.5,312.6 286.3,316.4" stroke="#7e7e7e" stroke-width="1.35" fill="none"/>
<path d="M286.3,316.4 C287.0,311.8 289.1,293.9 290.1,288.8 C291.2,283.7 291.8,285.5 292.6,285.5 C293.5,285.5 294.8,284.1 295.1,288.8 C295.5,293.5 294.7,309.7 294.6,313.9" stroke="#7e7e7e" stroke-width="1.35" fill="none"/>
<path d="M288.9,318.9 C289.5,318.3 290.9,315.8 292.6,315.1 C294.3,314.5 297.4,314.3 298.9,315.1 C300.4,316.0 301.6,318.3 301.4,320.2 C301.2,322.0 299.1,325.0 297.6,326.4 C296.2,327.9 294.1,329.1 292.6,328.9 C291.2,328.7 289.5,325.8 288.9,325.2 Z" stroke="#7e7e7e" stroke-width="1.35" fill="none"/>
<path d="M295.1,323.9 C296.0,323.5 298.7,321.0 300.1,321.4 C301.6,321.8 303.7,324.8 303.9,326.4 C304.1,328.1 302.6,330.6 301.4,331.4 C300.1,332.3 297.2,331.4 296.4,331.4" stroke="#7e7e7e" stroke-width="1.35" fill="none"/>
<path d="M280.1,320.2 C278.8,320.8 275.1,323.6 272.6,323.9 C270.0,324.3 266.5,321.7 265.0,322.2 C263.6,322.6 262.5,324.7 263.8,326.4 C265.0,328.2 269.4,330.0 272.6,332.7 C275.7,335.4 280.9,341.1 282.6,342.7" stroke="#7e7e7e" stroke-width="1.35" fill="none"/>
<path d="M282.7,342.4 C282.9,342.0 284.6,337.5 283.9,339.7 C283.2,342.0 280.6,350.5 278.5,355.8 C276.4,361.2 273.2,367.5 271.4,372.0 C269.6,376.5 268.5,378.8 267.8,382.7 C267.0,386.6 266.6,391.7 266.9,395.3 C267.2,398.9 267.9,402.4 269.6,404.2 C271.2,406.0 274.3,406.9 276.7,406.0 C279.1,405.1 282.7,400.0 283.9,398.9" stroke="#7e7e7e" stroke-width="1.35" fill="none"/>
<path d="M306.7,330.8 C306.5,331.6 306.4,332.8 305.4,336.1 C304.5,339.4 302.9,344.8 300.9,350.5 C299.0,356.1 295.9,363.9 293.8,370.2 C291.7,376.5 290.0,383.3 288.4,388.1 C286.7,392.9 284.7,397.1 283.9,398.9" stroke="#7e7e7e" stroke-width="1.35" fill="none"/>
<path d="M260.0,315.1 C259.6,317.2 256.7,323.1 257.5,327.7 C258.3,332.3 262.1,338.5 265.0,342.7 C268.0,346.9 273.4,351.1 275.1,352.8" stroke="#d2d2d2" stroke-width="0.90" fill="none"/>
<path d="M255.0,345.2 C256.7,346.9 262.5,350.3 265.0,355.3 C267.5,360.3 270.0,367.8 270.0,375.3 C270.0,382.9 265.9,396.2 265.0,400.4" stroke="#d2d2d2" stroke-width="0.90" fill="none"/>
<path d="M310.2,357.9 L325.2,347.9" stroke="#b4b4b4" stroke-width="1.05" fill="none"/>
<path d="M345.3,350.4 C347.0,351.7 352.0,355.4 355.4,357.9 C358.7,360.5 363.7,364.2 365.4,365.5" stroke="#b4b4b4" stroke-width="1.05" fill="none"/>
<path d="M302.7,363.0 C305.6,364.2 314.8,370.1 320.2,370.5 C325.7,370.9 332.8,366.3 335.3,365.5" stroke="#d2d2d2" stroke-width="1.05" fill="none"/>
<path d="M204.9,315.6 C207.7,319.4 213.3,338.1 221.7,338.4 C230.2,338.6 249.9,320.6 255.6,317.1" stroke="#8c8c8c" stroke-width="1.20" fill="none"/>
<path d="M202.9,320.1 L217.9,341.4" stroke="#d2d2d2" stroke-width="0.90" fill="none"/>
<path d="M175.3,315.1 C172.8,317.6 165.2,323.4 160.2,330.1 C155.2,336.8 148.9,347.7 145.2,355.2 C141.4,362.7 138.9,371.9 137.6,375.3" stroke="#d2d2d2" stroke-width="1.05" fill="none"/>
<path d="M180.3,332.6 C179.5,337.6 176.5,353.1 175.3,362.7 C174.0,372.4 173.2,385.7 172.8,390.3" stroke="#b4b4b4" stroke-width="1.05" fill="none"/>
<path d="M182.8,327.6 C182.0,333.0 179.0,350.2 177.8,360.2 C176.5,370.3 175.7,383.2 175.3,387.8" stroke="#d2d2d2" stroke-width="1.05" fill="none"/>
<path d="M131.4,310.0 C130.1,313.8 126.6,324.7 123.8,332.6 C121.1,340.6 116.7,351.0 115.1,357.7 C113.4,364.4 113.0,369.6 113.8,372.8 C114.6,375.9 117.4,377.0 120.1,376.5 C122.8,376.1 126.8,374.7 130.1,370.3 C133.5,365.9 136.8,357.7 140.2,350.2 C143.5,342.7 148.5,329.3 150.2,325.1" stroke="#8c8c8c" stroke-width="1.05" fill="none"/>
<path d="M260.6,325.1 C261.4,329.3 265.6,341.8 265.6,350.2 C265.6,358.6 262.3,368.6 260.6,375.3 C258.9,382.0 256.4,387.8 255.6,390.3" stroke="#d2d2d2" stroke-width="1.05" fill="none"/>
<path d="M182.8,391.6 C186.6,392.2 197.4,394.5 205.4,395.4 C213.3,396.2 223.4,397.4 230.5,396.6 C237.6,395.8 245.1,391.4 248.1,390.3" stroke="#b4b4b4" stroke-width="1.05" fill="none"/>
<path d="M182.8,391.6 C183.6,395.1 185.7,408.5 187.8,412.9 C189.9,417.3 190.3,416.7 195.4,417.9 C200.4,419.2 210.4,420.5 217.9,420.5 C225.5,420.5 235.1,419.2 240.5,417.9 C246.0,416.7 248.9,413.8 250.6,412.9" stroke="#b4b4b4" stroke-width="1.05" fill="none"/>
<path d="M263.1,323.8 C265.2,325.3 271.9,329.5 275.7,332.6 C279.4,335.8 283.0,343.5 285.7,342.7 C288.4,341.8 290.9,330.1 292.0,327.6" stroke="#8c8c8c" stroke-width="1.20" fill="none"/>
<path d="M285.7,343.9 C284.9,349.1 282.8,365.9 280.7,375.3 C278.6,384.7 275.2,395.6 273.1,400.4 C271.1,405.2 267.7,403.1 268.1,404.1 C268.5,405.2 272.7,408.1 275.7,406.6 C278.6,405.2 282.4,402.3 285.7,395.4 C289.0,388.5 294.1,370.3 295.7,365.2" stroke="#8c8c8c" stroke-width="1.20" fill="none"/>
<path d="M165.2,415.4 C162.7,418.8 153.5,431.4 150.2,435.5 C146.8,439.6 146.0,439.3 145.2,440.0" stroke="#d2d2d2" stroke-width="1.05" fill="none"/>
<path d="M175.3,410.4 C172.8,413.8 163.6,425.6 160.2,430.5 C156.9,435.4 156.0,438.4 155.2,440.0" stroke="#d2d2d2" stroke-width="1.05" fill="none"/>
<path d="M255.6,392.8 C254.7,397.4 251.8,412.6 250.6,420.5 C249.3,428.3 248.5,436.8 248.1,440.0" stroke="#d2d2d2" stroke-width="1.05" fill="none"/>
<path d="M260.6,395.4 C260.0,399.1 257.9,410.5 256.8,417.9 C255.8,425.4 254.7,436.3 254.3,440.0" stroke="#d2d2d2" stroke-width="1.05" fill="none"/>
<path d="M150.2,332.6 C152.7,333.5 164.0,333.5 165.2,337.6 C166.5,341.8 161.5,353.1 157.7,357.7 C154.0,362.3 145.2,364.0 142.7,365.2" stroke="#d2d2d2" stroke-width="0.90" fill="none"/>
<path d="M132.6,372.8 C135.5,373.2 143.9,375.7 150.2,375.3 C156.5,374.9 166.9,371.1 170.3,370.3" stroke="#d2d2d2" stroke-width="0.90" fill="none"/>
<path d="M305.2,362.6 C307.3,361.3 314.4,354.2 317.7,355.1 C321.1,355.9 322.3,363.0 325.2,367.6 C328.2,372.2 332.4,381.0 335.3,382.7 C338.2,384.3 342.8,380.2 342.8,377.6 C342.8,375.1 336.5,369.3 335.3,367.6" stroke="#b4b4b4" stroke-width="1.05" fill="none"/>
<path d="M335.3,382.7 C336.1,385.2 340.3,391.0 340.3,397.7 C340.3,404.4 336.1,418.6 335.3,422.8" stroke="#d2d2d2" stroke-width="1.05" fill="none"/>
<path d="M350.3,365.1 C352.8,365.5 361.2,364.7 365.4,367.6 C369.6,370.5 372.9,377.6 375.4,382.7 C377.9,387.7 379.6,395.2 380.5,397.7" stroke="#b4b4b4" stroke-width="1.05" fill="none"/>
<path d="M355.4,372.6 L342.8,394.0" stroke="#b4b4b4" stroke-width="1.05" fill="none"/>
<path d="M360.4,362.6 C363.3,365.1 374.2,373.0 377.9,377.6 C381.7,382.2 383.0,383.9 383.0,390.2 C383.0,396.5 380.0,406.9 377.9,415.3 C375.9,423.6 371.7,436.2 370.4,440.4" stroke="#d2d2d2" stroke-width="1.05" fill="none"/>
<path d="M297.6,420.3 C299.7,419.5 305.6,414.4 310.2,415.3 C314.8,416.1 319.8,422.4 325.2,425.3 C330.7,428.2 337.0,431.2 342.8,432.8 C348.7,434.5 357.4,434.9 360.4,435.4" stroke="#b4b4b4" stroke-width="1.05" fill="none"/>
<path d="M305.2,405.2 C306.0,407.8 307.7,414.4 310.2,420.3 C312.7,426.2 317.7,434.1 320.2,440.4 C322.7,446.6 324.4,455.0 325.2,457.9" stroke="#b4b4b4" stroke-width="1.05" fill="none"/>
<path d="M317.7,435.4 C320.6,434.9 329.0,433.1 335.3,432.8 C341.6,432.6 349.5,432.8 355.4,434.1 C361.2,435.4 367.9,439.3 370.4,440.4" stroke="#b4b4b4" stroke-width="1.05" fill="none"/>
<path d="M302.7,465.5 C306.0,464.6 316.0,461.7 322.7,460.5 C329.4,459.2 336.5,457.9 342.8,457.9 C349.1,457.9 357.4,460.0 360.4,460.5" stroke="#b4b4b4" stroke-width="1.05" fill="none"/>
<path d="M305.2,470.5 C308.5,469.7 318.1,468.2 325.2,465.5 C332.4,462.8 344.1,456.1 347.8,454.2" stroke="#d2d2d2" stroke-width="1.05" fill="none"/>
<path d="M275.1,415.3 C276.3,419.5 279.7,432.0 282.6,440.4 C285.5,448.7 290.1,458.9 292.6,465.5 C295.1,472.1 296.8,477.6 297.6,480.0" stroke="#d2d2d2" stroke-width="1.05" fill="none"/>
<path d="M380.5,397.7 C378.8,401.9 373.8,414.9 370.4,422.8 C367.1,430.8 362.9,439.5 360.4,445.4 C357.9,451.3 356.2,455.9 355.4,457.9" stroke="#d2d2d2" stroke-width="1.05" fill="none"/>
<path d="M297.6,422.8 C298.5,421.6 300.6,415.3 302.7,415.3 C304.8,415.3 309.8,420.7 310.2,422.8 C310.6,424.9 306.0,427.0 305.2,427.8 Z" stroke="#b4b4b4" stroke-width="1.05" fill="none"/>
<path d="M157.5,429.4 C160.0,432.8 167.5,444.1 172.5,450.0 C177.5,455.9 180.0,462.5 187.5,465.0 C195.0,467.5 207.5,466.2 217.5,465.0 C227.5,463.7 240.6,459.4 247.5,457.5 C254.4,455.6 256.9,454.4 258.7,453.7" stroke="#b4b4b4" stroke-width="1.05" fill="none"/>
<path d="M157.5,431.2 C150.6,438.7 130.6,461.2 116.2,476.2 C101.9,491.2 78.7,513.7 71.2,521.2" stroke="#d2d2d2" stroke-width="1.05" fill="none"/>
<path d="M163.1,436.9 C156.6,444.1 137.2,465.3 123.7,480.0 C110.3,494.7 89.4,517.5 82.5,525.0" stroke="#d2d2d2" stroke-width="0.90" fill="none"/>
<path d="M183.7,465.0 C175.6,472.5 147.5,498.1 135.0,510.0 C122.5,521.9 113.1,531.9 108.7,536.2" stroke="#d2d2d2" stroke-width="1.05" fill="none"/>
<path d="M191.2,468.7 C190.0,476.2 186.9,498.9 183.7,513.7 C180.6,528.6 174.4,550.6 172.5,558.0" stroke="#d2d2d2" stroke-width="1.05" fill="none"/>
<path d="M247.5,461.2 C244.4,468.7 235.0,490.1 228.7,506.2 C222.5,522.4 213.1,549.4 210.0,558.0" stroke="#d2d2d2" stroke-width="1.05" fill="none"/>
<path d="M258.7,420.0 C258.1,425.6 258.1,438.1 255.0,453.7 C251.9,469.4 245.0,496.4 240.0,513.7 C235.0,531.1 227.5,550.6 225.0,558.0" stroke="#d2d2d2" stroke-width="1.05" fill="none"/>
<path d="M273.7,465.0 C272.2,468.7 263.7,481.2 264.4,487.5 C265.0,493.7 270.3,498.1 277.5,502.5 C284.7,506.9 300.0,518.1 307.5,513.7 C315.0,509.4 320.0,482.5 322.5,476.2" stroke="#b4b4b4" stroke-width="1.05" fill="none"/>
<path d="M281.2,465.0 C279.4,470.0 274.4,483.7 270.0,495.0 C265.6,506.2 259.4,522.0 255.0,532.5 C250.6,543.0 245.6,553.7 243.7,558.0" stroke="#d2d2d2" stroke-width="1.05" fill="none"/>
<path d="M307.5,513.7 C306.2,516.9 303.7,525.1 300.0,532.5 C296.2,539.9 287.5,553.7 285.0,558.0" stroke="#d2d2d2" stroke-width="1.05" fill="none"/>
<path d="M322.5,476.2 C321.9,482.5 321.2,502.5 318.7,513.7 C316.2,525.0 309.4,538.7 307.5,543.7" stroke="#d2d2d2" stroke-width="1.05" fill="none"/>
<path d="M285.0,442.5 C288.7,445.0 298.7,455.6 307.5,457.5 C316.2,459.4 328.7,455.0 337.5,453.7 C346.2,452.5 356.2,450.6 360.0,450.0" stroke="#b4b4b4" stroke-width="1.05" fill="none"/>
<path d="M303.7,468.7 C308.1,467.5 321.2,465.6 330.0,461.2 C338.7,456.9 351.9,445.6 356.2,442.5" stroke="#b4b4b4" stroke-width="1.05" fill="none"/>
<path d="M318.7,420.0 C319.4,423.7 323.1,435.0 322.5,442.5 C321.9,450.0 316.2,461.2 315.0,465.0" stroke="#d2d2d2" stroke-width="1.05" fill="none"/>
</g>
<path d="M642.2,63.8 L638.4,65.2 L669,139 M694,137 L745.8,115 L724.4,63" fill="none" stroke="#e8362c" stroke-width="0.9" />
</g>
<path d="M650.0,149.2 L668.2,143.20000000000002 L668.2,149.2 Z" fill="#2a2a2a" stroke="none" stroke-width="1" />
<rect x="647.40" y="139.20" width="2.20" height="13.60" fill="#8e8e8e" stroke="none" stroke-width="1" rx="0.7" />
<path d="M655.2,165 L668.2,159.0 L668.2,165 Z" fill="#2a2a2a" stroke="none" stroke-width="1" />
<rect x="652.60" y="155.00" width="2.20" height="13.60" fill="#8e8e8e" stroke="none" stroke-width="1" rx="0.7" />
<circle cx="682.90" cy="147.20" r="4.90" fill="none" stroke="#cfcfcf" stroke-width="0.8" />
<circle cx="701.50" cy="147.20" r="4.90" fill="none" stroke="#cfcfcf" stroke-width="0.8" />
<circle cx="720.10" cy="147.20" r="4.90" fill="none" stroke="#cfcfcf" stroke-width="0.8" />
<line x1="680.40" y1="147.20" x2="685.40" y2="147.20" stroke="#cfcfcf" stroke-width="0.8" />
<path d="M699,147.2 H704 M701.5,144.7 V149.7" fill="none" stroke="#cfcfcf" stroke-width="0.8" />
<rect x="718.10" y="145.20" width="4.00" height="4.00" fill="#cfcfcf" stroke="none" stroke-width="1" rx="0" />
<line x1="731.40" y1="141.40" x2="731.40" y2="168.00" stroke="#6a6a6a" stroke-width="0.7" />
<rect x="737.80" y="143.40" width="4.40" height="4.40" fill="none" stroke="#cfcfcf" stroke-width="0.8" rx="0" />
<rect x="741.20" y="146.80" width="4.40" height="4.40" fill="none" stroke="#cfcfcf" stroke-width="0.8" rx="0" />
<path d="M739,148.6 L740.4,150 M743,145.4 L744.4,144" fill="none" stroke="#cfcfcf" stroke-width="0.7" />
<rect x="756.20" y="143.20" width="8.00" height="8.00" fill="none" stroke="#cfcfcf" stroke-width="0.8" rx="0" />
<path d="M758,145 L762.4,149.4 M758,147 V145 H760 M762.4,147.4 V149.4 H760.4" fill="none" stroke="#cfcfcf" stroke-width="0.7" />
<path d="M680.4,166.6 A4.6,4.6 0 1 0 679.2,160.2" fill="none" stroke="#cfcfcf" stroke-width="0.9" />
<path d="M677.6,158.6 L679.4,161.8 L682,159.6 Z" fill="#cfcfcf" stroke="none" stroke-width="1" />
<path d="M704,166.6 A4.6,4.6 0 1 1 705.2,160.2" fill="none" stroke="#cfcfcf" stroke-width="0.9" />
<path d="M706.8,158.6 L705,161.8 L702.4,159.6 Z" fill="#cfcfcf" stroke="none" stroke-width="1" />
<circle cx="720.10" cy="162.60" r="4.60" fill="none" stroke="#cfcfcf" stroke-width="0.8" />
<path d="M720.1,162.6 V158.6" fill="none" stroke="#cfcfcf" stroke-width="0.9" />
<circle cx="720.10" cy="162.60" r="0.80" fill="#cfcfcf" stroke="none" stroke-width="1" />
<path d="M736.4,159 V166.2 L740,162.6 Z M746.8,159 V166.2 L743.2,162.6 Z" fill="#cfcfcf" stroke="none" stroke-width="1" />
<line x1="741.60" y1="157.60" x2="741.60" y2="167.60" stroke="#cfcfcf" stroke-width="0.7" />
<path d="M756.6,157.4 H763.8 L760.2,161 Z M756.6,168 H763.8 L760.2,164.4 Z" fill="#cfcfcf" stroke="none" stroke-width="1" />
<line x1="755.00" y1="162.70" x2="765.40" y2="162.70" stroke="#cfcfcf" stroke-width="0.7" />
<line x1="634.00" y1="178.70" x2="638.60" y2="178.70" stroke="#8a8a8a" stroke-width="0.8" />
<line x1="634.00" y1="180.50" x2="638.60" y2="180.50" stroke="#8a8a8a" stroke-width="0.8" />
<line x1="634.00" y1="182.30" x2="638.60" y2="182.30" stroke="#8a8a8a" stroke-width="0.8" />
<path d="M649,181.6 L653.6,179.4 L658.2,181.6 L653.6,183.8 Z" fill="none" stroke="#d0d0d0" stroke-width="0.8" />
<path d="M649,183.79999999999998 L653.6,181.6 L658.2,183.79999999999998 L653.6,186.0 Z" fill="none" stroke="#d0d0d0" stroke-width="0.8" />
<path d="M649,186.0 L653.6,183.8 L658.2,186.0 L653.6,188.20000000000002 Z" fill="none" stroke="#d0d0d0" stroke-width="0.8" />
<line x1="632.60" y1="196.60" x2="634.60" y2="196.60" stroke="#8a8a8a" stroke-width="0.6" />
<line x1="650.40" y1="196.60" x2="762.60" y2="196.60" stroke="#8a8a8a" stroke-width="0.6" />
<rect x="695.00" y="202.00" width="67.60" height="15.20" fill="#5c5c5c" stroke="none" stroke-width="1" rx="2" />
<circle cx="702.00" cy="209.50" r="3.80" fill="none" stroke="#cfcfcf" stroke-width="0.9" />
<circle cx="715.40" cy="208.60" r="3.20" fill="#e0e0e0" stroke="none" stroke-width="1" />
<circle cx="717.60" cy="210.60" r="3.20" fill="#8a8a8a" stroke="#d0d0d0" stroke-width="0.6" />
<circle cx="728.40" cy="206.50" r="0.62" fill="#cfcfcf" stroke="none" stroke-width="1" />
<circle cx="728.40" cy="208.50" r="0.62" fill="#cfcfcf" stroke="none" stroke-width="1" />
<circle cx="728.40" cy="210.50" r="0.62" fill="#cfcfcf" stroke="none" stroke-width="1" />
<circle cx="728.40" cy="212.50" r="0.62" fill="#cfcfcf" stroke="none" stroke-width="1" />
<circle cx="730.40" cy="206.50" r="0.62" fill="#cfcfcf" stroke="none" stroke-width="1" />
<circle cx="730.40" cy="208.50" r="0.62" fill="#cfcfcf" stroke="none" stroke-width="1" />
<circle cx="730.40" cy="210.50" r="0.62" fill="#cfcfcf" stroke="none" stroke-width="1" />
<circle cx="730.40" cy="212.50" r="0.62" fill="#cfcfcf" stroke="none" stroke-width="1" />
<circle cx="732.40" cy="206.50" r="0.62" fill="#cfcfcf" stroke="none" stroke-width="1" />
<circle cx="732.40" cy="208.50" r="0.62" fill="#cfcfcf" stroke="none" stroke-width="1" />
<circle cx="732.40" cy="210.50" r="0.62" fill="#cfcfcf" stroke="none" stroke-width="1" />
<circle cx="732.40" cy="212.50" r="0.62" fill="#cfcfcf" stroke="none" stroke-width="1" />
<circle cx="734.40" cy="206.50" r="0.62" fill="#cfcfcf" stroke="none" stroke-width="1" />
<circle cx="734.40" cy="208.50" r="0.62" fill="#cfcfcf" stroke="none" stroke-width="1" />
<circle cx="734.40" cy="210.50" r="0.62" fill="#cfcfcf" stroke="none" stroke-width="1" />
<circle cx="734.40" cy="212.50" r="0.62" fill="#cfcfcf" stroke="none" stroke-width="1" />
<rect x="742.00" y="205.60" width="6.00" height="6.00" fill="none" stroke="#cfcfcf" stroke-width="0.8" rx="0" />
<rect x="743.80" y="207.40" width="6.00" height="6.00" fill="#a0a0a0" stroke="#cfcfcf" stroke-width="0.6" rx="0" />
<path d="M755.70,207.90 L758.00,205.50 L760.30,207.90" fill="none" stroke="#cfcfcf" stroke-width="0.8" />
<path d="M755.70,211.10 L758.00,213.50 L760.30,211.10" fill="none" stroke="#cfcfcf" stroke-width="0.8" />
<line x1="632.60" y1="224.20" x2="634.60" y2="224.20" stroke="#8a8a8a" stroke-width="0.6" />
<line x1="657.30" y1="224.20" x2="762.60" y2="224.20" stroke="#8a8a8a" stroke-width="0.6" />
<rect x="640.60" y="231.60" width="87.80" height="14.60" fill="#5f5f5f" stroke="none" stroke-width="1" rx="2" />
<circle cx="667.60" cy="237.60" r="2.80" fill="#e8605c" stroke="none" stroke-width="1" />
<circle cx="669.80" cy="240.60" r="2.80" fill="#5c80e8" stroke="none" stroke-width="1" />
<circle cx="665.40" cy="240.60" r="2.80" fill="#52c45a" stroke="none" stroke-width="1" />
<circle cx="667.60" cy="239.60" r="1.10" fill="#e8e8e8" stroke="none" stroke-width="1" />
<path d="M720.30,237.40 L722.60,235.00 L724.90,237.40" fill="none" stroke="#cfcfcf" stroke-width="0.8" />
<path d="M720.30,240.60 L722.60,243.00 L724.90,240.60" fill="none" stroke="#cfcfcf" stroke-width="0.8" />
<line x1="634.00" y1="256.70" x2="638.60" y2="256.70" stroke="#8a8a8a" stroke-width="0.8" />
<line x1="634.00" y1="258.50" x2="638.60" y2="258.50" stroke="#8a8a8a" stroke-width="0.8" />
<line x1="634.00" y1="260.30" x2="638.60" y2="260.30" stroke="#8a8a8a" stroke-width="0.8" />
<path d="M648.8,259.2 L653.4,257.0 L658.0,259.2 L653.4,261.4 Z" fill="none" stroke="#d0d0d0" stroke-width="0.8" />
<path d="M648.8,261.4 L653.4,259.2 L658.0,261.4 L653.4,263.59999999999997 Z" fill="none" stroke="#d0d0d0" stroke-width="0.8" />
<path d="M648.8,263.59999999999997 L653.4,261.4 L658.0,263.59999999999997 L653.4,265.79999999999995 Z" fill="none" stroke="#d0d0d0" stroke-width="0.8" />
<path d="M699,264 A2.6,2.6 0 0 1 700,259.2 A3,3 0 0 1 705.6,259.2 A2.6,2.6 0 0 1 706.8,264" fill="none" stroke="#707070" stroke-width="0.8" />
<rect x="629.80" y="268.00" width="25.20" height="16.60" fill="#696969" stroke="none" stroke-width="1" rx="2" />
<rect x="633.00" y="270.60" width="10.40" height="10.60" fill="none" stroke="#cfcfcf" stroke-width="0.9" rx="1" />
<path d="M647.30,274.60 L649.60,272.20 L651.90,274.60" fill="none" stroke="#cfcfcf" stroke-width="0.8" />
<path d="M647.30,277.80 L649.60,280.20 L651.90,277.80" fill="none" stroke="#cfcfcf" stroke-width="0.8" />
<rect x="657.40" y="268.00" width="40.60" height="16.60" fill="#696969" stroke="none" stroke-width="1" rx="2" />
<path d="M690.70,274.60 L693.00,272.20 L695.30,274.60" fill="none" stroke="#cfcfcf" stroke-width="0.8" />
<path d="M690.70,277.80 L693.00,280.20 L695.30,277.80" fill="none" stroke="#cfcfcf" stroke-width="0.8" />
<rect x="704.60" y="273.60" width="2.20" height="1.60" fill="#aaa" stroke="none" stroke-width="1" rx="0" />
<rect x="706.80" y="275.20" width="2.20" height="1.60" fill="#aaa" stroke="none" stroke-width="1" rx="0" />
<rect x="711.20" y="269.40" width="2.60" height="11.60" fill="#a0a0a0" stroke="none" stroke-width="1" rx="0.6" />
<path d="M762.10,274.60 L764.40,272.20 L766.70,274.60" fill="none" stroke="#cfcfcf" stroke-width="0.8" />
<path d="M762.10,277.80 L764.40,280.20 L766.70,277.80" fill="none" stroke="#cfcfcf" stroke-width="0.8" />
<rect x="637.60" y="289.40" width="5.40" height="5.40" fill="none" stroke="#d4d4d4" stroke-width="0.8" rx="0.8" />
<rect x="639.60" y="291.20" width="5.60" height="5.60" fill="#d4d4d4" stroke="#d4d4d4" stroke-width="0.6" rx="0.8" />
<path d="M657.4,290.4 H662 M659.7,288.6 V297.4 M658,297.4 H661.4 M658.4,292 H661 L661.6,297 H657.8 Z" fill="none" stroke="#d4d4d4" stroke-width="0.9" />
<path d="M655.4,290.6 H657 M662.4,290.6 H664" fill="none" stroke="#d4d4d4" stroke-width="0.7" />
<path d="M676,288.6 H679.6 V292 M676,288.6 V296 H677.6" fill="none" stroke="#d4d4d4" stroke-width="0.8" />
<path d="M679,297.6 L680.4,293.4 L682.6,295.4 Z" fill="#d4d4d4" stroke="none" stroke-width="1" />
<path d="M680,292 l1.6,-1.8 l1.6,1.4 l-1.6,1.8" fill="#d4d4d4" stroke="none" stroke-width="1" />
<rect x="694.00" y="292.40" width="6.60" height="5.00" fill="#d4d4d4" stroke="none" stroke-width="1" rx="0.6" />
<path d="M695.4,292.4 V290.6 A1.9,1.9 0 0 1 699.2,290.6 V292.4" fill="none" stroke="#d4d4d4" stroke-width="0.9" />
<rect x="712.40" y="292.80" width="5.00" height="4.00" fill="#d4d4d4" stroke="none" stroke-width="1" rx="0.5" />
<path d="M713.4,292.8 V291.4 A1.5,1.5 0 0 1 716.4,291.4 V292.8" fill="none" stroke="#d4d4d4" stroke-width="0.8" />
<rect x="717.40" y="288.40" width="2.40" height="2.40" fill="#d4d4d4" stroke="none" stroke-width="1" rx="0" />
<rect x="719.80" y="290.80" width="2.40" height="2.40" fill="#d4d4d4" stroke="none" stroke-width="1" rx="0" />
<rect x="717.40" y="293.20" width="2.40" height="2.40" fill="#d4d4d4" stroke="none" stroke-width="1" rx="0" />
<rect x="719.80" y="295.60" width="2.40" height="2.40" fill="#d4d4d4" stroke="none" stroke-width="1" rx="0" />
<rect x="715.00" y="288.40" width="2.40" height="2.40" fill="#d4d4d4" stroke="none" stroke-width="1" rx="0" />
<rect x="730.60" y="289.20" width="7.00" height="7.00" fill="none" stroke="#767676" stroke-width="0.8" rx="0" />
<circle cx="735.60" cy="294.20" r="3.00" fill="#595959" stroke="#767676" stroke-width="0.8" />
<path d="M741.10,291.60 L743.40,289.20 L745.70,291.60" fill="none" stroke="#767676" stroke-width="0.8" />
<path d="M741.10,294.80 L743.40,297.20 L745.70,294.80" fill="none" stroke="#767676" stroke-width="0.8" />
<path d="M752.4,289.2 H759.6 V296.4 H752.4 Z" fill="none" stroke="#767676" stroke-width="0.8" />
<path d="M752.4,296.4 L759.6,289.2 V296.4 Z" fill="#767676" stroke="none" stroke-width="1" />
<path d="M762.70,291.60 L765.00,289.20 L767.30,291.60" fill="none" stroke="#767676" stroke-width="0.8" />
<path d="M762.70,294.80 L765.00,297.20 L767.30,294.80" fill="none" stroke="#767676" stroke-width="0.8" />
<path d="M643.6,307 H652 V313 M643.6,307 V315.4 H650" fill="none" stroke="#d4d4d4" stroke-width="0.9" />
<circle cx="652.00" cy="315.40" r="2.00" fill="#595959" stroke="#d4d4d4" stroke-width="0.7" />
<path d="M650.9,315.4 H653.1 M652,314.29999999999995 V316.5" fill="none" stroke="#d4d4d4" stroke-width="0.6" />
<rect x="662.20" y="307.00" width="8.40" height="8.40" fill="none" stroke="#d4d4d4" stroke-width="0.9" rx="1" />
<path d="M668,309.4 C665,308.6 663.6,311 665,312.6 C666.4,313.8 668.4,312.6 667.6,311.2 C667,310.4 665.8,310.8 666,311.6" fill="none" stroke="#d4d4d4" stroke-width="0.6" />
<circle cx="670.80" cy="315.60" r="2.00" fill="#595959" stroke="#d4d4d4" stroke-width="0.7" />
<path d="M669.6999999999999,315.6 H671.9 M670.8,314.5 V316.70000000000005" fill="none" stroke="#d4d4d4" stroke-width="0.6" />
<path d="M680.6,315 V307.6 H684 L685,308.8 H689.6 V315 Z" fill="#d4d4d4" stroke="none" stroke-width="1" />
<circle cx="690.00" cy="315.60" r="2.00" fill="#595959" stroke="#d4d4d4" stroke-width="0.7" />
<path d="M688.9,315.6 H691.1 M690,314.5 V316.70000000000005" fill="none" stroke="#d4d4d4" stroke-width="0.6" />
<rect x="700.60" y="310.20" width="5.40" height="5.40" fill="none" stroke="#767676" stroke-width="0.8" rx="0" />
<rect x="703.40" y="307.40" width="5.40" height="5.40" fill="none" stroke="#767676" stroke-width="0.8" rx="0" />
<rect x="718.80" y="310.20" width="5.40" height="5.40" fill="none" stroke="#767676" stroke-width="0.8" rx="0" />
<rect x="721.60" y="307.40" width="5.40" height="5.40" fill="none" stroke="#767676" stroke-width="0.8" rx="0" />
<rect x="737.20" y="307.20" width="8.80" height="8.80" fill="#e4e4e4" stroke="none" stroke-width="1" rx="0.8" />
<circle cx="741.60" cy="311.60" r="2.70" fill="#4a4a4a" stroke="none" stroke-width="1" />
<path d="M757.0,308.8 H763.4000000000001 M759.0,308.8 V307.6 H761.4000000000001 V308.8 M757.6,308.8 L758.0,316.2 H762.4000000000001 L762.8000000000001,308.8 M759.3000000000001,310.40000000000003 V314.6 M761.1,310.40000000000003 V314.6" fill="none" stroke="#d4d4d4" stroke-width="0.8" />
<pattern id="chk" width="4.2" height="4.2" patternUnits="userSpaceOnUse"><rect width="4.2" height="4.2" fill="#fff"/><rect width="2.1" height="2.1" fill="#d2d2d2"/><rect x="2.1" y="2.1" width="2.1" height="2.1" fill="#d2d2d2"/></pattern>
<path d="M632.0,335.1 C633.8,331.90000000000003 639.0,331.90000000000003 640.8,335.1 C639.0,337.70000000000005 633.8,337.70000000000005 632.0,335.1 Z" fill="#e4e4e4" stroke="none" stroke-width="1" />
<circle cx="636.40" cy="334.90" r="1.70" fill="#424242" stroke="none" stroke-width="1" />
<circle cx="636.40" cy="334.90" r="0.80" fill="#e4e4e4" stroke="none" stroke-width="1" />
<rect x="650.20" y="331.90" width="6.20" height="6.20" fill="none" stroke="#5f5f5f" stroke-width="0.8" rx="0.6" />
<rect x="665.60" y="324.40" width="16.80" height="21.20" fill="url(#chk)" stroke="none" stroke-width="0.8" rx="0" />
<line x1="755.40" y1="333.50" x2="761.80" y2="333.50" stroke="#2c2c2c" stroke-width="0.8" />
<line x1="755.40" y1="335.10" x2="761.80" y2="335.10" stroke="#2c2c2c" stroke-width="0.8" />
<line x1="755.40" y1="336.70" x2="761.80" y2="336.70" stroke="#2c2c2c" stroke-width="0.8" />
<rect x="633.40" y="358.90" width="6.20" height="6.20" fill="none" stroke="#5a5a5a" stroke-width="0.8" rx="0.6" />
<rect x="650.20" y="358.90" width="6.20" height="6.20" fill="none" stroke="#5f5f5f" stroke-width="0.8" rx="0.6" />
<rect x="665.60" y="351.00" width="16.80" height="22.00" fill="url(#chk)" stroke="none" stroke-width="0.8" rx="0" />
<line x1="755.40" y1="360.50" x2="761.80" y2="360.50" stroke="#2c2c2c" stroke-width="0.8" />
<line x1="755.40" y1="362.10" x2="761.80" y2="362.10" stroke="#2c2c2c" stroke-width="0.8" />
<line x1="755.40" y1="363.70" x2="761.80" y2="363.70" stroke="#2c2c2c" stroke-width="0.8" />
<path d="M632.0,389.55 C633.8,386.35 639.0,386.35 640.8,389.55 C639.0,392.15000000000003 633.8,392.15000000000003 632.0,389.55 Z" fill="#e4e4e4" stroke="none" stroke-width="1" />
<circle cx="636.40" cy="389.35" r="1.70" fill="#424242" stroke="none" stroke-width="1" />
<circle cx="636.40" cy="389.35" r="0.80" fill="#e4e4e4" stroke="none" stroke-width="1" />
<rect x="650.20" y="386.35" width="6.20" height="6.20" fill="none" stroke="#5f5f5f" stroke-width="0.8" rx="0.6" />
<rect x="665.60" y="378.40" width="16.80" height="22.10" fill="url(#chk)" stroke="none" stroke-width="0.8" rx="0" />
<line x1="755.40" y1="387.95" x2="761.80" y2="387.95" stroke="#2c2c2c" stroke-width="0.8" />
<line x1="755.40" y1="389.55" x2="761.80" y2="389.55" stroke="#2c2c2c" stroke-width="0.8" />
<line x1="755.40" y1="391.15" x2="761.80" y2="391.15" stroke="#2c2c2c" stroke-width="0.8" />
<path d="M632.0,417.15 C633.8,413.95 639.0,413.95 640.8,417.15 C639.0,419.75 633.8,419.75 632.0,417.15 Z" fill="#e4e4e4" stroke="none" stroke-width="1" />
<circle cx="636.40" cy="416.95" r="1.70" fill="#424242" stroke="none" stroke-width="1" />
<circle cx="636.40" cy="416.95" r="0.80" fill="#e4e4e4" stroke="none" stroke-width="1" />
<rect x="650.20" y="413.95" width="6.20" height="6.20" fill="none" stroke="#5f5f5f" stroke-width="0.8" rx="0.6" />
<rect x="665.60" y="405.90" width="16.80" height="22.30" fill="url(#chk)" stroke="none" stroke-width="0.8" rx="0" />
<line x1="755.40" y1="415.55" x2="761.80" y2="415.55" stroke="#2c2c2c" stroke-width="0.8" />
<line x1="755.40" y1="417.15" x2="761.80" y2="417.15" stroke="#2c2c2c" stroke-width="0.8" />
<line x1="755.40" y1="418.75" x2="761.80" y2="418.75" stroke="#2c2c2c" stroke-width="0.8" />
<path d="M632.0,444.6 C633.8,441.40000000000003 639.0,441.40000000000003 640.8,444.6 C639.0,447.20000000000005 633.8,447.20000000000005 632.0,444.6 Z" fill="#e4e4e4" stroke="none" stroke-width="1" />
<circle cx="636.40" cy="444.40" r="1.70" fill="#424242" stroke="none" stroke-width="1" />
<circle cx="636.40" cy="444.40" r="0.80" fill="#e4e4e4" stroke="none" stroke-width="1" />
<path d="M647.4,447.8 L655,440.20000000000005" fill="none" stroke="#e4e4e4" stroke-width="1" />
<line x1="647.00" y1="449.20" x2="656.40" y2="449.20" stroke="#e4e4e4" stroke-width="0.8" />
<rect x="665.60" y="433.60" width="16.80" height="21.80" fill="url(#chk)" stroke="#c8d0e8" stroke-width="0.8" rx="0" />
<line x1="755.40" y1="443.00" x2="761.80" y2="443.00" stroke="#2a2d3a" stroke-width="0.8" />
<line x1="755.40" y1="444.60" x2="761.80" y2="444.60" stroke="#2a2d3a" stroke-width="0.8" />
<line x1="755.40" y1="446.20" x2="761.80" y2="446.20" stroke="#2a2d3a" stroke-width="0.8" />
<rect x="633.40" y="468.70" width="6.20" height="6.20" fill="none" stroke="#5a5a5a" stroke-width="0.8" rx="0.6" />
<rect x="650.20" y="468.70" width="6.20" height="6.20" fill="none" stroke="#5f5f5f" stroke-width="0.8" rx="0.6" />
<rect x="665.60" y="460.80" width="16.80" height="22.00" fill="url(#chk)" stroke="none" stroke-width="0.8" rx="0" />
<line x1="755.40" y1="470.30" x2="761.80" y2="470.30" stroke="#2c2c2c" stroke-width="0.8" />
<line x1="755.40" y1="471.90" x2="761.80" y2="471.90" stroke="#2c2c2c" stroke-width="0.8" />
<line x1="755.40" y1="473.50" x2="761.80" y2="473.50" stroke="#2c2c2c" stroke-width="0.8" />
<path d="M632.0,499.3 C633.8,496.1 639.0,496.1 640.8,499.3 C639.0,501.90000000000003 633.8,501.90000000000003 632.0,499.3 Z" fill="#e4e4e4" stroke="none" stroke-width="1" />
<circle cx="636.40" cy="499.10" r="1.70" fill="#424242" stroke="none" stroke-width="1" />
<circle cx="636.40" cy="499.10" r="0.80" fill="#e4e4e4" stroke="none" stroke-width="1" />
<rect x="650.20" y="496.10" width="6.20" height="6.20" fill="none" stroke="#5f5f5f" stroke-width="0.8" rx="0.6" />
<rect x="666.00" y="488.80" width="16.40" height="21.00" fill="#ffffff" stroke="none" stroke-width="1" rx="0" />
<rect x="692.00" y="489.00" width="9.60" height="11.00" fill="#f0f0f0" stroke="none" stroke-width="1" rx="1" />
<path d="M694,491 H699.6 V498 H695.6 L694,496.4 Z" fill="#f0f0f0" stroke="#333" stroke-width="0.8" />
<line x1="755.40" y1="497.70" x2="761.80" y2="497.70" stroke="#2c2c2c" stroke-width="0.8" />
<line x1="755.40" y1="499.30" x2="761.80" y2="499.30" stroke="#2c2c2c" stroke-width="0.8" />
<line x1="755.40" y1="500.90" x2="761.80" y2="500.90" stroke="#2c2c2c" stroke-width="0.8" />
<line x1="645.30" y1="321.80" x2="645.30" y2="513.00" stroke="#343434" stroke-width="0.8" />
<line x1="661.60" y1="321.80" x2="661.60" y2="513.00" stroke="#343434" stroke-width="0.8" />
<path d="M668,413 a1.6,1.6 0 1 1 2,1.6" fill="none" stroke="#777" stroke-width="0.6" />
<rect x="671.00" y="438.00" width="8.00" height="9.00" fill="#c8eef4" stroke="none" stroke-width="0" rx="0" opacity="0.55"/>
<path d="M667.0,462 q1.5,8 -0.6,17" fill="none" stroke="#7a8a5a" stroke-width="0.6" />
<path d="M669.2,463 q1.5,8 -0.6,14" fill="none" stroke="#5a9a4a" stroke-width="0.6" />
<path d="M671.4,464 q1.5,8 -0.6,17" fill="none" stroke="#7a8a5a" stroke-width="0.6" />
<path d="M673.6,462 q1.5,8 -0.6,14" fill="none" stroke="#5a9a4a" stroke-width="0.6" />
<path d="M675.8,463 q1.5,8 -0.6,17" fill="none" stroke="#7a8a5a" stroke-width="0.6" />
<path d="M678.0,464 q1.5,8 -0.6,14" fill="none" stroke="#5a9a4a" stroke-width="0.6" />
<path d="M680.2,462 q1.5,8 -0.6,17" fill="none" stroke="#7a8a5a" stroke-width="0.6" />
<circle cx="785.40" cy="59.50" r="5.20" fill="none" stroke="#e0e0e0" stroke-width="1.1" />
<path d="M783.4,57.4 L790.6,64.6" fill="none" stroke="#e0e0e0" stroke-width="1.2" />
<path d="M783,57 H786.4 L783,60.4 Z" fill="#e0e0e0" stroke="#e0e0e0" stroke-width="0.5" />
<path d="M779.8,87.4 V77.8 H783.6 L784.8,79 H791.2 V87.4 Z" fill="none" stroke="#e0e0e0" stroke-width="1" />
<path d="M785.5,80.4 V83.4" fill="none" stroke="#e0e0e0" stroke-width="1.4" />
<path d="M783.4,82.8 H787.6 L785.5,85 Z" fill="#e0e0e0" stroke="none" stroke-width="1" />
<line x1="783.00" y1="86.00" x2="788.00" y2="86.00" stroke="#aaa" stroke-width="0.7" />
<rect x="294.40" y="549.40" width="210.60" height="4.20" fill="#f2f2f2" stroke="none" stroke-width="1" rx="2.1" />
<clipPath id="hb"><path d="M0,0 H334 L329,558 H0 Z"/></clipPath>
<rect x="294.40" y="549.40" width="210.60" height="4.20" fill="#bcbcbc" stroke="none" stroke-width="1" rx="2.1" clip-path="url(#hb)"/>
</svg>
<div id="tx" style="left:0;top:0;width:800px;height:558px;will-change:transform;">
<span style="left:10.80px;top:2.37px;font-size:8.3px;line-height:12.45px;color:#e4e4e4;font-weight:bold;">12:50</span>
<span style="left:40.00px;top:2.53px;font-size:8.1px;line-height:12.15px;color:#e4e4e4;font-weight:bold;">5月22日(土)</span>
<span style="left:753.00px;top:2.37px;font-size:8.3px;line-height:12.45px;color:#e4e4e4;font-weight:bold;">43%</span>
<span style="left:38.00px;top:18.11px;font-size:8.25px;line-height:12.38px;color:#d6d6d6;">ファイル</span>
<span style="left:82.00px;top:18.11px;font-size:8.25px;line-height:12.38px;color:#d6d6d6;">編集</span>
<span style="left:109.50px;top:18.11px;font-size:8.25px;line-height:12.38px;color:#d6d6d6;">ページ管理</span>
<span style="left:161.00px;top:18.11px;font-size:8.25px;line-height:12.38px;color:#d6d6d6;">アニメーション</span>
<span style="left:230.00px;top:18.11px;font-size:8.25px;line-height:12.38px;color:#d6d6d6;">レイヤー</span>
<span style="left:273.00px;top:18.11px;font-size:8.25px;line-height:12.38px;color:#d6d6d6;">選択範囲</span>
<span style="left:317.00px;top:18.11px;font-size:8.25px;line-height:12.38px;color:#d6d6d6;">表示</span>
<span style="left:344.50px;top:18.11px;font-size:8.25px;line-height:12.38px;color:#d6d6d6;">フィルター</span>
<span style="left:394.00px;top:18.11px;font-size:8.25px;line-height:12.38px;color:#d6d6d6;">ウィンドウ</span>
<span style="left:447.50px;top:18.11px;font-size:8.25px;line-height:12.38px;color:#d6d6d6;">ヘルプ</span>
<span style="left:318.90px;width:200px;text-align:center;top:36.90px;font-size:8px;line-height:12.00px;color:#c6c6c6;font-weight:bold;">?</span>
<span style="left:4.40px;top:54.55px;font-size:9px;line-height:13.50px;color:#e0e2ec;">×</span>
<span style="left:13.40px;top:54.55px;font-size:7.4px;line-height:11.10px;color:#e4e6f0;">イラスト19 (A4 2894 x 4093px 350dpi 29.0%)</span>
<span style="left:365.40px;width:200px;text-align:center;top:454.57px;font-size:15.5px;line-height:23.25px;color:#cfcfcf;">A</span>
<span style="left:517.20px;top:52.15px;font-size:6.6px;line-height:9.90px;color:#d0d0d0;">サブツール[鉛筆]</span>
<span style="left:500.90px;top:67.93px;font-size:6.9px;line-height:10.35px;color:#c8cbda;overflow:hidden;max-width:28.2px;">線画用ペ</span>
<span style="left:547.90px;top:67.93px;font-size:6.9px;line-height:10.35px;color:#d4d4d4;overflow:hidden;max-width:29.0px;">丸ペン</span>
<span style="left:595.90px;top:67.93px;font-size:6.9px;line-height:10.35px;color:#d4d4d4;overflow:hidden;max-width:29.2px;">ペン</span>
<span style="left:500.90px;top:84.73px;font-size:6.9px;line-height:10.35px;color:#d4d4d4;overflow:hidden;max-width:28.2px;">鉛筆</span>
<span style="left:547.90px;top:84.73px;font-size:6.9px;line-height:10.35px;color:#d4d4d4;overflow:hidden;max-width:29.0px;">パステル</span>
<span style="left:595.90px;top:84.73px;font-size:6.9px;line-height:10.35px;color:#d4d4d4;overflow:hidden;max-width:29.2px;">オーロラ</span>
<span style="right:179.60px;top:105.38px;font-size:6.9px;line-height:10.35px;color:#dcdcdc;">ぼてじわ線画</span>
<span style="right:179.60px;top:122.08px;font-size:6.9px;line-height:10.35px;color:#dcdcdc;">さらペン</span>
<span style="right:179.60px;top:139.17px;font-size:6.9px;line-height:10.35px;color:#dcdcdc;">魔王鉛筆</span>
<span style="right:179.60px;top:156.07px;font-size:6.9px;line-height:10.35px;color:#dcdcdc;">線画用ペン</span>
<span style="right:179.60px;top:172.57px;font-size:6.9px;line-height:10.35px;color:#dcdcdc;">ミキブラシ</span>
<span style="right:179.60px;top:189.29px;font-size:7.15px;line-height:10.73px;color:#dcdcdc;">SU-Cream Pencil</span>
<span style="left:516.60px;top:226.05px;font-size:6.6px;line-height:9.90px;color:#d0d0d0;">ツールプロパティ[ぼてじわ線画]</span>
<span style="left:484.20px;top:238.22px;font-size:6.9px;line-height:10.35px;color:#d6d6d6;">ぼてじわ線画</span>
<span style="left:490.00px;top:265.22px;font-size:6.9px;line-height:10.35px;color:#e2e2e2;">ブラシサイズ</span>
<span style="right:199.20px;top:274.65px;font-size:7.4px;line-height:11.10px;color:#e8e8e8;">35.0</span>
<span style="left:490.00px;top:287.62px;font-size:6.9px;line-height:10.35px;color:#e2e2e2;">インク</span>
<span style="left:494.00px;top:298.02px;font-size:6.9px;line-height:10.35px;color:#e2e2e2;">不透明度</span>
<span style="right:199.00px;top:300.05px;font-size:7.4px;line-height:11.10px;color:#e8e8e8;">100</span>
<span style="left:490.00px;top:315.82px;font-size:6.9px;line-height:10.35px;color:#e2e2e2;">アンチエイリアス</span>
<span style="left:517.20px;top:353.55px;font-size:6.6px;line-height:9.90px;color:#d0d0d0;">カラーサークル</span>
<span style="left:442.00px;width:200px;text-align:center;top:455.30px;font-size:4px;line-height:6.00px;color:#4b4b4b;font-weight:bold;">H</span>
<span style="left:463.80px;width:200px;text-align:center;top:455.30px;font-size:4px;line-height:6.00px;color:#4b4b4b;font-weight:bold;">S</span>
<span style="left:485.40px;width:200px;text-align:center;top:455.30px;font-size:4px;line-height:6.00px;color:#4b4b4b;font-weight:bold;">V</span>
<span style="left:549.00px;top:452.65px;font-size:7.4px;line-height:11.10px;color:#e0e0e0;">69</span>
<span style="left:571.40px;top:452.65px;font-size:7.4px;line-height:11.10px;color:#e0e0e0;">21</span>
<span style="left:591.60px;top:452.65px;font-size:7.4px;line-height:11.10px;color:#e0e0e0;">29</span>
<span style="left:536.40px;top:472.25px;font-size:6.6px;line-height:9.90px;color:#d0d0d0;">カラーヒストリー</span>
<span style="left:663.60px;top:52.15px;font-size:6.6px;line-height:9.90px;color:#d0d0d0;">ナビゲーター</span>
<span style="left:632.80px;top:140.68px;font-size:8.3px;line-height:12.45px;color:#ececec;transform:scaleX(0.86);transform-origin:0 50%;">29.0</span>
<span style="left:632.80px;top:156.78px;font-size:8.3px;line-height:12.45px;color:#ececec;transform:scaleX(0.86);transform-origin:0 50%;">22.5</span>
<span style="left:663.60px;top:178.45px;font-size:6.6px;line-height:9.90px;color:#d0d0d0;">レイヤープロパティ</span>
<span style="left:635.20px;top:191.62px;font-size:6.9px;line-height:10.35px;color:#e2e2e2;">効果</span>
<span style="left:635.20px;top:219.22px;font-size:6.9px;line-height:10.35px;color:#e2e2e2;">表現色</span>
<span style="left:676.00px;top:233.82px;font-size:6.9px;line-height:10.35px;color:#e8e8e8;">カラー</span>
<span style="left:663.60px;top:256.85px;font-size:6.6px;line-height:9.90px;color:#d0d0d0;">レイヤー</span>
<span style="left:711.40px;top:256.85px;font-size:6.6px;line-height:9.90px;color:#747474;">レイヤー検索</span>
<span style="left:666.80px;top:271.22px;font-size:6.9px;line-height:10.35px;color:#e8e8e8;">通常</span>
<span style="right:40.60px;top:270.65px;font-size:7.4px;line-height:11.10px;color:#e8e8e8;">23</span>
<span style="left:688.20px;top:325.32px;font-size:6.9px;line-height:10.35px;color:#d0d0d0;">100 % 通常</span>
<span style="left:688.20px;top:337.23px;font-size:6.9px;line-height:10.35px;color:#d0d0d0;">レイヤー 4</span>
<span style="left:688.20px;top:351.92px;font-size:6.9px;line-height:10.35px;color:#d0d0d0;">32 % 通常</span>
<span style="left:688.20px;top:363.82px;font-size:6.9px;line-height:10.35px;color:#d0d0d0;">レイヤー 5</span>
<span style="left:688.20px;top:379.32px;font-size:6.9px;line-height:10.35px;color:#d0d0d0;">100 % 通常</span>
<span style="left:688.20px;top:391.23px;font-size:6.9px;line-height:10.35px;color:#d0d0d0;">レイヤー 3</span>
<span style="left:688.20px;top:406.82px;font-size:6.9px;line-height:10.35px;color:#d0d0d0;">16 % 通常</span>
<span style="left:688.20px;top:418.73px;font-size:6.9px;line-height:10.35px;color:#d0d0d0;">レイヤー 2</span>
<span style="left:688.20px;top:434.52px;font-size:6.9px;line-height:10.35px;color:#e4e6ee;">23 % 通常</span>
<span style="left:688.20px;top:446.43px;font-size:6.9px;line-height:10.35px;color:#e4e6ee;">レイヤー 6</span>
<span style="left:688.20px;top:461.72px;font-size:6.9px;line-height:10.35px;color:#d0d0d0;">37 % 通常</span>
<span style="left:688.20px;top:473.62px;font-size:6.9px;line-height:10.35px;color:#d0d0d0;">レイヤー 1</span>
<span style="left:688.20px;top:501.43px;font-size:6.9px;line-height:10.35px;color:#e0e0e0;">用紙</span>
</div>
</div></body></html>
